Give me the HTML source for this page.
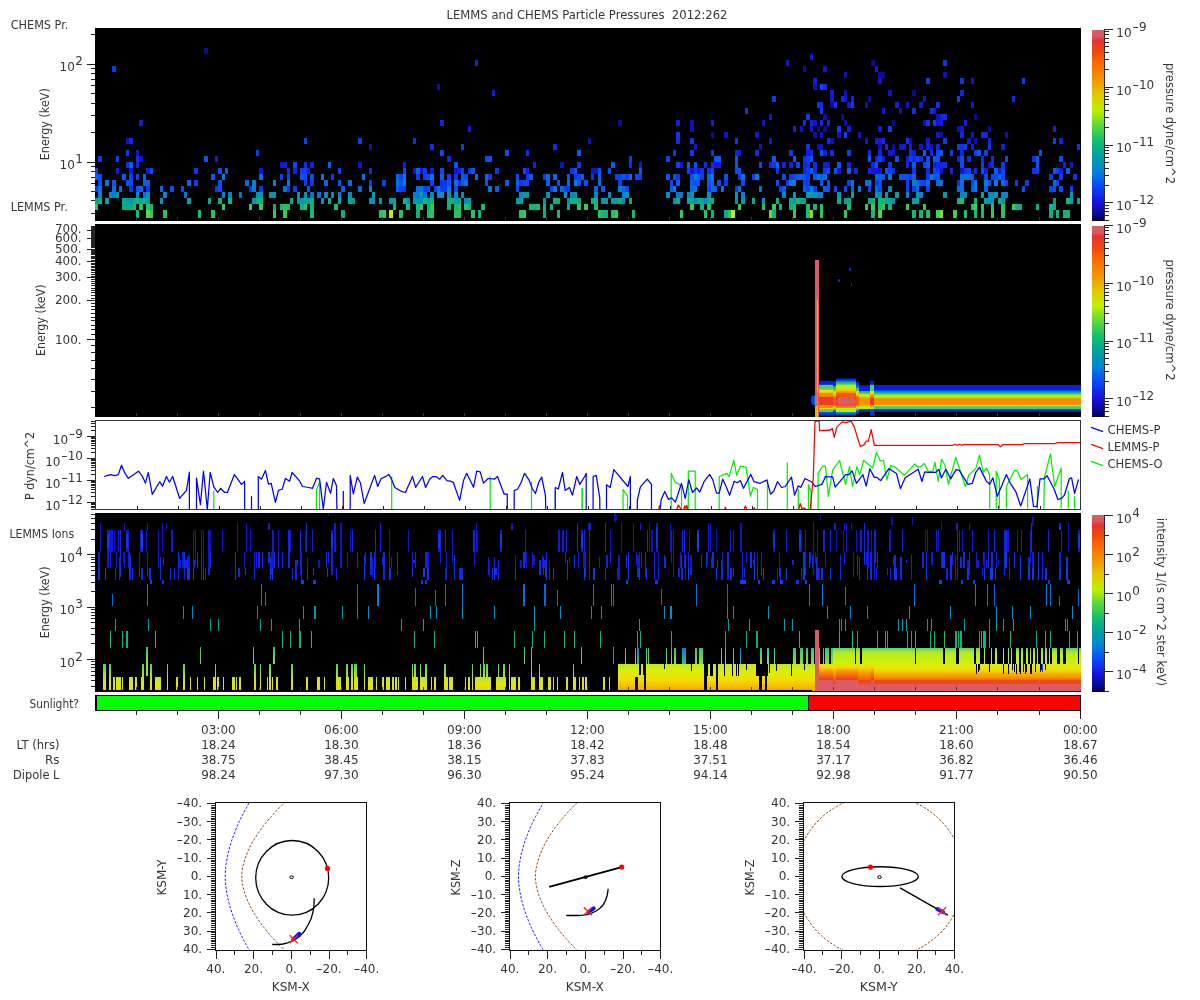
<!DOCTYPE html>
<html><head><meta charset="utf-8"><title>LEMMS and CHEMS Particle Pressures 2012:262</title>
<style>html,body{margin:0;padding:0;background:#fff}svg{display:block}</style></head>
<body>
<svg width="1200" height="1000" viewBox="0 0 1200 1000" font-family="'DejaVu Sans','Liberation Sans',sans-serif" font-size="12" fill="#363636" style="will-change:transform">
<defs>
<linearGradient id="cb" x1="0" y1="0" x2="0" y2="1"><stop offset="0.000" stop-color="#d86064"/><stop offset="0.035" stop-color="#dc555c"/><stop offset="0.055" stop-color="#e63237"/><stop offset="0.115" stop-color="#f04808"/><stop offset="0.180" stop-color="#fa6e00"/><stop offset="0.260" stop-color="#f29600"/><stop offset="0.340" stop-color="#e1c800"/><stop offset="0.420" stop-color="#bef000"/><stop offset="0.500" stop-color="#5ad73c"/><stop offset="0.580" stop-color="#14be6e"/><stop offset="0.660" stop-color="#00a0a0"/><stop offset="0.740" stop-color="#0082dc"/><stop offset="0.820" stop-color="#0a46fa"/><stop offset="0.900" stop-color="#1414dc"/><stop offset="0.960" stop-color="#0a0a96"/><stop offset="1.000" stop-color="#00005a"/></linearGradient>
</defs>
<rect x="0" y="0" width="1200" height="1000" fill="#fff"/>
<text x="446.5" y="19.2" textLength="281" lengthAdjust="spacingAndGlyphs" style="white-space:pre">LEMMS and CHEMS Particle Pressures  2012:262</text>
<text x="10.7" y="28.7" textLength="57.7" lengthAdjust="spacingAndGlyphs">CHEMS Pr.</text>
<text x="10.7" y="210.8" textLength="57" lengthAdjust="spacingAndGlyphs">LEMMS Pr.</text>
<text x="9.5" y="537.5" textLength="64.6" lengthAdjust="spacingAndGlyphs">LEMMS Ions</text>
<g shape-rendering="crispEdges">
<rect x="95" y="28" width="986" height="193" fill="#000"/>
<rect x="95" y="204" width="3" height="6" fill="#26c461"/>
<rect x="95" y="198" width="3" height="6" fill="#04a597"/>
<rect x="95" y="186" width="3" height="6" fill="#0d39f2"/>
<rect x="95" y="174" width="3" height="6" fill="#065def"/>
<rect x="95" y="168" width="3" height="6" fill="#0c3cf4"/>
<rect x="98" y="198" width="4" height="6" fill="#0db380"/>
<rect x="98" y="192" width="4" height="6" fill="#017ede"/>
<rect x="98" y="186" width="4" height="6" fill="#0370e5"/>
<rect x="98" y="180" width="4" height="6" fill="#0a48f9"/>
<rect x="98" y="174" width="4" height="6" fill="#094cf7"/>
<rect x="98" y="156" width="4" height="6" fill="#0d37f1"/>
<rect x="105" y="198" width="4" height="6" fill="#02a39a"/>
<rect x="105" y="180" width="4" height="6" fill="#0276e2"/>
<rect x="109" y="192" width="3" height="6" fill="#0089ce"/>
<rect x="112" y="192" width="4" height="6" fill="#017dde"/>
<rect x="112" y="186" width="4" height="6" fill="#0372e4"/>
<rect x="112" y="180" width="4" height="6" fill="#0758f1"/>
<rect x="112" y="66" width="4" height="6" fill="#0d38f2"/>
<rect x="116" y="192" width="3" height="6" fill="#009aac"/>
<rect x="116" y="168" width="3" height="6" fill="#131be0"/>
<rect x="116" y="156" width="3" height="6" fill="#0c3ef5"/>
<rect x="119" y="186" width="3" height="6" fill="#046de7"/>
<rect x="122" y="204" width="4" height="6" fill="#07ab8d"/>
<rect x="122" y="198" width="4" height="6" fill="#04a795"/>
<rect x="122" y="174" width="4" height="6" fill="#065bef"/>
<rect x="126" y="204" width="3" height="6" fill="#07ab8d"/>
<rect x="126" y="198" width="3" height="6" fill="#01a19e"/>
<rect x="126" y="180" width="3" height="6" fill="#0853f3"/>
<rect x="126" y="162" width="3" height="6" fill="#1028e8"/>
<rect x="126" y="150" width="3" height="6" fill="#0c3bf3"/>
<rect x="126" y="138" width="3" height="6" fill="#1111c8"/>
<rect x="129" y="204" width="4" height="6" fill="#07ab8d"/>
<rect x="129" y="198" width="4" height="6" fill="#0095b6"/>
<rect x="129" y="186" width="4" height="6" fill="#0e34ef"/>
<rect x="129" y="180" width="4" height="6" fill="#0a45f9"/>
<rect x="129" y="174" width="4" height="6" fill="#0b43f8"/>
<rect x="129" y="168" width="4" height="6" fill="#1318de"/>
<rect x="129" y="162" width="4" height="6" fill="#0563eb"/>
<rect x="129" y="138" width="4" height="6" fill="#1028e8"/>
<rect x="133" y="204" width="3" height="6" fill="#14be6e"/>
<rect x="133" y="198" width="3" height="6" fill="#0aaf87"/>
<rect x="136" y="210" width="3" height="8" fill="#14be6e"/>
<rect x="136" y="198" width="3" height="6" fill="#0eb57d"/>
<rect x="136" y="192" width="3" height="6" fill="#0084d8"/>
<rect x="136" y="186" width="3" height="6" fill="#094ff6"/>
<rect x="136" y="174" width="3" height="6" fill="#0b41f7"/>
<rect x="136" y="162" width="3" height="6" fill="#1123e5"/>
<rect x="136" y="156" width="3" height="6" fill="#0f2eec"/>
<rect x="136" y="150" width="3" height="6" fill="#1313d4"/>
<rect x="139" y="204" width="4" height="6" fill="#26c461"/>
<rect x="139" y="198" width="4" height="6" fill="#03a598"/>
<rect x="139" y="186" width="4" height="6" fill="#0468e9"/>
<rect x="139" y="156" width="4" height="6" fill="#1313d7"/>
<rect x="139" y="120" width="4" height="6" fill="#131adf"/>
<rect x="143" y="198" width="3" height="6" fill="#0db381"/>
<rect x="143" y="192" width="3" height="6" fill="#036fe5"/>
<rect x="143" y="180" width="3" height="6" fill="#0661ed"/>
<rect x="143" y="174" width="3" height="6" fill="#0565ea"/>
<rect x="146" y="210" width="4" height="8" fill="#5ad73c"/>
<rect x="146" y="204" width="4" height="6" fill="#26c461"/>
<rect x="146" y="198" width="4" height="6" fill="#009ca8"/>
<rect x="146" y="192" width="4" height="6" fill="#008ec3"/>
<rect x="146" y="186" width="4" height="6" fill="#0c3bf3"/>
<rect x="146" y="180" width="4" height="6" fill="#0759f1"/>
<rect x="146" y="168" width="4" height="6" fill="#131be0"/>
<rect x="150" y="210" width="3" height="8" fill="#37ca55"/>
<rect x="150" y="204" width="3" height="6" fill="#0fb67a"/>
<rect x="150" y="168" width="3" height="6" fill="#094df7"/>
<rect x="160" y="198" width="3" height="6" fill="#0092bb"/>
<rect x="160" y="186" width="3" height="6" fill="#046ae8"/>
<rect x="163" y="210" width="4" height="8" fill="#26c461"/>
<rect x="163" y="192" width="4" height="6" fill="#0083d9"/>
<rect x="170" y="186" width="4" height="6" fill="#0851f4"/>
<rect x="181" y="186" width="3" height="6" fill="#0a48f9"/>
<rect x="184" y="192" width="3" height="6" fill="#0273e3"/>
<rect x="187" y="198" width="4" height="6" fill="#03a499"/>
<rect x="187" y="180" width="4" height="6" fill="#0563ec"/>
<rect x="194" y="180" width="4" height="6" fill="#0c3cf4"/>
<rect x="194" y="168" width="4" height="6" fill="#0e32ee"/>
<rect x="198" y="210" width="3" height="8" fill="#14be6e"/>
<rect x="204" y="156" width="4" height="6" fill="#0851f5"/>
<rect x="204" y="48" width="4" height="6" fill="#0b0b9f"/>
<rect x="208" y="198" width="3" height="6" fill="#04a795"/>
<rect x="211" y="210" width="4" height="8" fill="#26c461"/>
<rect x="211" y="174" width="4" height="6" fill="#0759f0"/>
<rect x="215" y="186" width="3" height="6" fill="#0c3bf3"/>
<rect x="215" y="156" width="3" height="6" fill="#1319df"/>
<rect x="218" y="198" width="4" height="6" fill="#09ae89"/>
<rect x="218" y="186" width="4" height="6" fill="#094bf7"/>
<rect x="218" y="180" width="4" height="6" fill="#094cf7"/>
<rect x="218" y="168" width="4" height="6" fill="#094df7"/>
<rect x="222" y="204" width="3" height="6" fill="#37ca55"/>
<rect x="222" y="192" width="3" height="6" fill="#0089cd"/>
<rect x="222" y="174" width="3" height="6" fill="#017dde"/>
<rect x="225" y="168" width="3" height="6" fill="#0855f3"/>
<rect x="228" y="198" width="4" height="6" fill="#0eb57d"/>
<rect x="228" y="192" width="4" height="6" fill="#0085d6"/>
<rect x="239" y="192" width="3" height="6" fill="#0275e2"/>
<rect x="245" y="180" width="4" height="6" fill="#0469e9"/>
<rect x="249" y="204" width="3" height="6" fill="#37ca55"/>
<rect x="249" y="186" width="3" height="6" fill="#0d36f1"/>
<rect x="252" y="198" width="4" height="6" fill="#0095b6"/>
<rect x="252" y="186" width="4" height="6" fill="#0080dd"/>
<rect x="252" y="180" width="4" height="6" fill="#0082dc"/>
<rect x="256" y="198" width="3" height="6" fill="#0db47f"/>
<rect x="256" y="192" width="3" height="6" fill="#0097b1"/>
<rect x="256" y="150" width="3" height="6" fill="#0c3cf4"/>
<rect x="259" y="204" width="4" height="6" fill="#37ca55"/>
<rect x="259" y="198" width="4" height="6" fill="#0eb57d"/>
<rect x="259" y="192" width="4" height="6" fill="#0097b1"/>
<rect x="259" y="186" width="4" height="6" fill="#0e34ef"/>
<rect x="259" y="174" width="4" height="6" fill="#046ce7"/>
<rect x="259" y="168" width="4" height="6" fill="#1313d8"/>
<rect x="269" y="192" width="4" height="6" fill="#0095b7"/>
<rect x="273" y="210" width="3" height="8" fill="#37ca55"/>
<rect x="273" y="204" width="3" height="6" fill="#07ab8d"/>
<rect x="273" y="192" width="3" height="6" fill="#0098b0"/>
<rect x="273" y="180" width="3" height="6" fill="#0080dd"/>
<rect x="280" y="204" width="3" height="6" fill="#14be6e"/>
<rect x="280" y="174" width="3" height="6" fill="#0b41f7"/>
<rect x="280" y="162" width="3" height="6" fill="#1313d8"/>
<rect x="283" y="210" width="4" height="8" fill="#37ca55"/>
<rect x="283" y="204" width="4" height="6" fill="#26c461"/>
<rect x="283" y="186" width="4" height="6" fill="#0370e5"/>
<rect x="283" y="162" width="4" height="6" fill="#131adf"/>
<rect x="287" y="204" width="3" height="6" fill="#14be6e"/>
<rect x="287" y="186" width="3" height="6" fill="#0d35f0"/>
<rect x="287" y="180" width="3" height="6" fill="#0080dd"/>
<rect x="287" y="174" width="3" height="6" fill="#0b43f8"/>
<rect x="287" y="168" width="3" height="6" fill="#0f2bea"/>
<rect x="290" y="198" width="3" height="6" fill="#08ac8b"/>
<rect x="293" y="186" width="4" height="6" fill="#0c3df4"/>
<rect x="293" y="168" width="4" height="6" fill="#1027e7"/>
<rect x="293" y="162" width="4" height="6" fill="#0a46fa"/>
<rect x="297" y="198" width="3" height="6" fill="#009ca8"/>
<rect x="297" y="192" width="3" height="6" fill="#0096b4"/>
<rect x="300" y="204" width="4" height="6" fill="#0db381"/>
<rect x="300" y="198" width="4" height="6" fill="#0092bb"/>
<rect x="300" y="174" width="4" height="6" fill="#0851f5"/>
<rect x="300" y="168" width="4" height="6" fill="#0c3ef5"/>
<rect x="304" y="204" width="3" height="6" fill="#26c461"/>
<rect x="304" y="198" width="3" height="6" fill="#06a990"/>
<rect x="304" y="192" width="3" height="6" fill="#0097b1"/>
<rect x="304" y="180" width="3" height="6" fill="#0c3bf3"/>
<rect x="304" y="174" width="3" height="6" fill="#094af8"/>
<rect x="304" y="168" width="3" height="6" fill="#0a44f9"/>
<rect x="304" y="162" width="3" height="6" fill="#0e30ed"/>
<rect x="304" y="138" width="3" height="6" fill="#0c3ef5"/>
<rect x="307" y="198" width="3" height="6" fill="#04a697"/>
<rect x="307" y="186" width="3" height="6" fill="#075af0"/>
<rect x="307" y="168" width="3" height="6" fill="#1124e6"/>
<rect x="310" y="210" width="4" height="8" fill="#14be6e"/>
<rect x="310" y="204" width="4" height="6" fill="#0db381"/>
<rect x="310" y="198" width="4" height="6" fill="#09ad8a"/>
<rect x="310" y="192" width="4" height="6" fill="#0371e5"/>
<rect x="310" y="180" width="4" height="6" fill="#0d38f1"/>
<rect x="310" y="174" width="4" height="6" fill="#0854f3"/>
<rect x="310" y="162" width="4" height="6" fill="#1220e3"/>
<rect x="317" y="192" width="4" height="6" fill="#036fe5"/>
<rect x="321" y="198" width="3" height="6" fill="#009aab"/>
<rect x="321" y="174" width="3" height="6" fill="#0179e0"/>
<rect x="324" y="192" width="4" height="6" fill="#0089cd"/>
<rect x="324" y="180" width="4" height="6" fill="#0565eb"/>
<rect x="328" y="198" width="3" height="6" fill="#0cb282"/>
<rect x="328" y="162" width="3" height="6" fill="#065dee"/>
<rect x="331" y="192" width="3" height="6" fill="#008bca"/>
<rect x="331" y="174" width="3" height="6" fill="#0c3cf4"/>
<rect x="334" y="204" width="4" height="6" fill="#14be6e"/>
<rect x="338" y="198" width="3" height="6" fill="#07ab8e"/>
<rect x="338" y="192" width="3" height="6" fill="#0081dc"/>
<rect x="338" y="180" width="3" height="6" fill="#094df7"/>
<rect x="338" y="168" width="3" height="6" fill="#0b41f7"/>
<rect x="341" y="210" width="4" height="8" fill="#0aaf87"/>
<rect x="341" y="186" width="4" height="6" fill="#0759f1"/>
<rect x="348" y="198" width="4" height="6" fill="#07aa90"/>
<rect x="348" y="192" width="4" height="6" fill="#008fc2"/>
<rect x="348" y="180" width="4" height="6" fill="#046ae8"/>
<rect x="352" y="198" width="3" height="6" fill="#00a19f"/>
<rect x="358" y="186" width="4" height="6" fill="#0562ec"/>
<rect x="358" y="162" width="4" height="6" fill="#1414d9"/>
<rect x="358" y="138" width="4" height="6" fill="#0c3cf4"/>
<rect x="362" y="174" width="3" height="6" fill="#0277e2"/>
<rect x="369" y="198" width="3" height="6" fill="#0093ba"/>
<rect x="369" y="186" width="3" height="6" fill="#0081dc"/>
<rect x="369" y="180" width="3" height="6" fill="#0c3bf3"/>
<rect x="369" y="168" width="3" height="6" fill="#0f2cea"/>
<rect x="369" y="144" width="3" height="6" fill="#1010bd"/>
<rect x="372" y="198" width="3" height="6" fill="#0098b0"/>
<rect x="372" y="192" width="3" height="6" fill="#009aad"/>
<rect x="379" y="210" width="3" height="8" fill="#26c461"/>
<rect x="379" y="198" width="3" height="6" fill="#0099ae"/>
<rect x="382" y="210" width="4" height="8" fill="#37ca55"/>
<rect x="382" y="180" width="4" height="6" fill="#0b40f7"/>
<rect x="389" y="210" width="4" height="8" fill="#bef000"/>
<rect x="389" y="198" width="4" height="6" fill="#0095b6"/>
<rect x="393" y="204" width="3" height="6" fill="#0db381"/>
<rect x="393" y="198" width="3" height="6" fill="#02a39b"/>
<rect x="396" y="186" width="3" height="6" fill="#065cef"/>
<rect x="396" y="180" width="3" height="6" fill="#0370e5"/>
<rect x="396" y="174" width="3" height="6" fill="#0562ec"/>
<rect x="399" y="210" width="4" height="8" fill="#26c461"/>
<rect x="399" y="186" width="4" height="6" fill="#0a45f9"/>
<rect x="399" y="180" width="4" height="6" fill="#0853f3"/>
<rect x="399" y="174" width="4" height="6" fill="#0b41f7"/>
<rect x="403" y="198" width="3" height="6" fill="#0bb184"/>
<rect x="403" y="186" width="3" height="6" fill="#0d35f0"/>
<rect x="403" y="180" width="3" height="6" fill="#0080dd"/>
<rect x="403" y="174" width="3" height="6" fill="#017be0"/>
<rect x="403" y="168" width="3" height="6" fill="#094af8"/>
<rect x="403" y="162" width="3" height="6" fill="#131be0"/>
<rect x="406" y="204" width="4" height="6" fill="#14be6e"/>
<rect x="406" y="198" width="4" height="6" fill="#0096b3"/>
<rect x="413" y="198" width="3" height="6" fill="#009ba9"/>
<rect x="413" y="192" width="3" height="6" fill="#0085d6"/>
<rect x="413" y="168" width="3" height="6" fill="#1414da"/>
<rect x="413" y="138" width="3" height="6" fill="#0f2fec"/>
<rect x="416" y="210" width="4" height="8" fill="#0aaf87"/>
<rect x="416" y="204" width="4" height="6" fill="#14be6e"/>
<rect x="416" y="198" width="4" height="6" fill="#0094b9"/>
<rect x="416" y="192" width="4" height="6" fill="#0273e3"/>
<rect x="416" y="186" width="4" height="6" fill="#0372e4"/>
<rect x="416" y="174" width="4" height="6" fill="#0d39f2"/>
<rect x="416" y="168" width="4" height="6" fill="#0564eb"/>
<rect x="420" y="204" width="3" height="6" fill="#37ca55"/>
<rect x="420" y="198" width="3" height="6" fill="#0091be"/>
<rect x="420" y="192" width="3" height="6" fill="#009bab"/>
<rect x="420" y="186" width="3" height="6" fill="#0370e5"/>
<rect x="420" y="168" width="3" height="6" fill="#1313d7"/>
<rect x="423" y="198" width="4" height="6" fill="#0fb67b"/>
<rect x="423" y="192" width="4" height="6" fill="#0370e5"/>
<rect x="423" y="186" width="4" height="6" fill="#0c3df4"/>
<rect x="423" y="174" width="4" height="6" fill="#0b43f8"/>
<rect x="423" y="168" width="4" height="6" fill="#0c3af3"/>
<rect x="427" y="210" width="3" height="8" fill="#14be6e"/>
<rect x="427" y="204" width="3" height="6" fill="#07ab8d"/>
<rect x="427" y="198" width="3" height="6" fill="#02a39a"/>
<rect x="427" y="186" width="3" height="6" fill="#084ff5"/>
<rect x="427" y="174" width="3" height="6" fill="#0850f5"/>
<rect x="430" y="210" width="4" height="8" fill="#26c461"/>
<rect x="430" y="204" width="4" height="6" fill="#37ca55"/>
<rect x="430" y="198" width="4" height="6" fill="#0eb57c"/>
<rect x="430" y="192" width="4" height="6" fill="#0086d4"/>
<rect x="430" y="180" width="4" height="6" fill="#0b41f7"/>
<rect x="430" y="174" width="4" height="6" fill="#0276e2"/>
<rect x="430" y="168" width="4" height="6" fill="#1319df"/>
<rect x="430" y="144" width="4" height="6" fill="#1029e9"/>
<rect x="434" y="186" width="3" height="6" fill="#0c3ef5"/>
<rect x="437" y="192" width="3" height="6" fill="#0089ce"/>
<rect x="437" y="186" width="3" height="6" fill="#0370e5"/>
<rect x="437" y="84" width="3" height="6" fill="#0e0eb3"/>
<rect x="440" y="192" width="4" height="6" fill="#0093ba"/>
<rect x="440" y="186" width="4" height="6" fill="#0c3ef5"/>
<rect x="440" y="180" width="4" height="6" fill="#0d36f0"/>
<rect x="440" y="174" width="4" height="6" fill="#065fed"/>
<rect x="440" y="168" width="4" height="6" fill="#0a46fa"/>
<rect x="440" y="150" width="4" height="6" fill="#0949f8"/>
<rect x="440" y="120" width="4" height="6" fill="#1123e5"/>
<rect x="444" y="186" width="3" height="6" fill="#0c3af3"/>
<rect x="444" y="180" width="3" height="6" fill="#0d37f1"/>
<rect x="447" y="204" width="4" height="6" fill="#0fb67a"/>
<rect x="447" y="198" width="4" height="6" fill="#0aaf88"/>
<rect x="447" y="192" width="4" height="6" fill="#0099ad"/>
<rect x="447" y="186" width="4" height="6" fill="#017dde"/>
<rect x="447" y="180" width="4" height="6" fill="#0851f4"/>
<rect x="447" y="174" width="4" height="6" fill="#0a44f9"/>
<rect x="447" y="156" width="4" height="6" fill="#102ae9"/>
<rect x="451" y="198" width="3" height="6" fill="#0aaf86"/>
<rect x="454" y="210" width="4" height="8" fill="#26c461"/>
<rect x="454" y="204" width="4" height="6" fill="#0fb67a"/>
<rect x="454" y="198" width="4" height="6" fill="#009ea4"/>
<rect x="454" y="192" width="4" height="6" fill="#008fc2"/>
<rect x="454" y="186" width="4" height="6" fill="#094cf7"/>
<rect x="454" y="180" width="4" height="6" fill="#0274e3"/>
<rect x="454" y="174" width="4" height="6" fill="#0e34ef"/>
<rect x="454" y="168" width="4" height="6" fill="#1313d3"/>
<rect x="454" y="162" width="4" height="6" fill="#0852f4"/>
<rect x="458" y="210" width="3" height="8" fill="#26c461"/>
<rect x="458" y="204" width="3" height="6" fill="#26c461"/>
<rect x="458" y="198" width="3" height="6" fill="#04a696"/>
<rect x="458" y="180" width="3" height="6" fill="#0e34ef"/>
<rect x="458" y="168" width="3" height="6" fill="#1122e4"/>
<rect x="461" y="192" width="3" height="6" fill="#0098b1"/>
<rect x="461" y="180" width="3" height="6" fill="#094ff6"/>
<rect x="461" y="174" width="3" height="6" fill="#075af0"/>
<rect x="461" y="168" width="3" height="6" fill="#0b3ff6"/>
<rect x="461" y="144" width="3" height="6" fill="#0c3bf3"/>
<rect x="464" y="204" width="4" height="6" fill="#26c461"/>
<rect x="464" y="198" width="4" height="6" fill="#008fc2"/>
<rect x="464" y="180" width="4" height="6" fill="#0372e4"/>
<rect x="464" y="174" width="4" height="6" fill="#0a49f9"/>
<rect x="468" y="204" width="3" height="6" fill="#0fb67a"/>
<rect x="468" y="198" width="3" height="6" fill="#0099ae"/>
<rect x="468" y="168" width="3" height="6" fill="#0f2eeb"/>
<rect x="468" y="126" width="3" height="6" fill="#131adf"/>
<rect x="471" y="210" width="4" height="8" fill="#26c461"/>
<rect x="471" y="168" width="4" height="6" fill="#0757f1"/>
<rect x="475" y="174" width="3" height="6" fill="#046ae8"/>
<rect x="475" y="60" width="3" height="6" fill="#1122e4"/>
<rect x="478" y="210" width="3" height="8" fill="#0fb67a"/>
<rect x="481" y="204" width="4" height="6" fill="#14be6e"/>
<rect x="485" y="180" width="3" height="6" fill="#094df7"/>
<rect x="485" y="174" width="3" height="6" fill="#046ce7"/>
<rect x="485" y="156" width="3" height="6" fill="#0a48f9"/>
<rect x="488" y="186" width="4" height="6" fill="#0179e0"/>
<rect x="488" y="174" width="4" height="6" fill="#0c3bf3"/>
<rect x="488" y="156" width="4" height="6" fill="#0852f4"/>
<rect x="492" y="90" width="3" height="6" fill="#121ce1"/>
<rect x="495" y="186" width="4" height="6" fill="#065dee"/>
<rect x="495" y="168" width="4" height="6" fill="#0e34ef"/>
<rect x="505" y="180" width="4" height="6" fill="#065cef"/>
<rect x="505" y="150" width="4" height="6" fill="#094ef6"/>
<rect x="516" y="198" width="3" height="6" fill="#01a19e"/>
<rect x="516" y="186" width="3" height="6" fill="#0a45f9"/>
<rect x="516" y="180" width="3" height="6" fill="#0660ed"/>
<rect x="516" y="174" width="3" height="6" fill="#0a48f9"/>
<rect x="519" y="210" width="4" height="8" fill="#26c461"/>
<rect x="519" y="198" width="4" height="6" fill="#009fa1"/>
<rect x="519" y="192" width="4" height="6" fill="#0088d0"/>
<rect x="519" y="180" width="4" height="6" fill="#0c3bf4"/>
<rect x="523" y="210" width="3" height="8" fill="#37ca55"/>
<rect x="523" y="192" width="3" height="6" fill="#0095b6"/>
<rect x="523" y="180" width="3" height="6" fill="#0a47fa"/>
<rect x="523" y="168" width="3" height="6" fill="#0a47f9"/>
<rect x="526" y="192" width="3" height="6" fill="#009ba9"/>
<rect x="526" y="180" width="3" height="6" fill="#0949f8"/>
<rect x="526" y="174" width="3" height="6" fill="#0d38f1"/>
<rect x="526" y="168" width="3" height="6" fill="#131be0"/>
<rect x="526" y="150" width="3" height="6" fill="#0f2cea"/>
<rect x="529" y="204" width="4" height="6" fill="#0fb67a"/>
<rect x="529" y="174" width="4" height="6" fill="#065eee"/>
<rect x="533" y="204" width="3" height="6" fill="#0db381"/>
<rect x="533" y="162" width="3" height="6" fill="#1122e4"/>
<rect x="536" y="204" width="4" height="6" fill="#14be6e"/>
<rect x="543" y="210" width="3" height="8" fill="#0aaf87"/>
<rect x="543" y="204" width="3" height="6" fill="#0db381"/>
<rect x="543" y="198" width="3" height="6" fill="#0097b3"/>
<rect x="543" y="174" width="3" height="6" fill="#0c3bf3"/>
<rect x="546" y="192" width="4" height="6" fill="#0095b7"/>
<rect x="546" y="180" width="4" height="6" fill="#0660ed"/>
<rect x="546" y="174" width="4" height="6" fill="#046ae8"/>
<rect x="550" y="204" width="3" height="6" fill="#0fb67a"/>
<rect x="550" y="186" width="3" height="6" fill="#0d38f1"/>
<rect x="553" y="198" width="4" height="6" fill="#0aae88"/>
<rect x="553" y="186" width="4" height="6" fill="#0276e2"/>
<rect x="553" y="174" width="4" height="6" fill="#046ae8"/>
<rect x="553" y="144" width="4" height="6" fill="#0f2deb"/>
<rect x="557" y="210" width="3" height="8" fill="#14be6e"/>
<rect x="557" y="198" width="3" height="6" fill="#0aaf87"/>
<rect x="557" y="180" width="3" height="6" fill="#084ff5"/>
<rect x="560" y="186" width="4" height="6" fill="#046ce7"/>
<rect x="560" y="162" width="4" height="6" fill="#1212d0"/>
<rect x="564" y="192" width="3" height="6" fill="#0098b0"/>
<rect x="564" y="186" width="3" height="6" fill="#0c3ef5"/>
<rect x="567" y="204" width="3" height="6" fill="#07ab8d"/>
<rect x="567" y="198" width="3" height="6" fill="#008ec3"/>
<rect x="567" y="186" width="3" height="6" fill="#0d38f2"/>
<rect x="567" y="180" width="3" height="6" fill="#046de7"/>
<rect x="567" y="174" width="3" height="6" fill="#0756f2"/>
<rect x="570" y="198" width="4" height="6" fill="#0db380"/>
<rect x="570" y="192" width="4" height="6" fill="#008dc6"/>
<rect x="570" y="168" width="4" height="6" fill="#0d38f2"/>
<rect x="574" y="198" width="3" height="6" fill="#0db381"/>
<rect x="574" y="192" width="3" height="6" fill="#0093ba"/>
<rect x="574" y="180" width="3" height="6" fill="#017cdf"/>
<rect x="574" y="174" width="3" height="6" fill="#0d35f0"/>
<rect x="574" y="168" width="3" height="6" fill="#075af0"/>
<rect x="577" y="204" width="4" height="6" fill="#26c461"/>
<rect x="577" y="198" width="4" height="6" fill="#0bb183"/>
<rect x="577" y="180" width="4" height="6" fill="#0756f2"/>
<rect x="577" y="174" width="4" height="6" fill="#0b42f8"/>
<rect x="577" y="162" width="4" height="6" fill="#0d37f1"/>
<rect x="577" y="150" width="4" height="6" fill="#0757f1"/>
<rect x="581" y="174" width="3" height="6" fill="#075af0"/>
<rect x="584" y="204" width="4" height="6" fill="#37ca55"/>
<rect x="584" y="180" width="4" height="6" fill="#094ef6"/>
<rect x="588" y="138" width="3" height="6" fill="#0e0eb3"/>
<rect x="591" y="198" width="3" height="6" fill="#0cb183"/>
<rect x="591" y="174" width="3" height="6" fill="#0d37f1"/>
<rect x="591" y="168" width="3" height="6" fill="#1313d4"/>
<rect x="594" y="204" width="4" height="6" fill="#14be6e"/>
<rect x="594" y="198" width="4" height="6" fill="#0cb282"/>
<rect x="594" y="192" width="4" height="6" fill="#0087d2"/>
<rect x="594" y="186" width="4" height="6" fill="#0564eb"/>
<rect x="594" y="168" width="4" height="6" fill="#1313d8"/>
<rect x="598" y="210" width="3" height="8" fill="#26c461"/>
<rect x="598" y="180" width="3" height="6" fill="#036ee6"/>
<rect x="598" y="174" width="3" height="6" fill="#0562ec"/>
<rect x="598" y="168" width="3" height="6" fill="#0756f2"/>
<rect x="601" y="210" width="4" height="8" fill="#0fb67a"/>
<rect x="601" y="198" width="4" height="6" fill="#0098b0"/>
<rect x="601" y="186" width="4" height="6" fill="#0759f0"/>
<rect x="605" y="210" width="3" height="8" fill="#0fb67a"/>
<rect x="605" y="198" width="3" height="6" fill="#00a09f"/>
<rect x="608" y="192" width="3" height="6" fill="#0088d0"/>
<rect x="608" y="168" width="3" height="6" fill="#0a45fa"/>
<rect x="611" y="210" width="4" height="8" fill="#26c461"/>
<rect x="611" y="198" width="4" height="6" fill="#009ca7"/>
<rect x="611" y="162" width="4" height="6" fill="#0660ed"/>
<rect x="615" y="210" width="3" height="8" fill="#37ca55"/>
<rect x="615" y="198" width="3" height="6" fill="#009ea3"/>
<rect x="615" y="174" width="3" height="6" fill="#0b41f7"/>
<rect x="618" y="198" width="4" height="6" fill="#07ab8d"/>
<rect x="618" y="186" width="4" height="6" fill="#017ae0"/>
<rect x="618" y="180" width="4" height="6" fill="#0c3df5"/>
<rect x="618" y="174" width="4" height="6" fill="#0c3ef5"/>
<rect x="618" y="120" width="4" height="6" fill="#0b0b9f"/>
<rect x="622" y="198" width="3" height="6" fill="#0090c0"/>
<rect x="622" y="192" width="3" height="6" fill="#0083da"/>
<rect x="622" y="186" width="3" height="6" fill="#0565ea"/>
<rect x="622" y="174" width="3" height="6" fill="#075af0"/>
<rect x="625" y="192" width="4" height="6" fill="#0099af"/>
<rect x="625" y="186" width="4" height="6" fill="#0b43f8"/>
<rect x="625" y="174" width="4" height="6" fill="#0d39f2"/>
<rect x="629" y="198" width="3" height="6" fill="#06aa90"/>
<rect x="629" y="174" width="3" height="6" fill="#046be8"/>
<rect x="629" y="162" width="3" height="6" fill="#1028e8"/>
<rect x="629" y="156" width="3" height="6" fill="#0c3df5"/>
<rect x="632" y="210" width="3" height="8" fill="#14be6e"/>
<rect x="635" y="174" width="4" height="6" fill="#0a45f9"/>
<rect x="639" y="174" width="3" height="6" fill="#0c3af3"/>
<rect x="639" y="168" width="3" height="6" fill="#075af0"/>
<rect x="639" y="162" width="3" height="6" fill="#1318df"/>
<rect x="666" y="192" width="4" height="6" fill="#008fc3"/>
<rect x="666" y="174" width="4" height="6" fill="#0756f2"/>
<rect x="666" y="156" width="4" height="6" fill="#0a44f9"/>
<rect x="670" y="186" width="3" height="6" fill="#065bef"/>
<rect x="670" y="180" width="3" height="6" fill="#0a47f9"/>
<rect x="673" y="198" width="3" height="6" fill="#0094b7"/>
<rect x="673" y="186" width="3" height="6" fill="#017bdf"/>
<rect x="673" y="174" width="3" height="6" fill="#094ff6"/>
<rect x="673" y="150" width="3" height="6" fill="#0c3af3"/>
<rect x="676" y="198" width="4" height="6" fill="#08ac8c"/>
<rect x="676" y="192" width="4" height="6" fill="#0275e3"/>
<rect x="676" y="180" width="4" height="6" fill="#065def"/>
<rect x="676" y="174" width="4" height="6" fill="#0d37f1"/>
<rect x="676" y="162" width="4" height="6" fill="#0b41f7"/>
<rect x="676" y="138" width="4" height="6" fill="#0e30ed"/>
<rect x="676" y="132" width="4" height="6" fill="#0d38f2"/>
<rect x="676" y="120" width="4" height="6" fill="#1121e4"/>
<rect x="680" y="210" width="3" height="8" fill="#37ca55"/>
<rect x="680" y="192" width="3" height="6" fill="#017be0"/>
<rect x="680" y="162" width="3" height="6" fill="#1414d9"/>
<rect x="687" y="198" width="3" height="6" fill="#09ae89"/>
<rect x="687" y="192" width="3" height="6" fill="#008bc9"/>
<rect x="687" y="168" width="3" height="6" fill="#0a44f9"/>
<rect x="687" y="162" width="3" height="6" fill="#0561ec"/>
<rect x="690" y="204" width="4" height="6" fill="#37ca55"/>
<rect x="690" y="198" width="4" height="6" fill="#02a39a"/>
<rect x="690" y="192" width="4" height="6" fill="#0094b8"/>
<rect x="690" y="186" width="4" height="6" fill="#046be7"/>
<rect x="690" y="180" width="4" height="6" fill="#065fee"/>
<rect x="690" y="174" width="4" height="6" fill="#094ef6"/>
<rect x="690" y="168" width="4" height="6" fill="#1414da"/>
<rect x="690" y="150" width="4" height="6" fill="#0c3af3"/>
<rect x="690" y="138" width="4" height="6" fill="#0e33ee"/>
<rect x="690" y="126" width="4" height="6" fill="#0f0fbc"/>
<rect x="690" y="120" width="4" height="6" fill="#0f0fbc"/>
<rect x="694" y="198" width="3" height="6" fill="#008fc2"/>
<rect x="694" y="186" width="3" height="6" fill="#017cdf"/>
<rect x="694" y="180" width="3" height="6" fill="#0949f8"/>
<rect x="694" y="174" width="3" height="6" fill="#017ede"/>
<rect x="694" y="168" width="3" height="6" fill="#0e32ee"/>
<rect x="694" y="162" width="3" height="6" fill="#094df6"/>
<rect x="694" y="144" width="3" height="6" fill="#1313d4"/>
<rect x="697" y="198" width="3" height="6" fill="#05a893"/>
<rect x="697" y="180" width="3" height="6" fill="#0854f3"/>
<rect x="697" y="174" width="3" height="6" fill="#0661ed"/>
<rect x="697" y="168" width="3" height="6" fill="#1318de"/>
<rect x="700" y="204" width="4" height="6" fill="#0db381"/>
<rect x="700" y="198" width="4" height="6" fill="#05a893"/>
<rect x="700" y="174" width="4" height="6" fill="#0c3bf3"/>
<rect x="700" y="168" width="4" height="6" fill="#0e32ee"/>
<rect x="704" y="210" width="3" height="8" fill="#26c461"/>
<rect x="704" y="198" width="3" height="6" fill="#008ec3"/>
<rect x="704" y="162" width="3" height="6" fill="#1125e6"/>
<rect x="707" y="204" width="4" height="6" fill="#26c461"/>
<rect x="707" y="198" width="4" height="6" fill="#05a893"/>
<rect x="707" y="192" width="4" height="6" fill="#0095b6"/>
<rect x="707" y="186" width="4" height="6" fill="#0b43f8"/>
<rect x="707" y="180" width="4" height="6" fill="#0759f0"/>
<rect x="707" y="174" width="4" height="6" fill="#046be8"/>
<rect x="707" y="168" width="4" height="6" fill="#0f2fec"/>
<rect x="711" y="210" width="3" height="8" fill="#0fb67a"/>
<rect x="711" y="198" width="3" height="6" fill="#0cb282"/>
<rect x="711" y="186" width="3" height="6" fill="#0468e9"/>
<rect x="711" y="180" width="3" height="6" fill="#0566ea"/>
<rect x="711" y="174" width="3" height="6" fill="#0080dd"/>
<rect x="711" y="168" width="3" height="6" fill="#0b43f8"/>
<rect x="711" y="162" width="3" height="6" fill="#0f2eec"/>
<rect x="711" y="150" width="3" height="6" fill="#0d37f1"/>
<rect x="711" y="132" width="3" height="6" fill="#0c0ca2"/>
<rect x="711" y="120" width="3" height="6" fill="#121ce1"/>
<rect x="714" y="186" width="3" height="6" fill="#065def"/>
<rect x="714" y="162" width="3" height="6" fill="#1414dc"/>
<rect x="714" y="156" width="3" height="6" fill="#065cef"/>
<rect x="717" y="180" width="4" height="6" fill="#0850f5"/>
<rect x="717" y="162" width="4" height="6" fill="#131be0"/>
<rect x="717" y="156" width="4" height="6" fill="#0562ec"/>
<rect x="721" y="186" width="3" height="6" fill="#046de7"/>
<rect x="724" y="210" width="4" height="8" fill="#0aaf87"/>
<rect x="724" y="180" width="4" height="6" fill="#0c3af3"/>
<rect x="724" y="174" width="4" height="6" fill="#0852f4"/>
<rect x="724" y="132" width="4" height="6" fill="#1212d0"/>
<rect x="728" y="210" width="3" height="8" fill="#26c461"/>
<rect x="731" y="210" width="4" height="8" fill="#bef000"/>
<rect x="735" y="198" width="3" height="6" fill="#0090c0"/>
<rect x="735" y="192" width="3" height="6" fill="#009aad"/>
<rect x="735" y="186" width="3" height="6" fill="#0d36f0"/>
<rect x="735" y="168" width="3" height="6" fill="#094cf7"/>
<rect x="735" y="162" width="3" height="6" fill="#0854f3"/>
<rect x="735" y="156" width="3" height="6" fill="#0759f0"/>
<rect x="735" y="150" width="3" height="6" fill="#1027e7"/>
<rect x="735" y="138" width="3" height="6" fill="#0d39f2"/>
<rect x="738" y="204" width="3" height="6" fill="#37ca55"/>
<rect x="738" y="186" width="3" height="6" fill="#0370e5"/>
<rect x="738" y="174" width="3" height="6" fill="#0c3af3"/>
<rect x="738" y="168" width="3" height="6" fill="#094ef6"/>
<rect x="738" y="150" width="3" height="6" fill="#1416dd"/>
<rect x="741" y="198" width="4" height="6" fill="#009da6"/>
<rect x="741" y="192" width="4" height="6" fill="#0081dd"/>
<rect x="741" y="180" width="4" height="6" fill="#094af8"/>
<rect x="741" y="174" width="4" height="6" fill="#0277e2"/>
<rect x="745" y="108" width="3" height="6" fill="#0e33ef"/>
<rect x="752" y="198" width="3" height="6" fill="#09ad8a"/>
<rect x="752" y="174" width="3" height="6" fill="#0d38f1"/>
<rect x="755" y="174" width="4" height="6" fill="#0080dd"/>
<rect x="755" y="150" width="4" height="6" fill="#1029e9"/>
<rect x="755" y="132" width="4" height="6" fill="#1414d9"/>
<rect x="759" y="186" width="3" height="6" fill="#0370e5"/>
<rect x="759" y="162" width="3" height="6" fill="#094ef6"/>
<rect x="759" y="144" width="3" height="6" fill="#1010bd"/>
<rect x="762" y="204" width="3" height="6" fill="#26c461"/>
<rect x="762" y="198" width="3" height="6" fill="#0091be"/>
<rect x="762" y="120" width="3" height="6" fill="#1111c8"/>
<rect x="769" y="210" width="3" height="8" fill="#73dd2d"/>
<rect x="769" y="162" width="3" height="6" fill="#0f2ceb"/>
<rect x="769" y="138" width="3" height="6" fill="#1415dd"/>
<rect x="769" y="114" width="3" height="6" fill="#1416dd"/>
<rect x="772" y="210" width="4" height="8" fill="#0fb67a"/>
<rect x="772" y="204" width="4" height="6" fill="#37ca55"/>
<rect x="772" y="162" width="4" height="6" fill="#0d36f0"/>
<rect x="772" y="156" width="4" height="6" fill="#0756f2"/>
<rect x="772" y="96" width="4" height="6" fill="#0c3af3"/>
<rect x="776" y="198" width="3" height="6" fill="#0cb282"/>
<rect x="776" y="180" width="3" height="6" fill="#0852f4"/>
<rect x="776" y="168" width="3" height="6" fill="#0e30ed"/>
<rect x="776" y="162" width="3" height="6" fill="#0564eb"/>
<rect x="779" y="204" width="3" height="6" fill="#0fb67a"/>
<rect x="779" y="186" width="3" height="6" fill="#0b40f6"/>
<rect x="782" y="192" width="4" height="6" fill="#0080dd"/>
<rect x="782" y="186" width="4" height="6" fill="#065fed"/>
<rect x="782" y="174" width="4" height="6" fill="#094bf8"/>
<rect x="782" y="162" width="4" height="6" fill="#1121e4"/>
<rect x="786" y="180" width="3" height="6" fill="#0b40f6"/>
<rect x="786" y="60" width="3" height="6" fill="#1313d4"/>
<rect x="789" y="204" width="4" height="6" fill="#0fb67a"/>
<rect x="789" y="198" width="4" height="6" fill="#04a695"/>
<rect x="789" y="180" width="4" height="6" fill="#007fdd"/>
<rect x="789" y="174" width="4" height="6" fill="#0d38f1"/>
<rect x="789" y="162" width="4" height="6" fill="#1122e4"/>
<rect x="789" y="150" width="4" height="6" fill="#0d36f1"/>
<rect x="793" y="210" width="3" height="8" fill="#37ca55"/>
<rect x="793" y="204" width="3" height="6" fill="#14be6e"/>
<rect x="793" y="198" width="3" height="6" fill="#009ca7"/>
<rect x="793" y="192" width="3" height="6" fill="#0096b5"/>
<rect x="793" y="180" width="3" height="6" fill="#017bdf"/>
<rect x="793" y="174" width="3" height="6" fill="#0b41f7"/>
<rect x="793" y="156" width="3" height="6" fill="#065cef"/>
<rect x="793" y="126" width="3" height="6" fill="#1123e5"/>
<rect x="796" y="198" width="4" height="6" fill="#0fb779"/>
<rect x="796" y="174" width="4" height="6" fill="#065eee"/>
<rect x="796" y="162" width="4" height="6" fill="#0b41f7"/>
<rect x="800" y="198" width="3" height="6" fill="#06a892"/>
<rect x="800" y="174" width="3" height="6" fill="#0563eb"/>
<rect x="800" y="126" width="3" height="6" fill="#1212ce"/>
<rect x="803" y="198" width="3" height="6" fill="#009fa2"/>
<rect x="803" y="186" width="3" height="6" fill="#065cef"/>
<rect x="803" y="180" width="3" height="6" fill="#0b3ff6"/>
<rect x="803" y="174" width="3" height="6" fill="#0854f3"/>
<rect x="803" y="168" width="3" height="6" fill="#1026e7"/>
<rect x="803" y="162" width="3" height="6" fill="#1028e8"/>
<rect x="803" y="156" width="3" height="6" fill="#0f2cea"/>
<rect x="803" y="120" width="3" height="6" fill="#0f2cea"/>
<rect x="803" y="66" width="3" height="6" fill="#0c0ca5"/>
<rect x="806" y="210" width="4" height="8" fill="#1dc168"/>
<rect x="806" y="204" width="4" height="6" fill="#14be6e"/>
<rect x="806" y="192" width="4" height="6" fill="#009aab"/>
<rect x="806" y="186" width="4" height="6" fill="#0a49f9"/>
<rect x="806" y="180" width="4" height="6" fill="#0c3af3"/>
<rect x="806" y="174" width="4" height="6" fill="#0d37f1"/>
<rect x="806" y="168" width="4" height="6" fill="#0d39f2"/>
<rect x="806" y="162" width="4" height="6" fill="#0f2bea"/>
<rect x="806" y="156" width="4" height="6" fill="#0c3ef5"/>
<rect x="806" y="150" width="4" height="6" fill="#1319df"/>
<rect x="806" y="144" width="4" height="6" fill="#0d35f0"/>
<rect x="806" y="114" width="4" height="6" fill="#0c3af3"/>
<rect x="810" y="210" width="3" height="8" fill="#80e025"/>
<rect x="810" y="192" width="3" height="6" fill="#02a39b"/>
<rect x="810" y="186" width="3" height="6" fill="#0276e2"/>
<rect x="810" y="168" width="3" height="6" fill="#0661ed"/>
<rect x="810" y="156" width="3" height="6" fill="#0854f3"/>
<rect x="810" y="150" width="3" height="6" fill="#1027e8"/>
<rect x="810" y="126" width="3" height="6" fill="#1313d8"/>
<rect x="810" y="120" width="3" height="6" fill="#1121e4"/>
<rect x="810" y="54" width="3" height="6" fill="#1415dd"/>
<rect x="813" y="204" width="4" height="6" fill="#0fb67a"/>
<rect x="813" y="192" width="4" height="6" fill="#008cc8"/>
<rect x="813" y="186" width="4" height="6" fill="#0d39f2"/>
<rect x="813" y="174" width="4" height="6" fill="#065eee"/>
<rect x="813" y="168" width="4" height="6" fill="#1027e7"/>
<rect x="813" y="162" width="4" height="6" fill="#102ae9"/>
<rect x="813" y="132" width="4" height="6" fill="#0d0da9"/>
<rect x="813" y="120" width="4" height="6" fill="#1313d6"/>
<rect x="813" y="84" width="4" height="6" fill="#1010c0"/>
<rect x="813" y="78" width="4" height="6" fill="#1319df"/>
<rect x="817" y="192" width="3" height="6" fill="#0084d9"/>
<rect x="817" y="174" width="3" height="6" fill="#0276e2"/>
<rect x="817" y="144" width="3" height="6" fill="#1010bf"/>
<rect x="817" y="126" width="3" height="6" fill="#0a0a97"/>
<rect x="817" y="102" width="3" height="6" fill="#0e33ef"/>
<rect x="820" y="210" width="3" height="8" fill="#2ec75b"/>
<rect x="820" y="204" width="3" height="6" fill="#1dc168"/>
<rect x="820" y="192" width="3" height="6" fill="#0083da"/>
<rect x="820" y="180" width="3" height="6" fill="#065eee"/>
<rect x="820" y="174" width="3" height="6" fill="#065fed"/>
<rect x="820" y="150" width="3" height="6" fill="#0853f4"/>
<rect x="820" y="144" width="3" height="6" fill="#1313d5"/>
<rect x="820" y="132" width="3" height="6" fill="#1212ce"/>
<rect x="820" y="120" width="3" height="6" fill="#1028e8"/>
<rect x="820" y="108" width="3" height="6" fill="#0d39f2"/>
<rect x="820" y="102" width="3" height="6" fill="#1027e7"/>
<rect x="820" y="84" width="3" height="6" fill="#0b40f6"/>
<rect x="823" y="186" width="4" height="6" fill="#065eee"/>
<rect x="823" y="174" width="4" height="6" fill="#0276e2"/>
<rect x="823" y="168" width="4" height="6" fill="#0d39f2"/>
<rect x="823" y="162" width="4" height="6" fill="#131adf"/>
<rect x="823" y="150" width="4" height="6" fill="#121de1"/>
<rect x="823" y="126" width="4" height="6" fill="#0c0ca4"/>
<rect x="823" y="114" width="4" height="6" fill="#1010bd"/>
<rect x="823" y="84" width="4" height="6" fill="#0f2cea"/>
<rect x="823" y="66" width="4" height="6" fill="#1313d7"/>
<rect x="827" y="186" width="3" height="6" fill="#0757f2"/>
<rect x="827" y="180" width="3" height="6" fill="#0851f5"/>
<rect x="827" y="168" width="3" height="6" fill="#0850f5"/>
<rect x="827" y="162" width="3" height="6" fill="#1416dd"/>
<rect x="827" y="138" width="3" height="6" fill="#0f2bea"/>
<rect x="827" y="120" width="3" height="6" fill="#1220e3"/>
<rect x="830" y="150" width="4" height="6" fill="#102ae9"/>
<rect x="830" y="138" width="4" height="6" fill="#1111c4"/>
<rect x="830" y="102" width="4" height="6" fill="#0c0ca1"/>
<rect x="830" y="96" width="4" height="6" fill="#1313d7"/>
<rect x="830" y="90" width="4" height="6" fill="#1319df"/>
<rect x="834" y="186" width="3" height="6" fill="#0a48f9"/>
<rect x="834" y="168" width="3" height="6" fill="#094ef6"/>
<rect x="834" y="102" width="3" height="6" fill="#0e32ee"/>
<rect x="837" y="198" width="4" height="6" fill="#06aa90"/>
<rect x="837" y="192" width="4" height="6" fill="#009da6"/>
<rect x="837" y="168" width="4" height="6" fill="#1313d2"/>
<rect x="837" y="162" width="4" height="6" fill="#0855f3"/>
<rect x="837" y="132" width="4" height="6" fill="#1111c7"/>
<rect x="837" y="126" width="4" height="6" fill="#0c3ef5"/>
<rect x="841" y="114" width="3" height="6" fill="#0c0ca5"/>
<rect x="841" y="96" width="3" height="6" fill="#1029e8"/>
<rect x="844" y="210" width="3" height="8" fill="#2ec75b"/>
<rect x="844" y="198" width="3" height="6" fill="#02a39a"/>
<rect x="844" y="186" width="3" height="6" fill="#0a48f9"/>
<rect x="844" y="132" width="3" height="6" fill="#0c3ef5"/>
<rect x="844" y="120" width="3" height="6" fill="#0c0ca7"/>
<rect x="844" y="96" width="3" height="6" fill="#1317de"/>
<rect x="844" y="90" width="3" height="6" fill="#1010bd"/>
<rect x="844" y="72" width="3" height="6" fill="#1010bd"/>
<rect x="847" y="204" width="4" height="6" fill="#14be6e"/>
<rect x="847" y="198" width="4" height="6" fill="#08ac8c"/>
<rect x="847" y="180" width="4" height="6" fill="#0c3df4"/>
<rect x="847" y="168" width="4" height="6" fill="#0563ec"/>
<rect x="847" y="162" width="4" height="6" fill="#121de1"/>
<rect x="847" y="150" width="4" height="6" fill="#0b3ff6"/>
<rect x="847" y="126" width="4" height="6" fill="#121de1"/>
<rect x="847" y="102" width="4" height="6" fill="#1414d9"/>
<rect x="851" y="192" width="3" height="6" fill="#02a29c"/>
<rect x="851" y="186" width="3" height="6" fill="#0566ea"/>
<rect x="851" y="180" width="3" height="6" fill="#0370e5"/>
<rect x="851" y="102" width="3" height="6" fill="#0c3af3"/>
<rect x="851" y="96" width="3" height="6" fill="#1125e6"/>
<rect x="854" y="168" width="4" height="6" fill="#1026e7"/>
<rect x="858" y="186" width="3" height="6" fill="#0278e1"/>
<rect x="858" y="132" width="3" height="6" fill="#1212ce"/>
<rect x="865" y="204" width="3" height="6" fill="#2ec75b"/>
<rect x="865" y="180" width="3" height="6" fill="#0274e3"/>
<rect x="865" y="138" width="3" height="6" fill="#1313d2"/>
<rect x="865" y="102" width="3" height="6" fill="#1010c2"/>
<rect x="868" y="198" width="3" height="6" fill="#04a697"/>
<rect x="868" y="186" width="3" height="6" fill="#0a45f9"/>
<rect x="868" y="180" width="3" height="6" fill="#0370e5"/>
<rect x="868" y="168" width="3" height="6" fill="#1122e4"/>
<rect x="868" y="156" width="3" height="6" fill="#0757f1"/>
<rect x="868" y="150" width="3" height="6" fill="#1027e8"/>
<rect x="868" y="96" width="3" height="6" fill="#0c0ca3"/>
<rect x="871" y="210" width="4" height="8" fill="#12ba74"/>
<rect x="871" y="204" width="4" height="6" fill="#40ce4f"/>
<rect x="871" y="198" width="4" height="6" fill="#0bb085"/>
<rect x="871" y="168" width="4" height="6" fill="#1416dd"/>
<rect x="871" y="162" width="4" height="6" fill="#1123e5"/>
<rect x="871" y="60" width="4" height="6" fill="#0a0a97"/>
<rect x="875" y="192" width="3" height="6" fill="#0099af"/>
<rect x="875" y="186" width="3" height="6" fill="#036fe5"/>
<rect x="875" y="180" width="3" height="6" fill="#0c3bf3"/>
<rect x="875" y="174" width="3" height="6" fill="#0565ea"/>
<rect x="875" y="168" width="3" height="6" fill="#1416dd"/>
<rect x="875" y="162" width="3" height="6" fill="#0850f5"/>
<rect x="875" y="156" width="3" height="6" fill="#0f2bea"/>
<rect x="875" y="138" width="3" height="6" fill="#121ce1"/>
<rect x="875" y="66" width="3" height="6" fill="#1318de"/>
<rect x="878" y="210" width="4" height="8" fill="#51d442"/>
<rect x="878" y="204" width="4" height="6" fill="#14be6e"/>
<rect x="878" y="198" width="4" height="6" fill="#11ba75"/>
<rect x="878" y="192" width="4" height="6" fill="#008ec3"/>
<rect x="878" y="186" width="4" height="6" fill="#0a48f9"/>
<rect x="878" y="180" width="4" height="6" fill="#094ef6"/>
<rect x="878" y="174" width="4" height="6" fill="#0660ed"/>
<rect x="878" y="168" width="4" height="6" fill="#1313d4"/>
<rect x="878" y="156" width="4" height="6" fill="#0b40f6"/>
<rect x="878" y="150" width="4" height="6" fill="#1026e7"/>
<rect x="878" y="144" width="4" height="6" fill="#0f0fb9"/>
<rect x="878" y="138" width="4" height="6" fill="#1414dc"/>
<rect x="878" y="126" width="4" height="6" fill="#1318df"/>
<rect x="878" y="78" width="4" height="6" fill="#1212cb"/>
<rect x="878" y="72" width="4" height="6" fill="#0b0b9e"/>
<rect x="882" y="204" width="3" height="6" fill="#2ec75b"/>
<rect x="882" y="198" width="3" height="6" fill="#0eb57c"/>
<rect x="882" y="174" width="3" height="6" fill="#0855f3"/>
<rect x="882" y="156" width="3" height="6" fill="#1318de"/>
<rect x="882" y="138" width="3" height="6" fill="#1028e8"/>
<rect x="882" y="108" width="3" height="6" fill="#1414dc"/>
<rect x="882" y="72" width="3" height="6" fill="#0b0ba0"/>
<rect x="885" y="198" width="3" height="6" fill="#08ac8d"/>
<rect x="885" y="192" width="3" height="6" fill="#009bab"/>
<rect x="885" y="168" width="3" height="6" fill="#0757f1"/>
<rect x="885" y="144" width="3" height="6" fill="#1028e8"/>
<rect x="888" y="204" width="4" height="6" fill="#0fb67a"/>
<rect x="888" y="198" width="4" height="6" fill="#009fa3"/>
<rect x="888" y="186" width="4" height="6" fill="#0082dc"/>
<rect x="888" y="174" width="4" height="6" fill="#0372e4"/>
<rect x="888" y="168" width="4" height="6" fill="#0c3df5"/>
<rect x="888" y="162" width="4" height="6" fill="#0e34ef"/>
<rect x="888" y="150" width="4" height="6" fill="#1317de"/>
<rect x="888" y="126" width="4" height="6" fill="#0c3cf4"/>
<rect x="888" y="90" width="4" height="6" fill="#1212ce"/>
<rect x="892" y="198" width="3" height="6" fill="#0099ae"/>
<rect x="892" y="168" width="3" height="6" fill="#0e31ed"/>
<rect x="892" y="150" width="3" height="6" fill="#1414db"/>
<rect x="892" y="144" width="3" height="6" fill="#0b0b9f"/>
<rect x="892" y="120" width="3" height="6" fill="#0a0a99"/>
<rect x="895" y="192" width="4" height="6" fill="#05a794"/>
<rect x="895" y="156" width="4" height="6" fill="#084ff5"/>
<rect x="895" y="102" width="4" height="6" fill="#121de2"/>
<rect x="899" y="174" width="3" height="6" fill="#0757f1"/>
<rect x="899" y="144" width="3" height="6" fill="#1414dc"/>
<rect x="899" y="108" width="3" height="6" fill="#0f0fb6"/>
<rect x="902" y="174" width="4" height="6" fill="#0756f2"/>
<rect x="902" y="144" width="4" height="6" fill="#1318df"/>
<rect x="906" y="204" width="3" height="6" fill="#40ce4f"/>
<rect x="906" y="192" width="3" height="6" fill="#0085d6"/>
<rect x="906" y="186" width="3" height="6" fill="#0c3df5"/>
<rect x="906" y="180" width="3" height="6" fill="#0b40f6"/>
<rect x="906" y="174" width="3" height="6" fill="#094cf7"/>
<rect x="906" y="162" width="3" height="6" fill="#1122e4"/>
<rect x="906" y="156" width="3" height="6" fill="#1319df"/>
<rect x="906" y="138" width="3" height="6" fill="#0e30ed"/>
<rect x="906" y="102" width="3" height="6" fill="#1212cd"/>
<rect x="909" y="174" width="3" height="6" fill="#0c3cf4"/>
<rect x="909" y="156" width="3" height="6" fill="#0b40f6"/>
<rect x="909" y="150" width="3" height="6" fill="#0e30ed"/>
<rect x="909" y="144" width="3" height="6" fill="#131be0"/>
<rect x="909" y="138" width="3" height="6" fill="#0d0da8"/>
<rect x="912" y="210" width="4" height="8" fill="#12ba74"/>
<rect x="912" y="198" width="4" height="6" fill="#009ca8"/>
<rect x="912" y="186" width="4" height="6" fill="#0c3bf3"/>
<rect x="912" y="180" width="4" height="6" fill="#017dde"/>
<rect x="912" y="174" width="4" height="6" fill="#065dee"/>
<rect x="912" y="168" width="4" height="6" fill="#0d37f1"/>
<rect x="912" y="162" width="4" height="6" fill="#0759f1"/>
<rect x="912" y="156" width="4" height="6" fill="#102ae9"/>
<rect x="912" y="150" width="4" height="6" fill="#121de1"/>
<rect x="912" y="108" width="4" height="6" fill="#102ae9"/>
<rect x="912" y="90" width="4" height="6" fill="#0a0a99"/>
<rect x="916" y="198" width="3" height="6" fill="#06a991"/>
<rect x="916" y="192" width="3" height="6" fill="#0098b0"/>
<rect x="916" y="186" width="3" height="6" fill="#0469e8"/>
<rect x="916" y="180" width="3" height="6" fill="#0468e9"/>
<rect x="916" y="156" width="3" height="6" fill="#0a45fa"/>
<rect x="919" y="210" width="4" height="8" fill="#12ba74"/>
<rect x="919" y="192" width="4" height="6" fill="#0083d9"/>
<rect x="919" y="180" width="4" height="6" fill="#094ef6"/>
<rect x="919" y="156" width="4" height="6" fill="#0f2bea"/>
<rect x="919" y="144" width="4" height="6" fill="#1313d5"/>
<rect x="919" y="102" width="4" height="6" fill="#1416dd"/>
<rect x="923" y="204" width="3" height="6" fill="#2ec75b"/>
<rect x="923" y="180" width="3" height="6" fill="#0b43f8"/>
<rect x="923" y="162" width="3" height="6" fill="#0a44f9"/>
<rect x="923" y="150" width="3" height="6" fill="#0660ed"/>
<rect x="923" y="120" width="3" height="6" fill="#0e0eb5"/>
<rect x="923" y="96" width="3" height="6" fill="#1010bf"/>
<rect x="926" y="210" width="4" height="8" fill="#1dc168"/>
<rect x="926" y="186" width="4" height="6" fill="#0b40f6"/>
<rect x="926" y="180" width="4" height="6" fill="#046ae8"/>
<rect x="926" y="174" width="4" height="6" fill="#0d38f1"/>
<rect x="926" y="168" width="4" height="6" fill="#1125e6"/>
<rect x="926" y="162" width="4" height="6" fill="#0758f1"/>
<rect x="926" y="156" width="4" height="6" fill="#094bf7"/>
<rect x="926" y="144" width="4" height="6" fill="#1121e4"/>
<rect x="926" y="138" width="4" height="6" fill="#1415dd"/>
<rect x="926" y="120" width="4" height="6" fill="#0e33ee"/>
<rect x="926" y="78" width="4" height="6" fill="#0c3cf4"/>
<rect x="930" y="174" width="3" height="6" fill="#017bdf"/>
<rect x="930" y="150" width="3" height="6" fill="#1028e8"/>
<rect x="930" y="144" width="3" height="6" fill="#0e0eb4"/>
<rect x="930" y="108" width="3" height="6" fill="#0e33ef"/>
<rect x="933" y="174" width="3" height="6" fill="#075af0"/>
<rect x="933" y="168" width="3" height="6" fill="#0c3ef5"/>
<rect x="933" y="162" width="3" height="6" fill="#121fe2"/>
<rect x="933" y="156" width="3" height="6" fill="#075af0"/>
<rect x="933" y="120" width="3" height="6" fill="#0c3af3"/>
<rect x="933" y="108" width="3" height="6" fill="#1319df"/>
<rect x="936" y="210" width="4" height="8" fill="#40ce4f"/>
<rect x="936" y="180" width="4" height="6" fill="#046ce7"/>
<rect x="936" y="174" width="4" height="6" fill="#0851f5"/>
<rect x="936" y="168" width="4" height="6" fill="#0d37f1"/>
<rect x="936" y="162" width="4" height="6" fill="#1123e5"/>
<rect x="936" y="156" width="4" height="6" fill="#0855f3"/>
<rect x="936" y="150" width="4" height="6" fill="#0a46fa"/>
<rect x="936" y="144" width="4" height="6" fill="#121de1"/>
<rect x="936" y="132" width="4" height="6" fill="#1414d9"/>
<rect x="936" y="120" width="4" height="6" fill="#1414dc"/>
<rect x="936" y="114" width="4" height="6" fill="#1010bd"/>
<rect x="936" y="102" width="4" height="6" fill="#0f2fec"/>
<rect x="940" y="210" width="3" height="8" fill="#80e025"/>
<rect x="940" y="180" width="3" height="6" fill="#0274e3"/>
<rect x="940" y="168" width="3" height="6" fill="#1313d7"/>
<rect x="940" y="162" width="3" height="6" fill="#1122e4"/>
<rect x="940" y="150" width="3" height="6" fill="#0757f2"/>
<rect x="940" y="132" width="3" height="6" fill="#0c0ca4"/>
<rect x="940" y="120" width="3" height="6" fill="#121ce1"/>
<rect x="940" y="114" width="3" height="6" fill="#1125e6"/>
<rect x="943" y="192" width="4" height="6" fill="#009ca8"/>
<rect x="943" y="162" width="4" height="6" fill="#0f2cea"/>
<rect x="943" y="138" width="4" height="6" fill="#0d36f0"/>
<rect x="943" y="114" width="4" height="6" fill="#0e30ed"/>
<rect x="943" y="72" width="4" height="6" fill="#0f0fbb"/>
<rect x="943" y="60" width="4" height="6" fill="#0e34ef"/>
<rect x="950" y="168" width="3" height="6" fill="#1029e9"/>
<rect x="950" y="150" width="3" height="6" fill="#0c3ef5"/>
<rect x="953" y="210" width="4" height="8" fill="#40ce4f"/>
<rect x="957" y="198" width="3" height="6" fill="#0db380"/>
<rect x="957" y="186" width="3" height="6" fill="#0468e9"/>
<rect x="957" y="180" width="3" height="6" fill="#0d35f0"/>
<rect x="957" y="156" width="3" height="6" fill="#1123e5"/>
<rect x="957" y="144" width="3" height="6" fill="#0c3df5"/>
<rect x="957" y="126" width="3" height="6" fill="#1010c1"/>
<rect x="957" y="96" width="3" height="6" fill="#0c3df5"/>
<rect x="960" y="198" width="4" height="6" fill="#1ac06a"/>
<rect x="960" y="192" width="4" height="6" fill="#0087d1"/>
<rect x="960" y="186" width="4" height="6" fill="#0372e4"/>
<rect x="960" y="180" width="4" height="6" fill="#0371e5"/>
<rect x="960" y="174" width="4" height="6" fill="#0371e4"/>
<rect x="960" y="168" width="4" height="6" fill="#1313d7"/>
<rect x="960" y="162" width="4" height="6" fill="#0949f8"/>
<rect x="960" y="156" width="4" height="6" fill="#094df7"/>
<rect x="960" y="150" width="4" height="6" fill="#1124e6"/>
<rect x="960" y="144" width="4" height="6" fill="#0e34ef"/>
<rect x="960" y="132" width="4" height="6" fill="#1029e9"/>
<rect x="960" y="126" width="4" height="6" fill="#1414dc"/>
<rect x="960" y="90" width="4" height="6" fill="#1123e5"/>
<rect x="960" y="78" width="4" height="6" fill="#0e33ee"/>
<rect x="964" y="210" width="3" height="8" fill="#1dc168"/>
<rect x="964" y="192" width="3" height="6" fill="#008ec5"/>
<rect x="964" y="174" width="3" height="6" fill="#0275e2"/>
<rect x="964" y="168" width="3" height="6" fill="#0d38f1"/>
<rect x="964" y="144" width="3" height="6" fill="#0c3df4"/>
<rect x="964" y="120" width="3" height="6" fill="#121de1"/>
<rect x="967" y="174" width="4" height="6" fill="#036fe5"/>
<rect x="967" y="168" width="4" height="6" fill="#0b41f7"/>
<rect x="967" y="156" width="4" height="6" fill="#0e30ed"/>
<rect x="967" y="138" width="4" height="6" fill="#1318de"/>
<rect x="971" y="204" width="3" height="6" fill="#1dc168"/>
<rect x="971" y="186" width="3" height="6" fill="#075af0"/>
<rect x="971" y="180" width="3" height="6" fill="#0b41f7"/>
<rect x="971" y="174" width="3" height="6" fill="#065fed"/>
<rect x="971" y="144" width="3" height="6" fill="#121ee2"/>
<rect x="971" y="132" width="3" height="6" fill="#1313d2"/>
<rect x="971" y="102" width="3" height="6" fill="#1415dc"/>
<rect x="971" y="78" width="3" height="6" fill="#1313d2"/>
<rect x="974" y="210" width="3" height="8" fill="#12ba74"/>
<rect x="974" y="204" width="3" height="6" fill="#40ce4f"/>
<rect x="974" y="198" width="3" height="6" fill="#0bb086"/>
<rect x="974" y="186" width="3" height="6" fill="#017cdf"/>
<rect x="974" y="180" width="3" height="6" fill="#0278e1"/>
<rect x="974" y="168" width="3" height="6" fill="#102ae9"/>
<rect x="974" y="150" width="3" height="6" fill="#0b3ff6"/>
<rect x="974" y="138" width="3" height="6" fill="#0e0eb3"/>
<rect x="974" y="114" width="3" height="6" fill="#0a0a98"/>
<rect x="977" y="150" width="4" height="6" fill="#075af0"/>
<rect x="981" y="210" width="3" height="8" fill="#12ba74"/>
<rect x="981" y="204" width="3" height="6" fill="#2ec75b"/>
<rect x="981" y="192" width="3" height="6" fill="#03a598"/>
<rect x="981" y="168" width="3" height="6" fill="#0852f4"/>
<rect x="981" y="162" width="3" height="6" fill="#0c3ef5"/>
<rect x="981" y="156" width="3" height="6" fill="#1028e8"/>
<rect x="981" y="132" width="3" height="6" fill="#0f2cea"/>
<rect x="984" y="198" width="4" height="6" fill="#009ba9"/>
<rect x="984" y="186" width="4" height="6" fill="#0562ec"/>
<rect x="984" y="180" width="4" height="6" fill="#017ddf"/>
<rect x="984" y="174" width="4" height="6" fill="#0a46fa"/>
<rect x="984" y="168" width="4" height="6" fill="#121ce1"/>
<rect x="984" y="150" width="4" height="6" fill="#0c3ef5"/>
<rect x="984" y="132" width="4" height="6" fill="#1026e7"/>
<rect x="988" y="198" width="3" height="6" fill="#0094b9"/>
<rect x="988" y="192" width="3" height="6" fill="#0091be"/>
<rect x="988" y="180" width="3" height="6" fill="#0756f2"/>
<rect x="988" y="162" width="3" height="6" fill="#1313d8"/>
<rect x="988" y="144" width="3" height="6" fill="#0d36f1"/>
<rect x="988" y="138" width="3" height="6" fill="#1121e4"/>
<rect x="988" y="126" width="3" height="6" fill="#0b0b9f"/>
<rect x="991" y="210" width="3" height="8" fill="#37ca55"/>
<rect x="991" y="204" width="3" height="6" fill="#26c461"/>
<rect x="991" y="198" width="3" height="6" fill="#00a0a0"/>
<rect x="991" y="192" width="3" height="6" fill="#0084d8"/>
<rect x="991" y="174" width="3" height="6" fill="#0a45f9"/>
<rect x="991" y="162" width="3" height="6" fill="#1029e9"/>
<rect x="991" y="156" width="3" height="6" fill="#0f2deb"/>
<rect x="994" y="192" width="4" height="6" fill="#0098b0"/>
<rect x="994" y="180" width="4" height="6" fill="#017dde"/>
<rect x="994" y="174" width="4" height="6" fill="#0a46fa"/>
<rect x="994" y="168" width="4" height="6" fill="#0661ed"/>
<rect x="998" y="198" width="3" height="6" fill="#0bb184"/>
<rect x="998" y="174" width="3" height="6" fill="#0468e9"/>
<rect x="998" y="168" width="3" height="6" fill="#131be0"/>
<rect x="1001" y="210" width="4" height="8" fill="#26c461"/>
<rect x="1001" y="204" width="4" height="6" fill="#26c461"/>
<rect x="1001" y="198" width="4" height="6" fill="#009aab"/>
<rect x="1001" y="192" width="4" height="6" fill="#0080dd"/>
<rect x="1001" y="180" width="4" height="6" fill="#046ae8"/>
<rect x="1001" y="174" width="4" height="6" fill="#0949f8"/>
<rect x="1001" y="168" width="4" height="6" fill="#0b42f8"/>
<rect x="1001" y="162" width="4" height="6" fill="#0d36f0"/>
<rect x="1001" y="144" width="4" height="6" fill="#121ee2"/>
<rect x="1005" y="192" width="3" height="6" fill="#0087d2"/>
<rect x="1005" y="180" width="3" height="6" fill="#0b43f8"/>
<rect x="1005" y="156" width="3" height="6" fill="#0a47fa"/>
<rect x="1005" y="132" width="3" height="6" fill="#1010c1"/>
<rect x="1012" y="204" width="3" height="6" fill="#37ca55"/>
<rect x="1012" y="96" width="3" height="6" fill="#1027e7"/>
<rect x="1015" y="204" width="3" height="6" fill="#0fb67a"/>
<rect x="1015" y="180" width="3" height="6" fill="#0c3bf4"/>
<rect x="1018" y="204" width="4" height="6" fill="#07ab8d"/>
<rect x="1022" y="186" width="3" height="6" fill="#094df7"/>
<rect x="1022" y="78" width="3" height="6" fill="#0c3df5"/>
<rect x="1025" y="180" width="4" height="6" fill="#0c3bf3"/>
<rect x="1032" y="168" width="4" height="6" fill="#0e33ef"/>
<rect x="1032" y="156" width="4" height="6" fill="#0f2eeb"/>
<rect x="1036" y="204" width="3" height="6" fill="#07ab8d"/>
<rect x="1036" y="168" width="3" height="6" fill="#0b3ff6"/>
<rect x="1036" y="162" width="3" height="6" fill="#0756f2"/>
<rect x="1036" y="156" width="3" height="6" fill="#0758f1"/>
<rect x="1039" y="150" width="3" height="6" fill="#0755f2"/>
<rect x="1049" y="210" width="4" height="8" fill="#0aaf87"/>
<rect x="1049" y="204" width="4" height="6" fill="#0db381"/>
<rect x="1049" y="186" width="4" height="6" fill="#0b42f7"/>
<rect x="1049" y="174" width="4" height="6" fill="#0d39f2"/>
<rect x="1053" y="204" width="3" height="6" fill="#07ab8d"/>
<rect x="1053" y="198" width="3" height="6" fill="#009aac"/>
<rect x="1053" y="186" width="3" height="6" fill="#094ff6"/>
<rect x="1053" y="180" width="3" height="6" fill="#036fe5"/>
<rect x="1053" y="168" width="3" height="6" fill="#065cef"/>
<rect x="1053" y="138" width="3" height="6" fill="#0c3df5"/>
<rect x="1053" y="126" width="3" height="6" fill="#1123e5"/>
<rect x="1056" y="210" width="3" height="8" fill="#0fb67a"/>
<rect x="1056" y="180" width="3" height="6" fill="#0b42f8"/>
<rect x="1056" y="168" width="3" height="6" fill="#0b42f8"/>
<rect x="1059" y="186" width="4" height="6" fill="#094ef6"/>
<rect x="1059" y="174" width="4" height="6" fill="#0b3ff6"/>
<rect x="1059" y="168" width="4" height="6" fill="#1319df"/>
<rect x="1059" y="156" width="4" height="6" fill="#0949f8"/>
<rect x="1059" y="138" width="4" height="6" fill="#1122e4"/>
<rect x="1063" y="210" width="3" height="8" fill="#0fb67a"/>
<rect x="1063" y="162" width="3" height="6" fill="#1123e5"/>
<rect x="1066" y="210" width="4" height="8" fill="#0fb67a"/>
<rect x="1066" y="198" width="4" height="6" fill="#0eb57d"/>
<rect x="1066" y="168" width="4" height="6" fill="#065cef"/>
<rect x="1070" y="198" width="3" height="6" fill="#009baa"/>
<rect x="1070" y="192" width="3" height="6" fill="#0099ae"/>
<rect x="1070" y="186" width="3" height="6" fill="#0b40f6"/>
<rect x="1070" y="162" width="3" height="6" fill="#1313d2"/>
<rect x="1073" y="174" width="4" height="6" fill="#0e34ef"/>
<rect x="1077" y="198" width="3" height="6" fill="#05a893"/>
<rect x="1077" y="144" width="3" height="6" fill="#0e33ef"/>
</g>
<g shape-rendering="crispEdges">
<rect x="95" y="224" width="986" height="193" fill="#000"/>
</g>
<linearGradient id="b1" x1="0" y1="385" x2="0" y2="411.7" gradientUnits="userSpaceOnUse"><stop offset="0.000" stop-color="#0a1ee6"/><stop offset="0.169" stop-color="#0a1ee6"/><stop offset="0.206" stop-color="#0a50f0"/><stop offset="0.281" stop-color="#00b48c"/><stop offset="0.337" stop-color="#50d25a"/><stop offset="0.393" stop-color="#b4f00a"/><stop offset="0.461" stop-color="#b4f00a"/><stop offset="0.517" stop-color="#f88c00"/><stop offset="0.742" stop-color="#f88c00"/><stop offset="0.768" stop-color="#f0dc00"/><stop offset="0.805" stop-color="#50d25a"/><stop offset="0.880" stop-color="#50d25a"/><stop offset="0.899" stop-color="#0a50f0"/><stop offset="1.000" stop-color="#0a1ee6"/></linearGradient>
<rect x="874" y="385" width="207" height="26.7" fill="url(#b1)"/>
<linearGradient id="b2" x1="0" y1="380.8" x2="0" y2="415.8" gradientUnits="userSpaceOnUse"><stop offset="0.000" stop-color="#0a1ee6"/><stop offset="0.103" stop-color="#0a1ee6"/><stop offset="0.120" stop-color="#50d25a"/><stop offset="0.243" stop-color="#50d25a"/><stop offset="0.263" stop-color="#f0dc00"/><stop offset="0.329" stop-color="#f0dc00"/><stop offset="0.349" stop-color="#f88c00"/><stop offset="0.443" stop-color="#f88c00"/><stop offset="0.469" stop-color="#eb3c28"/><stop offset="0.686" stop-color="#eb3c28"/><stop offset="0.703" stop-color="#f88c00"/><stop offset="0.771" stop-color="#f88c00"/><stop offset="0.786" stop-color="#f0dc00"/><stop offset="0.811" stop-color="#f0dc00"/><stop offset="0.823" stop-color="#50d25a"/><stop offset="0.877" stop-color="#50d25a"/><stop offset="0.891" stop-color="#0a50f0"/><stop offset="1.000" stop-color="#0a1ee6"/></linearGradient>
<rect x="819" y="380.8" width="14" height="35" fill="url(#b2)"/>
<linearGradient id="b3" x1="0" y1="381" x2="0" y2="415.5" gradientUnits="userSpaceOnUse"><stop offset="0.000" stop-color="#0a1ee6"/><stop offset="0.130" stop-color="#0a1ee6"/><stop offset="0.159" stop-color="#00b48c"/><stop offset="0.261" stop-color="#50d25a"/><stop offset="0.319" stop-color="#b4f00a"/><stop offset="0.377" stop-color="#f0dc00"/><stop offset="0.449" stop-color="#f88c00"/><stop offset="0.493" stop-color="#f45a0a"/><stop offset="0.681" stop-color="#f45a0a"/><stop offset="0.725" stop-color="#f88c00"/><stop offset="0.768" stop-color="#b4f00a"/><stop offset="0.826" stop-color="#50d25a"/><stop offset="0.870" stop-color="#0a50f0"/><stop offset="1.000" stop-color="#0a1ee6"/></linearGradient>
<rect x="833" y="381" width="3" height="34.5" fill="url(#b3)"/>
<linearGradient id="b4" x1="0" y1="378" x2="0" y2="415.8" gradientUnits="userSpaceOnUse"><stop offset="0.000" stop-color="#000"/><stop offset="0.026" stop-color="#0a1ee6"/><stop offset="0.074" stop-color="#0a50f0"/><stop offset="0.106" stop-color="#00b48c"/><stop offset="0.169" stop-color="#50d25a"/><stop offset="0.185" stop-color="#b4f00a"/><stop offset="0.265" stop-color="#b4f00a"/><stop offset="0.286" stop-color="#f0dc00"/><stop offset="0.331" stop-color="#f5be00"/><stop offset="0.384" stop-color="#f88c00"/><stop offset="0.402" stop-color="#f45a0a"/><stop offset="0.484" stop-color="#f45a0a"/><stop offset="0.508" stop-color="#eb3c28"/><stop offset="0.709" stop-color="#eb3c28"/><stop offset="0.722" stop-color="#f45a0a"/><stop offset="0.783" stop-color="#f88c00"/><stop offset="0.799" stop-color="#b4f00a"/><stop offset="0.886" stop-color="#b4f00a"/><stop offset="0.899" stop-color="#00b48c"/><stop offset="0.952" stop-color="#0a50f0"/><stop offset="1.000" stop-color="#0a1ee6"/></linearGradient>
<rect x="836" y="378" width="20" height="37.8" fill="url(#b4)"/>
<rect x="837.3" y="397" width="18.4" height="7.8" rx="3.2" fill="#dc5c64"/>
<linearGradient id="b5" x1="0" y1="382" x2="0" y2="414" gradientUnits="userSpaceOnUse"><stop offset="0.000" stop-color="#0a1ee6"/><stop offset="0.125" stop-color="#0a50f0"/><stop offset="0.188" stop-color="#00b48c"/><stop offset="0.250" stop-color="#50d25a"/><stop offset="0.312" stop-color="#b4f00a"/><stop offset="0.375" stop-color="#f0dc00"/><stop offset="0.453" stop-color="#f88c00"/><stop offset="0.500" stop-color="#f45a0a"/><stop offset="0.703" stop-color="#f45a0a"/><stop offset="0.750" stop-color="#f88c00"/><stop offset="0.797" stop-color="#b4f00a"/><stop offset="0.859" stop-color="#50d25a"/><stop offset="0.906" stop-color="#0a50f0"/><stop offset="1.000" stop-color="#0a1ee6"/></linearGradient>
<rect x="856" y="382" width="3" height="32" fill="url(#b5)"/>
<linearGradient id="b6" x1="0" y1="385.4" x2="0" y2="411.7" gradientUnits="userSpaceOnUse"><stop offset="0.000" stop-color="#0a1ee6"/><stop offset="0.194" stop-color="#0a1ee6"/><stop offset="0.221" stop-color="#00b48c"/><stop offset="0.308" stop-color="#50d25a"/><stop offset="0.335" stop-color="#b4f00a"/><stop offset="0.422" stop-color="#b4f00a"/><stop offset="0.452" stop-color="#f5aa00"/><stop offset="0.555" stop-color="#f88c00"/><stop offset="0.669" stop-color="#f88c00"/><stop offset="0.764" stop-color="#f5aa00"/><stop offset="0.783" stop-color="#b4f00a"/><stop offset="0.878" stop-color="#b4f00a"/><stop offset="0.897" stop-color="#0a50f0"/><stop offset="1.000" stop-color="#0a1ee6"/></linearGradient>
<rect x="859" y="385.4" width="11" height="26.3" fill="url(#b6)"/>
<linearGradient id="b7" x1="0" y1="380.8" x2="0" y2="415.8" gradientUnits="userSpaceOnUse"><stop offset="0.000" stop-color="#0a1ee6"/><stop offset="0.103" stop-color="#0a1ee6"/><stop offset="0.120" stop-color="#50d25a"/><stop offset="0.277" stop-color="#50d25a"/><stop offset="0.291" stop-color="#f0dc00"/><stop offset="0.377" stop-color="#f0dc00"/><stop offset="0.394" stop-color="#f88c00"/><stop offset="0.469" stop-color="#f88c00"/><stop offset="0.486" stop-color="#eb3c28"/><stop offset="0.686" stop-color="#eb3c28"/><stop offset="0.697" stop-color="#f88c00"/><stop offset="0.734" stop-color="#f88c00"/><stop offset="0.749" stop-color="#b4f00a"/><stop offset="0.806" stop-color="#b4f00a"/><stop offset="0.820" stop-color="#0a50f0"/><stop offset="1.000" stop-color="#0a1ee6"/></linearGradient>
<rect x="870" y="380.8" width="4" height="35" fill="url(#b7)"/>
<ellipse cx="813.5" cy="400.3" rx="2.6" ry="5" fill="#0a32f0"/>
<rect x="814" y="396" width="1" height="9" fill="#0a78f0"/>
<g shape-rendering="crispEdges">
<rect x="815" y="259.8" width="4" height="157.2" fill="#dc5c64"/>
<rect x="817" y="300" width="2" height="110" fill="#ee5a28"/>
<rect x="817" y="300" width="1" height="117" fill="#f0c814"/>
<rect x="817" y="392" width="1" height="14" fill="#50c85a"/>
<rect x="815" y="406" width="2" height="11" fill="#f0aa14"/>
<rect x="838" y="279" width="2" height="3" fill="#1220e4"/>
<rect x="849" y="268" width="2" height="3" fill="#1220e4"/>
<rect x="851" y="283" width="1" height="3" fill="#1414dc"/>
</g>
<rect x="95.5" y="420.5" width="985" height="89" fill="#fff" stroke="#333" stroke-width="1" shape-rendering="crispEdges"/>
<clipPath id="c3"><rect x="96" y="421" width="984.5" height="88"/></clipPath>
<g clip-path="url(#c3)">
<polyline points="213.8,509.2 213.8,491.0" fill="none" stroke="#00f000" stroke-width="1.25" stroke-linejoin="round"/>
<polyline points="316.5,509.2 316.5,490.0 319.6,482.1 319.6,509.2" fill="none" stroke="#00f000" stroke-width="1.25" stroke-linejoin="round"/>
<polyline points="391.7,509.2 391.7,476.5" fill="none" stroke="#00f000" stroke-width="1.25" stroke-linejoin="round"/>
<polyline points="490.2,509.2 490.2,476.5" fill="none" stroke="#00f000" stroke-width="1.25" stroke-linejoin="round"/>
<polyline points="531.5,509.2 531.5,481.7" fill="none" stroke="#00f000" stroke-width="1.25" stroke-linejoin="round"/>
<polyline points="555.4,509.2 555.4,491.0" fill="none" stroke="#00f000" stroke-width="1.25" stroke-linejoin="round"/>
<polyline points="582.3,509.2 582.3,487.9" fill="none" stroke="#00f000" stroke-width="1.25" stroke-linejoin="round"/>
<polyline points="582.1,509.2 582.1,488.3" fill="none" stroke="#00f000" stroke-width="1.25" stroke-linejoin="round"/>
<polyline points="623.1,509.2 623.1,489.4 627.5,496.2 627.5,509.2" fill="none" stroke="#00f000" stroke-width="1.25" stroke-linejoin="round"/>
<polyline points="671.2,509.2 671.2,473.3 675.4,482.7 679.0,483.8 681.5,487.9 681.5,509.2" fill="none" stroke="#00f000" stroke-width="1.25" stroke-linejoin="round"/>
<polyline points="688.3,509.2 688.3,471.2 695.2,471.2 695.2,509.2" fill="none" stroke="#00f000" stroke-width="1.25" stroke-linejoin="round"/>
<polyline points="719.2,509.2 719.2,476.5 726.9,473.3 729.0,476.5 733.8,460.4 736.7,475.4 740.4,466.0 746.0,467.1 750.4,496.2 753.3,487.5 757.5,489.4 757.5,509.2" fill="none" stroke="#00f000" stroke-width="1.25" stroke-linejoin="round"/>
<polyline points="767.5,509.2 767.5,479.2" fill="none" stroke="#00f000" stroke-width="1.25" stroke-linejoin="round"/>
<polyline points="787.3,509.2 787.3,462.5" fill="none" stroke="#00f000" stroke-width="1.25" stroke-linejoin="round"/>
<polyline points="798.3,509.2 798.3,489.0" fill="none" stroke="#00f000" stroke-width="1.25" stroke-linejoin="round"/>
<polyline points="808.5,509.2 808.5,484.8 811.2,492.1 811.2,509.2" fill="none" stroke="#00f000" stroke-width="1.25" stroke-linejoin="round"/>
<polyline points="818.1,509.2 818.1,473.3 822.7,466.0 825.4,466.0 828.3,495.2 828.3,496.3 832.6,470.3 839.5,460.5 845.6,484.3 849.5,466.6 852.5,486.5 856.9,466.6 859.7,474.6 863.6,460.5 872.7,468.1 876.4,452.5 880.3,460.9 883.5,460.5 886.8,480.0 890.7,465.5 894.3,466.6 904.5,475.2 914.9,463.8 917.5,467.4 921.4,466.4 924.2,463.3 927.9,470.9 932.7,471.8 934.9,462.2 938.3,481.5 941.6,459.4 944.8,464.8 948.5,484.3 955.7,457.3 965.4,486.5 968.7,475.2 976.0,468.1 979.5,455.1 983.2,472.4 986.4,468.1 989.7,474.6 989.7,508.6" fill="none" stroke="#00f000" stroke-width="1.25" stroke-linejoin="round"/>
<polyline points="996.2,508.6 996.2,471.3 999.4,480.0 999.4,508.6" fill="none" stroke="#00f000" stroke-width="1.25" stroke-linejoin="round"/>
<polyline points="1006.4,508.6 1006.4,486.5 1014.6,470.3 1017.4,470.9 1021.1,479.6 1027.6,474.6 1027.6,508.6" fill="none" stroke="#00f000" stroke-width="1.25" stroke-linejoin="round"/>
<polyline points="1037.4,508.6 1037.4,486.1" fill="none" stroke="#00f000" stroke-width="1.25" stroke-linejoin="round"/>
<polyline points="1043.9,508.6 1044.3,477.8 1050.4,454.0 1054.7,486.5 1061.2,468.1 1061.2,508.6" fill="none" stroke="#00f000" stroke-width="1.25" stroke-linejoin="round"/>
<polyline points="1068.3,508.6 1068.3,490.8" fill="none" stroke="#00f000" stroke-width="1.25" stroke-linejoin="round"/>
<polyline points="1074.6,508.6 1074.6,496.3" fill="none" stroke="#00f000" stroke-width="1.25" stroke-linejoin="round"/>
<polyline points="104.2,476.5 107.7,475.4 110.8,474.6 114.6,475.6 118.3,474.6 121.5,465.2 124.8,472.9 128.3,478.3 138.5,471.2 142.1,475.8 145.4,483.1 148.3,472.5 152.3,494.4 159.6,481.7 162.5,486.2 166.5,476.5 169.4,482.3 172.7,476.5 179.6,498.3 186.5,490.4 189.4,472.1 189.4,509.2" fill="none" stroke="#0000ff" stroke-width="1.25" stroke-linejoin="round"/>
<polyline points="196.5,509.2 196.5,478.1 200.4,504.6 203.5,471.2 207.3,509.2 210.2,472.3 213.8,486.9 217.7,492.5 220.6,488.3 224.4,492.3 227.5,492.3 234.4,474.6 241.5,484.4 244.6,481.5 244.6,509.2" fill="none" stroke="#0000ff" stroke-width="1.25" stroke-linejoin="round"/>
<polyline points="251.5,509.2 251.5,496.2" fill="none" stroke="#0000ff" stroke-width="1.25" stroke-linejoin="round"/>
<polyline points="258.3,509.2 258.3,476.5 261.5,479.2 265.4,470.4 268.5,484.2 271.2,483.3 275.4,502.3 278.5,490.4 282.3,489.0 285.4,478.5 289.6,481.2 292.1,472.5 299.4,480.6 302.5,486.5 308.8,487.5 312.5,488.3 316.7,478.1 319.6,479.2 323.3,509.2 326.5,482.3 330.6,493.3 333.3,478.5 336.5,485.8 336.9,509.2" fill="none" stroke="#0000ff" stroke-width="1.25" stroke-linejoin="round"/>
<polyline points="350.2,509.2 350.2,475.4 353.3,493.8 357.3,477.1 360.4,482.7 364.2,503.5 374.6,475.4 377.7,486.5 381.2,478.5 385.0,476.9 388.8,474.4 391.7,479.6 394.8,487.5 402.1,491.7 405.4,492.5 412.5,476.5 415.6,487.3 422.5,476.5 425.6,487.5 429.8,479.0 432.9,476.5 436.0,476.5 439.8,479.2 442.7,475.4 446.9,480.6 450.2,481.2 453.3,482.3 459.6,500.4 463.5,480.6 466.7,473.3 473.5,487.3 476.7,471.2 480.2,471.9 483.5,483.1 488.1,478.5 494.4,479.2 497.5,476.5 504.2,494.2 507.3,494.2 507.3,509.2" fill="none" stroke="#0000ff" stroke-width="1.25" stroke-linejoin="round"/>
<polyline points="343.3,509.2 343.3,491.0" fill="none" stroke="#0000ff" stroke-width="1.25" stroke-linejoin="round"/>
<polyline points="514.2,509.2 514.2,490.6 517.7,489.0 521.0,482.7 524.6,473.3 528.8,479.6 532.5,489.0 535.4,493.5 538.8,482.1 541.7,477.1 545.4,495.2 545.8,509.2" fill="none" stroke="#0000ff" stroke-width="1.25" stroke-linejoin="round"/>
<polyline points="555.2,509.2 555.2,487.5 558.3,489.0 562.5,472.3 565.2,490.4 569.4,487.5 572.5,495.2 576.7,476.5 579.8,484.4 585.0,476.0 586.2,473.3 586.2,509.2" fill="none" stroke="#0000ff" stroke-width="1.25" stroke-linejoin="round"/>
<polyline points="593.1,509.2 593.1,476.5 596.2,475.4 599.8,498.3 599.8,509.2" fill="none" stroke="#0000ff" stroke-width="1.25" stroke-linejoin="round"/>
<polyline points="606.5,509.2 606.5,484.8 610.2,487.5 613.8,469.6 627.9,486.5 630.4,476.5 630.4,509.2" fill="none" stroke="#0000ff" stroke-width="1.25" stroke-linejoin="round"/>
<polyline points="637.3,509.2 637.3,500.4 640.4,486.9 647.3,479.2 651.5,484.4 651.5,509.2" fill="none" stroke="#0000ff" stroke-width="1.25" stroke-linejoin="round"/>
<polyline points="660.2,509.2 661.2,499.4 664.8,491.5 668.5,499.4 671.7,497.9 675.4,502.1 681.5,483.3 685.2,498.3 688.8,479.6 692.5,492.5 696.7,487.9 699.8,492.1 704.0,481.7 709.6,474.4 712.7,479.6 716.5,493.1 719.2,493.1 722.7,479.2 725.8,485.8 729.6,495.2 734.2,481.2 737.3,482.7 740.4,480.6 743.5,488.3 750.8,474.4 754.0,481.7 760.2,483.3 763.3,481.7 766.9,480.2 770.6,494.2 773.8,491.0 777.5,481.7 781.7,487.5 785.2,486.5 791.5,477.1 794.6,495.2 798.3,485.8 800.8,487.5 805.0,478.5 811.2,481.7 815.4,486.5 821.7,484.4 825.8,476.5 825.0,476.8 832.6,476.8 835.2,487.2 845.6,474.6 848.8,474.6 852.1,470.9 856.4,483.3 862.9,474.6 866.2,486.1 869.9,468.7 874.2,477.4 877.0,477.4 880.7,480.7 888.9,468.7 896.5,473.5 900.4,488.7 905.2,477.8 918.2,469.2 921.9,481.5 924.7,471.8 927.9,472.4 935.5,472.4 938.8,469.6 941.4,477.8 945.9,469.2 950.7,478.9 956.1,469.6 959.3,470.3 968.0,484.3 972.3,483.3 976.0,471.8 979.5,467.4 986.4,481.1 989.7,484.3 992.9,477.8 997.3,496.3 1006.4,474.6 1010.3,483.3 1015.7,491.3 1020.7,506.0 1029.8,478.9 1033.5,506.4 1036.9,506.7 1040.0,478.9 1043.9,478.9 1047.1,475.7 1054.0,488.7 1057.9,499.5 1061.6,498.4 1064.4,495.2 1069.4,478.5 1071.6,477.8 1074.6,493.4 1078.5,479.4" fill="none" stroke="#0000ff" stroke-width="1.25" stroke-linejoin="round"/>
<polyline points="810.2,509.2 813.3,477.5 815.0,421.2 819.2,421.2 819.6,430.6 830.0,430.2 825.0,430.6 830.4,430.2 832.2,428.4 834.3,437.3 836.9,426.9 842.3,421.9 845.6,422.6 851.0,421.1 854.3,426.9 857.5,437.8 860.3,446.4 864.0,444.9 866.2,441.0 868.3,441.4 871.2,429.7 874.4,445.3 952.8,445.3 955.0,444.3 957.2,445.3 959.3,444.3 961.5,445.3 963.7,444.7 998.3,444.7 1000.5,446.9 1002.7,444.7 1022.2,444.7 1024.3,443.6 1054.7,443.6 1057.9,442.5 1080.3,442.5" fill="none" stroke="#ff0000" stroke-width="1.25" stroke-linejoin="round"/>
<polyline points="658.8,509.2 659.4,505.6 660.0,509.2" fill="none" stroke="#ff0000" stroke-width="1.25" stroke-linejoin="round"/>
<polyline points="676.9,509.2 678.3,505.0 680.0,507.7 681.0,509.2" fill="none" stroke="#ff0000" stroke-width="1.25" stroke-linejoin="round"/>
<polyline points="683.8,509.2 684.8,505.8 685.8,508.3 686.9,505.4 687.5,509.2" fill="none" stroke="#ff0000" stroke-width="1.25" stroke-linejoin="round"/>
<polyline points="724.8,509.2 725.4,507.1 726.0,509.2" fill="none" stroke="#ff0000" stroke-width="1.25" stroke-linejoin="round"/>
<polyline points="744.2,509.2 745.4,506.0 746.7,509.2" fill="none" stroke="#ff0000" stroke-width="1.25" stroke-linejoin="round"/>
<polyline points="753.5,509.2 754.4,507.7 755.0,509.2" fill="none" stroke="#ff0000" stroke-width="1.25" stroke-linejoin="round"/>
<polyline points="798.8,509.2 800.2,503.5 801.9,508.8 804.0,507.9 806.0,509.2" fill="none" stroke="#ff0000" stroke-width="1.25" stroke-linejoin="round"/>
</g>
<g shape-rendering="crispEdges">
<rect x="95" y="513" width="986" height="178.6" fill="#000"/>
<rect x="98" y="551.7" width="2" height="16.6" fill="#1121e4"/>
<rect x="98" y="568.3" width="2" height="12" fill="#0f2ceb"/>
<rect x="100" y="523" width="1" height="28.7" fill="#1313d7"/>
<rect x="105" y="568.3" width="1" height="12" fill="#0c3df5"/>
<rect x="107" y="530" width="2" height="21.7" fill="#1319df"/>
<rect x="107" y="534" width="2" height="13.7" fill="#0d38f2"/>
<rect x="107" y="551.7" width="2" height="16.6" fill="#1416dd"/>
<rect x="109" y="530" width="1" height="21.7" fill="#1220e3"/>
<rect x="110" y="530" width="1" height="21.7" fill="#1313d6"/>
<rect x="110" y="551.7" width="1" height="16.6" fill="#1317de"/>
<rect x="111" y="530" width="2" height="21.7" fill="#1415dd"/>
<rect x="114" y="530" width="1" height="21.7" fill="#1212cd"/>
<rect x="115" y="568.3" width="1" height="12" fill="#1123e5"/>
<rect x="116" y="551.7" width="1" height="16.6" fill="#131ae0"/>
<rect x="118" y="530" width="1" height="21.7" fill="#1414dc"/>
<rect x="119" y="556.7" width="1" height="11.6" fill="#1220e3"/>
<rect x="119" y="568.3" width="1" height="12" fill="#131be0"/>
<rect x="120" y="530" width="1" height="21.7" fill="#1026e7"/>
<rect x="120" y="551.7" width="1" height="16.6" fill="#1026e7"/>
<rect x="120" y="568.3" width="1" height="9" fill="#0e32ee"/>
<rect x="123" y="551.7" width="1" height="11.6" fill="#1313d4"/>
<rect x="124" y="523" width="1" height="7" fill="#1111c5"/>
<rect x="124" y="551.7" width="1" height="16.6" fill="#1313d6"/>
<rect x="126" y="530" width="2" height="21.7" fill="#1414dc"/>
<rect x="126" y="534" width="2" height="13.7" fill="#0e34ef"/>
<rect x="128" y="530" width="1" height="21.7" fill="#1317de"/>
<rect x="128" y="551.7" width="1" height="16.6" fill="#1414dc"/>
<rect x="129" y="551.7" width="1" height="16.6" fill="#1029e9"/>
<rect x="129" y="568.3" width="1" height="12" fill="#0d35f0"/>
<rect x="130" y="554.7" width="1" height="13.6" fill="#1028e8"/>
<rect x="130" y="568.3" width="1" height="12" fill="#121fe3"/>
<rect x="132" y="568.3" width="1" height="12" fill="#0e33ef"/>
<rect x="139" y="551.7" width="1" height="16.6" fill="#131adf"/>
<rect x="139" y="568.3" width="1" height="9" fill="#0f2eec"/>
<rect x="140" y="530" width="1" height="21.7" fill="#1212d1"/>
<rect x="141" y="530" width="2" height="21.7" fill="#1029e9"/>
<rect x="141" y="534" width="2" height="13.7" fill="#0a49f9"/>
<rect x="141" y="568.3" width="2" height="12" fill="#1027e7"/>
<rect x="146" y="530" width="1" height="21.7" fill="#1313d5"/>
<rect x="147" y="523" width="1" height="7" fill="#1318de"/>
<rect x="147" y="551.7" width="1" height="16.6" fill="#1416dd"/>
<rect x="147" y="568.3" width="1" height="9" fill="#0f2bea"/>
<rect x="149" y="568.3" width="2" height="12" fill="#0e31ed"/>
<rect x="158" y="530" width="1" height="21.7" fill="#1313d5"/>
<rect x="158" y="551.7" width="1" height="16.6" fill="#1415dc"/>
<rect x="160" y="556.7" width="1" height="11.6" fill="#102ae9"/>
<rect x="160" y="568.3" width="1" height="12" fill="#1028e8"/>
<rect x="162" y="523" width="1" height="28.7" fill="#1010c3"/>
<rect x="163" y="556.7" width="1" height="8.6" fill="#0f2cea"/>
<rect x="166" y="523" width="1" height="7" fill="#1212cf"/>
<rect x="170" y="568.3" width="1" height="12" fill="#0f2fec"/>
<rect x="171" y="530" width="1" height="21.7" fill="#121ce1"/>
<rect x="172" y="530" width="1" height="21.7" fill="#1313d4"/>
<rect x="174" y="568.3" width="1" height="12" fill="#102ae9"/>
<rect x="178" y="551.7" width="1" height="16.6" fill="#0f2bea"/>
<rect x="178" y="568.3" width="1" height="12" fill="#131be0"/>
<rect x="179" y="554.7" width="1" height="13.6" fill="#1416dd"/>
<rect x="180" y="559.7" width="1" height="8.6" fill="#131be0"/>
<rect x="182" y="551.7" width="2" height="16.6" fill="#131be0"/>
<rect x="184" y="551.7" width="1" height="16.6" fill="#0f2eec"/>
<rect x="184" y="568.3" width="1" height="12" fill="#1123e5"/>
<rect x="185" y="559.7" width="2" height="8.6" fill="#1124e6"/>
<rect x="187" y="556.7" width="1" height="11.6" fill="#0e31ee"/>
<rect x="187" y="568.3" width="1" height="12" fill="#0d37f1"/>
<rect x="188" y="554.7" width="2" height="13.6" fill="#1318de"/>
<rect x="188" y="568.3" width="2" height="12" fill="#0e30ed"/>
<rect x="193" y="530" width="1" height="21.7" fill="#1111c6"/>
<rect x="193" y="551.7" width="1" height="16.6" fill="#1416dd"/>
<rect x="193" y="568.3" width="1" height="12" fill="#0c3bf3"/>
<rect x="194" y="559.7" width="1" height="8.6" fill="#121fe3"/>
<rect x="195" y="530" width="1" height="21.7" fill="#1416dd"/>
<rect x="195" y="551.7" width="1" height="13.6" fill="#1416dd"/>
<rect x="197" y="551.7" width="1" height="16.6" fill="#0f2deb"/>
<rect x="201" y="530" width="1" height="21.7" fill="#1319df"/>
<rect x="201" y="551.7" width="1" height="16.6" fill="#0e32ee"/>
<rect x="201" y="568.3" width="1" height="12" fill="#0f2eec"/>
<rect x="203" y="530" width="1" height="21.7" fill="#1212ce"/>
<rect x="203" y="551.7" width="1" height="16.6" fill="#1313d8"/>
<rect x="203" y="568.3" width="1" height="12" fill="#0d37f1"/>
<rect x="205" y="568.3" width="1" height="12" fill="#121fe2"/>
<rect x="208" y="530" width="2" height="21.7" fill="#1313d5"/>
<rect x="208" y="551.7" width="2" height="16.6" fill="#1313d7"/>
<rect x="208" y="568.3" width="2" height="7" fill="#1124e6"/>
<rect x="210" y="530" width="1" height="21.7" fill="#1111c4"/>
<rect x="210" y="551.7" width="1" height="16.6" fill="#0f2ceb"/>
<rect x="222" y="530" width="1" height="21.7" fill="#1416dd"/>
<rect x="235" y="551.7" width="1" height="16.6" fill="#0f2cea"/>
<rect x="235" y="568.3" width="1" height="12" fill="#0f2ceb"/>
<rect x="237" y="523" width="1" height="28.7" fill="#1313d7"/>
<rect x="238" y="568.3" width="2" height="9" fill="#0f2bea"/>
<rect x="244" y="551.7" width="1" height="16.6" fill="#1313d6"/>
<rect x="245" y="568.3" width="1" height="7" fill="#0e32ee"/>
<rect x="246" y="523" width="1" height="28.7" fill="#1414da"/>
<rect x="250" y="530" width="1" height="21.7" fill="#1111ca"/>
<rect x="254" y="551.7" width="1" height="16.6" fill="#1313d8"/>
<rect x="254" y="568.3" width="1" height="12" fill="#1121e4"/>
<rect x="256" y="551.7" width="1" height="16.6" fill="#131be0"/>
<rect x="258" y="551.7" width="1" height="16.6" fill="#1121e4"/>
<rect x="259" y="551.7" width="1" height="16.6" fill="#121ce1"/>
<rect x="262" y="551.7" width="1" height="16.6" fill="#1028e8"/>
<rect x="268" y="523" width="2" height="7" fill="#121ce1"/>
<rect x="268" y="551.7" width="2" height="11.6" fill="#0f2deb"/>
<rect x="270" y="556.7" width="1" height="11.6" fill="#1027e7"/>
<rect x="270" y="568.3" width="1" height="12" fill="#0d38f1"/>
<rect x="271" y="551.7" width="1" height="16.6" fill="#1318de"/>
<rect x="271" y="568.3" width="1" height="7" fill="#0f2bea"/>
<rect x="272" y="530" width="1" height="21.7" fill="#121de2"/>
<rect x="272" y="551.7" width="1" height="16.6" fill="#1313d3"/>
<rect x="272" y="568.3" width="1" height="12" fill="#0c3af3"/>
<rect x="273" y="530" width="1" height="21.7" fill="#1111c5"/>
<rect x="273" y="551.7" width="1" height="16.6" fill="#1121e4"/>
<rect x="274" y="551.7" width="1" height="16.6" fill="#1123e5"/>
<rect x="278" y="530" width="1" height="21.7" fill="#1415dd"/>
<rect x="278" y="551.7" width="1" height="16.6" fill="#1027e7"/>
<rect x="282" y="551.7" width="1" height="16.6" fill="#1123e5"/>
<rect x="288" y="530" width="2" height="21.7" fill="#1125e6"/>
<rect x="288" y="551.7" width="2" height="16.6" fill="#1123e5"/>
<rect x="290" y="530" width="1" height="21.7" fill="#1414dc"/>
<rect x="292" y="568.3" width="1" height="12" fill="#121fe3"/>
<rect x="295" y="559.7" width="2" height="8.6" fill="#1123e5"/>
<rect x="295" y="568.3" width="2" height="12" fill="#1026e7"/>
<rect x="297" y="559.7" width="1" height="5.6" fill="#1125e6"/>
<rect x="300" y="530" width="1" height="21.7" fill="#102ae9"/>
<rect x="300" y="551.7" width="1" height="16.6" fill="#1125e6"/>
<rect x="300" y="568.3" width="1" height="7" fill="#121de1"/>
<rect x="301" y="551.7" width="1" height="16.6" fill="#131ae0"/>
<rect x="301" y="568.3" width="1" height="12" fill="#1122e5"/>
<rect x="305" y="530" width="1" height="21.7" fill="#1212ce"/>
<rect x="306" y="523" width="1" height="28.7" fill="#1220e3"/>
<rect x="307" y="556.7" width="1" height="11.6" fill="#1318df"/>
<rect x="307" y="568.3" width="1" height="12" fill="#0d37f1"/>
<rect x="312" y="530" width="1" height="21.7" fill="#121ce1"/>
<rect x="313" y="568.3" width="1" height="7" fill="#0d35f0"/>
<rect x="318" y="559.7" width="2" height="8.6" fill="#1212d1"/>
<rect x="326" y="551.7" width="1" height="16.6" fill="#102ae9"/>
<rect x="327" y="568.3" width="1" height="9" fill="#0e32ee"/>
<rect x="328" y="513" width="1" height="3" fill="#0f0fb9"/>
<rect x="328" y="551.7" width="1" height="11.6" fill="#0f2fec"/>
<rect x="331" y="530" width="2" height="21.7" fill="#1318df"/>
<rect x="331" y="534" width="2" height="13.7" fill="#0d38f1"/>
<rect x="331" y="551.7" width="2" height="16.6" fill="#1121e4"/>
<rect x="331" y="568.3" width="2" height="7" fill="#121ce1"/>
<rect x="334" y="523" width="2" height="28.7" fill="#121ce1"/>
<rect x="336" y="568.3" width="1" height="12" fill="#121de1"/>
<rect x="340" y="523" width="2" height="28.7" fill="#1111c9"/>
<rect x="340" y="551.7" width="2" height="16.6" fill="#1317de"/>
<rect x="347" y="551.7" width="1" height="16.6" fill="#1313d5"/>
<rect x="350" y="530" width="1" height="21.7" fill="#1111c9"/>
<rect x="352" y="530" width="1" height="21.7" fill="#1123e5"/>
<rect x="357" y="551.7" width="1" height="16.6" fill="#0f2cea"/>
<rect x="364" y="554.7" width="1" height="13.6" fill="#1028e8"/>
<rect x="364" y="568.3" width="1" height="12" fill="#0c3df5"/>
<rect x="365" y="551.7" width="1" height="13.6" fill="#1220e3"/>
<rect x="370" y="551.7" width="2" height="16.6" fill="#0e30ed"/>
<rect x="370" y="568.3" width="2" height="7" fill="#1220e3"/>
<rect x="372" y="556.7" width="1" height="11.6" fill="#1313d3"/>
<rect x="372" y="568.3" width="1" height="9" fill="#102ae9"/>
<rect x="374" y="551.7" width="1" height="16.6" fill="#1027e7"/>
<rect x="374" y="568.3" width="1" height="12" fill="#0c3bf3"/>
<rect x="375" y="530" width="1" height="21.7" fill="#1029e9"/>
<rect x="375" y="551.7" width="1" height="16.6" fill="#1317de"/>
<rect x="380" y="523" width="1" height="28.7" fill="#121de1"/>
<rect x="382" y="556.7" width="1" height="8.6" fill="#0e30ed"/>
<rect x="383" y="551.7" width="2" height="16.6" fill="#1027e7"/>
<rect x="383" y="568.3" width="2" height="12" fill="#1220e3"/>
<rect x="389" y="530" width="1" height="21.7" fill="#1212cb"/>
<rect x="389" y="551.7" width="1" height="16.6" fill="#1220e3"/>
<rect x="389" y="568.3" width="1" height="12" fill="#0c3cf4"/>
<rect x="390" y="568.3" width="1" height="12" fill="#1220e3"/>
<rect x="391" y="556.7" width="1" height="11.6" fill="#1220e3"/>
<rect x="397" y="551.7" width="1" height="16.6" fill="#0e31ed"/>
<rect x="397" y="568.3" width="1" height="7" fill="#0f2ceb"/>
<rect x="408" y="530" width="1" height="21.7" fill="#1111c6"/>
<rect x="412" y="551.7" width="1" height="16.6" fill="#1415dd"/>
<rect x="412" y="568.3" width="1" height="9" fill="#0d35f0"/>
<rect x="413" y="559.7" width="2" height="3.6" fill="#1027e7"/>
<rect x="415" y="551.7" width="1" height="16.6" fill="#1026e7"/>
<rect x="423" y="568.3" width="2" height="9" fill="#0c3ef5"/>
<rect x="425" y="551.7" width="2" height="16.6" fill="#1123e5"/>
<rect x="427" y="551.7" width="2" height="16.6" fill="#1414db"/>
<rect x="427" y="568.3" width="2" height="12" fill="#0f2fec"/>
<rect x="438" y="530" width="2" height="21.7" fill="#1317de"/>
<rect x="438" y="534" width="2" height="13.7" fill="#0d37f1"/>
<rect x="440" y="530" width="1" height="21.7" fill="#1123e5"/>
<rect x="440" y="551.7" width="1" height="11.6" fill="#121ce1"/>
<rect x="445" y="530" width="1" height="21.7" fill="#1028e8"/>
<rect x="445" y="568.3" width="1" height="12" fill="#131be0"/>
<rect x="446" y="551.7" width="1" height="16.6" fill="#1313d8"/>
<rect x="446" y="568.3" width="1" height="12" fill="#1122e5"/>
<rect x="452" y="530" width="1" height="21.7" fill="#1317de"/>
<rect x="452" y="551.7" width="1" height="11.6" fill="#1414d9"/>
<rect x="454" y="554.7" width="1" height="13.6" fill="#0e32ee"/>
<rect x="454" y="568.3" width="1" height="12" fill="#1026e7"/>
<rect x="459" y="568.3" width="2" height="12" fill="#102ae9"/>
<rect x="461" y="568.3" width="2" height="12" fill="#1029e9"/>
<rect x="473" y="530" width="1" height="21.7" fill="#1028e8"/>
<rect x="474" y="530" width="1" height="21.7" fill="#1121e4"/>
<rect x="474" y="551.7" width="1" height="13.6" fill="#1313d8"/>
<rect x="476" y="523" width="1" height="28.7" fill="#1313d7"/>
<rect x="477" y="530" width="1" height="21.7" fill="#1010c3"/>
<rect x="488" y="556.7" width="1" height="11.6" fill="#131adf"/>
<rect x="488" y="568.3" width="1" height="7" fill="#121de1"/>
<rect x="489" y="559.7" width="1" height="8.6" fill="#1317de"/>
<rect x="489" y="568.3" width="1" height="9" fill="#121ee2"/>
<rect x="492" y="568.3" width="1" height="12" fill="#0f2deb"/>
<rect x="494" y="556.7" width="1" height="11.6" fill="#1125e6"/>
<rect x="494" y="568.3" width="1" height="12" fill="#0d38f2"/>
<rect x="495" y="568.3" width="2" height="7" fill="#0e33ef"/>
<rect x="498" y="559.7" width="1" height="8.6" fill="#102ae9"/>
<rect x="498" y="568.3" width="1" height="12" fill="#121ee2"/>
<rect x="500" y="530" width="2" height="21.7" fill="#1318de"/>
<rect x="500" y="534" width="2" height="13.7" fill="#0d37f1"/>
<rect x="511" y="523" width="2" height="7" fill="#1111c8"/>
<rect x="511" y="527" width="2" height="2" fill="#1029e8"/>
<rect x="515" y="554.7" width="1" height="13.6" fill="#1416dd"/>
<rect x="515" y="568.3" width="1" height="12" fill="#0d38f2"/>
<rect x="520" y="559.7" width="2" height="8.6" fill="#1313d7"/>
<rect x="523" y="551.7" width="2" height="16.6" fill="#1028e8"/>
<rect x="525" y="530" width="1" height="21.7" fill="#121ee2"/>
<rect x="525" y="551.7" width="1" height="11.6" fill="#0f2bea"/>
<rect x="526" y="551.7" width="1" height="16.6" fill="#1313d7"/>
<rect x="532" y="551.7" width="1" height="16.6" fill="#1313d6"/>
<rect x="533" y="554.7" width="2" height="10.6" fill="#1313d3"/>
<rect x="539" y="559.7" width="2" height="8.6" fill="#0f2eec"/>
<rect x="539" y="568.3" width="2" height="7" fill="#0f2fec"/>
<rect x="542" y="554.7" width="1" height="13.6" fill="#1414dc"/>
<rect x="543" y="556.7" width="1" height="11.6" fill="#0f2deb"/>
<rect x="543" y="568.3" width="1" height="7" fill="#0d35f0"/>
<rect x="544" y="559.7" width="1" height="8.6" fill="#1121e4"/>
<rect x="545" y="559.7" width="1" height="8.6" fill="#1028e8"/>
<rect x="545" y="568.3" width="1" height="9" fill="#0c3af3"/>
<rect x="546" y="551.7" width="1" height="16.6" fill="#1028e8"/>
<rect x="546" y="568.3" width="1" height="12" fill="#0c3bf3"/>
<rect x="549" y="559.7" width="1" height="8.6" fill="#1313d2"/>
<rect x="549" y="568.3" width="1" height="12" fill="#121de2"/>
<rect x="553" y="568.3" width="1" height="12" fill="#0d36f0"/>
<rect x="558" y="530" width="2" height="21.7" fill="#1317de"/>
<rect x="562" y="530" width="2" height="21.7" fill="#1318de"/>
<rect x="565" y="551.7" width="1" height="11.6" fill="#1122e5"/>
<rect x="566" y="530" width="1" height="21.7" fill="#121de1"/>
<rect x="567" y="559.7" width="1" height="8.6" fill="#0e31ed"/>
<rect x="567" y="568.3" width="1" height="12" fill="#0d35f0"/>
<rect x="569" y="556.7" width="1" height="6.6" fill="#1319df"/>
<rect x="574" y="554.7" width="1" height="13.6" fill="#0e31ee"/>
<rect x="577" y="523" width="1" height="28.7" fill="#1029e9"/>
<rect x="578" y="551.7" width="1" height="16.6" fill="#121fe3"/>
<rect x="581" y="530" width="2" height="21.7" fill="#121ce1"/>
<rect x="581" y="534" width="2" height="13.7" fill="#0c3bf4"/>
<rect x="583" y="551.7" width="1" height="16.6" fill="#1313d4"/>
<rect x="584" y="530" width="1" height="21.7" fill="#1026e7"/>
<rect x="584" y="551.7" width="1" height="16.6" fill="#1415dd"/>
<rect x="584" y="568.3" width="1" height="12" fill="#0d39f2"/>
<rect x="585" y="551.7" width="1" height="16.6" fill="#1318de"/>
<rect x="585" y="568.3" width="1" height="9" fill="#0e33ef"/>
<rect x="588" y="523" width="1" height="7" fill="#1317de"/>
<rect x="589" y="523" width="1" height="28.7" fill="#121ee2"/>
<rect x="589" y="551.7" width="1" height="16.6" fill="#1029e9"/>
<rect x="589" y="568.3" width="1" height="12" fill="#121ee2"/>
<rect x="590" y="523" width="1" height="7" fill="#1318de"/>
<rect x="593" y="568.3" width="2" height="12" fill="#0c3bf3"/>
<rect x="599" y="556.7" width="1" height="11.6" fill="#121de2"/>
<rect x="605" y="523" width="1" height="28.7" fill="#1125e6"/>
<rect x="605" y="568.3" width="1" height="12" fill="#0f2ceb"/>
<rect x="606" y="554.7" width="2" height="13.6" fill="#1122e4"/>
<rect x="610" y="530" width="1" height="21.7" fill="#1010c1"/>
<rect x="610" y="551.7" width="1" height="11.6" fill="#1125e6"/>
<rect x="614" y="513" width="2" height="9" fill="#0f0fb9"/>
<rect x="616" y="515" width="1" height="5" fill="#0f0fb9"/>
<rect x="617" y="568.3" width="1" height="12" fill="#121ce1"/>
<rect x="618" y="554.7" width="2" height="13.6" fill="#1414da"/>
<rect x="618" y="568.3" width="2" height="12" fill="#121ce1"/>
<rect x="621" y="523" width="1" height="28.7" fill="#1313d5"/>
<rect x="626" y="554.7" width="1" height="13.6" fill="#0e32ee"/>
<rect x="628" y="551.7" width="1" height="16.6" fill="#102ae9"/>
<rect x="628" y="568.3" width="1" height="12" fill="#0e34ef"/>
<rect x="633" y="523" width="1" height="28.7" fill="#1415dc"/>
<rect x="636" y="551.7" width="1" height="13.6" fill="#1318de"/>
<rect x="637" y="554.7" width="2" height="13.6" fill="#1313d6"/>
<rect x="637" y="568.3" width="2" height="9" fill="#1029e9"/>
<rect x="639" y="551.7" width="1" height="16.6" fill="#1317de"/>
<rect x="639" y="568.3" width="1" height="12" fill="#0c3af3"/>
<rect x="640" y="523" width="1" height="7" fill="#1319df"/>
<rect x="641" y="551.7" width="1" height="16.6" fill="#1415dc"/>
<rect x="645" y="551.7" width="1" height="16.6" fill="#1029e9"/>
<rect x="645" y="568.3" width="1" height="9" fill="#1121e4"/>
<rect x="646" y="568.3" width="1" height="12" fill="#0d38f2"/>
<rect x="647" y="530" width="1" height="21.7" fill="#1123e5"/>
<rect x="649" y="523" width="1" height="28.7" fill="#1212cc"/>
<rect x="651" y="530" width="2" height="21.7" fill="#1010c2"/>
<rect x="654" y="551.7" width="1" height="16.6" fill="#121fe3"/>
<rect x="654" y="568.3" width="1" height="12" fill="#1124e6"/>
<rect x="656" y="523" width="2" height="28.7" fill="#1313d5"/>
<rect x="656" y="527" width="2" height="20.7" fill="#0e30ed"/>
<rect x="658" y="551.7" width="1" height="16.6" fill="#1313d5"/>
<rect x="658" y="568.3" width="1" height="12" fill="#1026e7"/>
<rect x="664" y="554.7" width="1" height="13.6" fill="#1027e7"/>
<rect x="665" y="556.7" width="1" height="11.6" fill="#102ae9"/>
<rect x="670" y="523" width="1" height="28.7" fill="#1313d8"/>
<rect x="671" y="530" width="1" height="21.7" fill="#1414db"/>
<rect x="671" y="551.7" width="1" height="11.6" fill="#131be0"/>
<rect x="673" y="530" width="1" height="21.7" fill="#1414d9"/>
<rect x="673" y="551.7" width="1" height="16.6" fill="#1313d3"/>
<rect x="673" y="568.3" width="1" height="9" fill="#1026e7"/>
<rect x="678" y="568.3" width="2" height="9" fill="#1122e5"/>
<rect x="680" y="551.7" width="1" height="16.6" fill="#1414da"/>
<rect x="681" y="554.7" width="1" height="13.6" fill="#0e31ed"/>
<rect x="681" y="568.3" width="1" height="12" fill="#121de1"/>
<rect x="682" y="530" width="1" height="21.7" fill="#1027e7"/>
<rect x="682" y="568.3" width="1" height="12" fill="#0e33ef"/>
<rect x="684" y="530" width="1" height="21.7" fill="#1027e8"/>
<rect x="684" y="551.7" width="1" height="16.6" fill="#1313d4"/>
<rect x="685" y="554.7" width="1" height="13.6" fill="#0e32ee"/>
<rect x="685" y="568.3" width="1" height="12" fill="#1121e4"/>
<rect x="688" y="551.7" width="1" height="16.6" fill="#121ee2"/>
<rect x="688" y="568.3" width="1" height="12" fill="#0c3ef5"/>
<rect x="689" y="530" width="1" height="21.7" fill="#1317de"/>
<rect x="690" y="554.7" width="2" height="13.6" fill="#1313d7"/>
<rect x="690" y="568.3" width="2" height="7" fill="#1124e5"/>
<rect x="697" y="530" width="2" height="21.7" fill="#1029e9"/>
<rect x="697" y="534" width="2" height="13.7" fill="#0a49f9"/>
<rect x="701" y="554.7" width="1" height="13.6" fill="#102ae9"/>
<rect x="706" y="551.7" width="1" height="16.6" fill="#0f2fec"/>
<rect x="707" y="551.7" width="1" height="13.6" fill="#1313d4"/>
<rect x="708" y="523" width="1" height="28.7" fill="#1313d8"/>
<rect x="710" y="523" width="1" height="28.7" fill="#1317de"/>
<rect x="711" y="556.7" width="1" height="11.6" fill="#1415dd"/>
<rect x="712" y="551.7" width="2" height="16.6" fill="#102ae9"/>
<rect x="716" y="530" width="1" height="21.7" fill="#1010c0"/>
<rect x="716" y="568.3" width="1" height="12" fill="#0c3df4"/>
<rect x="717" y="559.7" width="1" height="8.6" fill="#0e31ed"/>
<rect x="721" y="559.7" width="1" height="8.6" fill="#0e31ed"/>
<rect x="721" y="568.3" width="1" height="12" fill="#1123e5"/>
<rect x="722" y="551.7" width="1" height="16.6" fill="#1414db"/>
<rect x="722" y="568.3" width="1" height="12" fill="#0e30ed"/>
<rect x="727" y="551.7" width="2" height="16.6" fill="#1125e6"/>
<rect x="727" y="568.3" width="2" height="12" fill="#121ee2"/>
<rect x="730" y="530" width="1" height="21.7" fill="#1414dc"/>
<rect x="730" y="568.3" width="1" height="12" fill="#0e31ed"/>
<rect x="731" y="568.3" width="1" height="12" fill="#1124e6"/>
<rect x="733" y="530" width="1" height="21.7" fill="#1111c4"/>
<rect x="733" y="568.3" width="1" height="9" fill="#0d37f1"/>
<rect x="740" y="523" width="2" height="28.7" fill="#1111c4"/>
<rect x="742" y="551.7" width="1" height="16.6" fill="#131be0"/>
<rect x="742" y="568.3" width="1" height="12" fill="#121fe2"/>
<rect x="744" y="568.3" width="1" height="9" fill="#0e30ed"/>
<rect x="746" y="551.7" width="1" height="11.6" fill="#131be0"/>
<rect x="750" y="551.7" width="2" height="16.6" fill="#0f2deb"/>
<rect x="753" y="559.7" width="1" height="5.6" fill="#121fe3"/>
<rect x="754" y="551.7" width="1" height="16.6" fill="#0f2eec"/>
<rect x="754" y="568.3" width="1" height="12" fill="#0c3cf4"/>
<rect x="757" y="551.7" width="1" height="16.6" fill="#1313d7"/>
<rect x="757" y="568.3" width="1" height="12" fill="#1027e8"/>
<rect x="761" y="551.7" width="1" height="16.6" fill="#1416dd"/>
<rect x="761" y="568.3" width="1" height="7" fill="#0e33ee"/>
<rect x="763" y="568.3" width="1" height="12" fill="#0c3ef5"/>
<rect x="773" y="530" width="2" height="21.7" fill="#1313d7"/>
<rect x="773" y="534" width="2" height="13.7" fill="#0e31ed"/>
<rect x="777" y="568.3" width="1" height="12" fill="#1121e4"/>
<rect x="779" y="551.7" width="1" height="16.6" fill="#1415dd"/>
<rect x="779" y="568.3" width="1" height="9" fill="#0c3af3"/>
<rect x="780" y="568.3" width="1" height="12" fill="#1125e6"/>
<rect x="786" y="530" width="1" height="21.7" fill="#121ce1"/>
<rect x="786" y="568.3" width="1" height="12" fill="#0d39f2"/>
<rect x="792" y="559.7" width="2" height="5.6" fill="#121de1"/>
<rect x="799" y="530" width="2" height="21.7" fill="#1220e3"/>
<rect x="799" y="534" width="2" height="13.7" fill="#0b3ff6"/>
<rect x="801" y="530" width="1" height="21.7" fill="#1111c6"/>
<rect x="801" y="568.3" width="1" height="12" fill="#1125e6"/>
<rect x="803" y="551.7" width="2" height="16.6" fill="#0f2deb"/>
<rect x="803" y="568.3" width="2" height="12" fill="#0c3df5"/>
<rect x="805" y="530" width="1" height="21.7" fill="#121fe2"/>
<rect x="805" y="551.7" width="1" height="16.6" fill="#1027e7"/>
<rect x="805" y="568.3" width="1" height="7" fill="#0d38f2"/>
<rect x="809" y="551.7" width="1" height="16.6" fill="#0e32ee"/>
<rect x="810" y="551.7" width="1" height="11.6" fill="#1123e5"/>
<rect x="812" y="554.7" width="1" height="13.6" fill="#1026e7"/>
<rect x="813" y="523" width="1" height="28.7" fill="#1414dc"/>
<rect x="813" y="551.7" width="1" height="16.6" fill="#1313d2"/>
<rect x="813" y="568.3" width="1" height="7" fill="#1122e4"/>
<rect x="815" y="551.7" width="1" height="11.6" fill="#1313d4"/>
<rect x="816" y="556.7" width="1" height="11.6" fill="#0f2eec"/>
<rect x="816" y="568.3" width="1" height="12" fill="#102ae9"/>
<rect x="817" y="530" width="1" height="21.7" fill="#1313d2"/>
<rect x="817" y="551.7" width="1" height="16.6" fill="#1317de"/>
<rect x="817" y="568.3" width="1" height="12" fill="#0d37f1"/>
<rect x="818" y="568.3" width="2" height="12" fill="#121de2"/>
<rect x="820" y="515" width="1" height="5" fill="#0f0fb9"/>
<rect x="821" y="568.3" width="2" height="12" fill="#0f2fec"/>
<rect x="823" y="530" width="1" height="21.7" fill="#1124e5"/>
<rect x="824" y="530" width="1" height="21.7" fill="#1416dd"/>
<rect x="825" y="551.7" width="1" height="16.6" fill="#1313d6"/>
<rect x="830" y="530" width="1" height="21.7" fill="#1125e6"/>
<rect x="830" y="568.3" width="1" height="12" fill="#0d37f1"/>
<rect x="834" y="523" width="2" height="7" fill="#121ce1"/>
<rect x="836" y="530" width="1" height="21.7" fill="#1010c0"/>
<rect x="840" y="554.7" width="1" height="13.6" fill="#1124e6"/>
<rect x="840" y="568.3" width="1" height="12" fill="#0f2eeb"/>
<rect x="843" y="530" width="1" height="21.7" fill="#1010bf"/>
<rect x="844" y="523" width="1" height="7" fill="#131be0"/>
<rect x="844" y="551.7" width="1" height="13.6" fill="#131be0"/>
<rect x="846" y="523" width="1" height="28.7" fill="#1415dd"/>
<rect x="851" y="523" width="1" height="7" fill="#1212ce"/>
<rect x="853" y="551.7" width="1" height="16.6" fill="#131adf"/>
<rect x="853" y="568.3" width="1" height="9" fill="#1026e7"/>
<rect x="856" y="530" width="1" height="21.7" fill="#1313d2"/>
<rect x="857" y="554.7" width="1" height="13.6" fill="#0e33ee"/>
<rect x="857" y="568.3" width="1" height="7" fill="#1029e9"/>
<rect x="859" y="556.7" width="1" height="11.6" fill="#121fe3"/>
<rect x="859" y="568.3" width="1" height="12" fill="#0e31ed"/>
<rect x="860" y="530" width="2" height="21.7" fill="#1122e4"/>
<rect x="864" y="523" width="1" height="28.7" fill="#1027e8"/>
<rect x="864" y="551.7" width="1" height="13.6" fill="#0e31ed"/>
<rect x="866" y="551.7" width="1" height="13.6" fill="#1415dc"/>
<rect x="867" y="530" width="1" height="21.7" fill="#1212cb"/>
<rect x="867" y="551.7" width="1" height="16.6" fill="#1220e3"/>
<rect x="867" y="568.3" width="1" height="12" fill="#0e32ee"/>
<rect x="868" y="530" width="1" height="21.7" fill="#1415dd"/>
<rect x="868" y="551.7" width="1" height="16.6" fill="#1313d5"/>
<rect x="870" y="551.7" width="1" height="16.6" fill="#121ee2"/>
<rect x="870" y="568.3" width="1" height="12" fill="#1121e4"/>
<rect x="871" y="530" width="1" height="21.7" fill="#1414db"/>
<rect x="871" y="551.7" width="1" height="16.6" fill="#1121e4"/>
<rect x="871" y="568.3" width="1" height="12" fill="#0e30ed"/>
<rect x="874" y="530" width="1" height="21.7" fill="#1415dc"/>
<rect x="874" y="551.7" width="1" height="16.6" fill="#1319df"/>
<rect x="874" y="568.3" width="1" height="12" fill="#1220e3"/>
<rect x="875" y="530" width="1" height="21.7" fill="#1123e5"/>
<rect x="875" y="551.7" width="1" height="11.6" fill="#0e31ed"/>
<rect x="876" y="568.3" width="1" height="12" fill="#121ce1"/>
<rect x="877" y="551.7" width="1" height="16.6" fill="#1026e7"/>
<rect x="887" y="568.3" width="1" height="7" fill="#1124e6"/>
<rect x="889" y="530" width="1" height="21.7" fill="#121ee2"/>
<rect x="890" y="530" width="1" height="21.7" fill="#1212cb"/>
<rect x="890" y="568.3" width="1" height="12" fill="#1122e4"/>
<rect x="891" y="517" width="2" height="8" fill="#0f0fb9"/>
<rect x="893" y="556.7" width="1" height="8.6" fill="#121ee2"/>
<rect x="894" y="554.7" width="2" height="13.6" fill="#0f2bea"/>
<rect x="894" y="568.3" width="2" height="12" fill="#0d35f0"/>
<rect x="896" y="568.3" width="1" height="12" fill="#0d35f0"/>
<rect x="900" y="556.7" width="2" height="11.6" fill="#0f2eec"/>
<rect x="900" y="568.3" width="2" height="12" fill="#1029e9"/>
<rect x="902" y="530" width="1" height="21.7" fill="#121fe2"/>
<rect x="906" y="559.7" width="1" height="3.6" fill="#0f2deb"/>
<rect x="911" y="554.7" width="1" height="13.6" fill="#1220e3"/>
<rect x="911" y="568.3" width="1" height="12" fill="#1220e3"/>
<rect x="912" y="517" width="1" height="8" fill="#0f0fb9"/>
<rect x="922" y="551.7" width="2" height="16.6" fill="#1121e4"/>
<rect x="925" y="530" width="1" height="21.7" fill="#1212cc"/>
<rect x="926" y="551.7" width="1" height="16.6" fill="#1125e6"/>
<rect x="926" y="568.3" width="1" height="12" fill="#0c3bf4"/>
<rect x="927" y="530" width="1" height="21.7" fill="#1414dc"/>
<rect x="931" y="551.7" width="2" height="13.6" fill="#1414db"/>
<rect x="936" y="530" width="1" height="21.7" fill="#131ae0"/>
<rect x="938" y="530" width="1" height="21.7" fill="#1313d4"/>
<rect x="941" y="523" width="1" height="7" fill="#1111c5"/>
<rect x="941" y="551.7" width="1" height="16.6" fill="#121ce1"/>
<rect x="942" y="551.7" width="2" height="16.6" fill="#0f2cea"/>
<rect x="944" y="551.7" width="1" height="16.6" fill="#0f2ceb"/>
<rect x="946" y="568.3" width="2" height="12" fill="#1220e3"/>
<rect x="950" y="554.7" width="2" height="13.6" fill="#0f2fec"/>
<rect x="950" y="568.3" width="2" height="12" fill="#0f2deb"/>
<rect x="952" y="551.7" width="1" height="13.6" fill="#1124e5"/>
<rect x="955" y="554.7" width="1" height="13.6" fill="#1415dc"/>
<rect x="955" y="568.3" width="1" height="12" fill="#1123e5"/>
<rect x="956" y="523" width="1" height="7" fill="#1414dc"/>
<rect x="957" y="523" width="1" height="28.7" fill="#1028e8"/>
<rect x="957" y="551.7" width="1" height="16.6" fill="#1318de"/>
<rect x="957" y="568.3" width="1" height="12" fill="#1027e8"/>
<rect x="959" y="530" width="1" height="21.7" fill="#121de1"/>
<rect x="960" y="556.7" width="2" height="11.6" fill="#0f2fec"/>
<rect x="962" y="530" width="1" height="21.7" fill="#1111c8"/>
<rect x="963" y="551.7" width="2" height="16.6" fill="#102ae9"/>
<rect x="967" y="559.7" width="2" height="8.6" fill="#1313d6"/>
<rect x="967" y="568.3" width="2" height="12" fill="#0e34ef"/>
<rect x="969" y="523" width="1" height="7" fill="#1313d8"/>
<rect x="969" y="551.7" width="1" height="16.6" fill="#0f2cea"/>
<rect x="969" y="568.3" width="1" height="7" fill="#1220e3"/>
<rect x="972" y="530" width="1" height="21.7" fill="#1414dc"/>
<rect x="976" y="551.7" width="1" height="16.6" fill="#1414db"/>
<rect x="977" y="559.7" width="2" height="8.6" fill="#1319df"/>
<rect x="982" y="568.3" width="1" height="7" fill="#1123e5"/>
<rect x="983" y="551.7" width="1" height="13.6" fill="#1124e6"/>
<rect x="984" y="551.7" width="1" height="16.6" fill="#1313d4"/>
<rect x="984" y="568.3" width="1" height="12" fill="#0d39f2"/>
<rect x="986" y="559.7" width="1" height="8.6" fill="#102ae9"/>
<rect x="988" y="530" width="1" height="21.7" fill="#1313d4"/>
<rect x="988" y="551.7" width="1" height="16.6" fill="#102ae9"/>
<rect x="990" y="568.3" width="1" height="12" fill="#0c3cf4"/>
<rect x="991" y="551.7" width="2" height="16.6" fill="#1125e6"/>
<rect x="991" y="568.3" width="2" height="12" fill="#0c3af3"/>
<rect x="994" y="530" width="1" height="21.7" fill="#1027e7"/>
<rect x="995" y="568.3" width="1" height="12" fill="#0e32ee"/>
<rect x="996" y="551.7" width="1" height="16.6" fill="#1121e4"/>
<rect x="998" y="559.7" width="1" height="5.6" fill="#1212d1"/>
<rect x="1004" y="530" width="1" height="21.7" fill="#121ee2"/>
<rect x="1004" y="551.7" width="1" height="16.6" fill="#1026e7"/>
<rect x="1004" y="568.3" width="1" height="7" fill="#102ae9"/>
<rect x="1005" y="530" width="2" height="21.7" fill="#1027e7"/>
<rect x="1005" y="551.7" width="2" height="16.6" fill="#0e31ee"/>
<rect x="1007" y="530" width="2" height="21.7" fill="#131ae0"/>
<rect x="1009" y="556.7" width="1" height="11.6" fill="#121ce1"/>
<rect x="1009" y="568.3" width="1" height="12" fill="#121fe3"/>
<rect x="1014" y="551.7" width="1" height="16.6" fill="#0f2fec"/>
<rect x="1017" y="530" width="1" height="21.7" fill="#1313d5"/>
<rect x="1020" y="554.7" width="1" height="13.6" fill="#0e32ee"/>
<rect x="1020" y="568.3" width="1" height="12" fill="#0d36f0"/>
<rect x="1021" y="530" width="1" height="21.7" fill="#131be0"/>
<rect x="1028" y="556.7" width="2" height="11.6" fill="#1028e8"/>
<rect x="1028" y="568.3" width="2" height="12" fill="#0d37f1"/>
<rect x="1030" y="530" width="1" height="21.7" fill="#121ce1"/>
<rect x="1030" y="551.7" width="1" height="11.6" fill="#1313d7"/>
<rect x="1031" y="523" width="1" height="28.7" fill="#1028e8"/>
<rect x="1032" y="517" width="2" height="9" fill="#0f0fb9"/>
<rect x="1032" y="551.7" width="2" height="16.6" fill="#1415dd"/>
<rect x="1032" y="568.3" width="2" height="12" fill="#0e33ef"/>
<rect x="1038" y="551.7" width="1" height="16.6" fill="#0e30ed"/>
<rect x="1038" y="568.3" width="1" height="12" fill="#0c3df5"/>
<rect x="1042" y="551.7" width="1" height="16.6" fill="#1122e5"/>
<rect x="1042" y="568.3" width="1" height="12" fill="#0f2deb"/>
<rect x="1045" y="568.3" width="2" height="12" fill="#0f2fec"/>
<rect x="1048" y="530" width="1" height="21.7" fill="#1220e3"/>
<rect x="1059" y="523" width="2" height="7" fill="#1123e5"/>
<rect x="1059" y="527" width="2" height="2" fill="#0b42f8"/>
<rect x="1059" y="551.7" width="2" height="16.6" fill="#1123e5"/>
<rect x="1059" y="568.3" width="2" height="12" fill="#0f2bea"/>
<rect x="1061" y="530" width="1" height="21.7" fill="#1220e3"/>
<rect x="1066" y="556.7" width="2" height="11.6" fill="#0f2fec"/>
<rect x="1066" y="568.3" width="2" height="12" fill="#0c3df5"/>
<rect x="1068" y="523" width="1" height="28.7" fill="#1010c2"/>
<rect x="1078" y="530" width="2" height="21.7" fill="#1319df"/>
<rect x="1078" y="534" width="2" height="13.7" fill="#0d39f2"/>
<rect x="150" y="580.3" width="2" height="4" fill="#0b42f8"/>
<rect x="162" y="580.3" width="2" height="4" fill="#0f2deb"/>
<rect x="301" y="580.3" width="3" height="4" fill="#0b43f8"/>
<rect x="313" y="580.3" width="3" height="4" fill="#0c3ef5"/>
<rect x="421" y="580.3" width="2" height="4" fill="#0d38f2"/>
<rect x="425" y="580.3" width="2" height="4" fill="#0d36f0"/>
<rect x="626" y="580.3" width="2" height="4" fill="#0a44f9"/>
<rect x="655" y="580.3" width="3" height="4" fill="#0d37f1"/>
<rect x="740" y="580.3" width="6" height="4" fill="#0b3ff6"/>
<rect x="758" y="580.3" width="2" height="4" fill="#0b3ff6"/>
<rect x="772" y="580.3" width="3" height="4" fill="#0d37f1"/>
<rect x="780" y="580.3" width="3" height="4" fill="#0b40f6"/>
<rect x="796" y="580.3" width="3" height="4" fill="#0e30ed"/>
<rect x="805" y="580.3" width="2" height="4" fill="#0b42f7"/>
<rect x="939" y="580.3" width="3" height="4" fill="#0b43f8"/>
<rect x="961" y="580.3" width="2" height="4" fill="#0d37f1"/>
<rect x="973" y="580.3" width="2" height="4" fill="#0c3df5"/>
<rect x="1048" y="580.3" width="2" height="4" fill="#0e34ef"/>
<rect x="1067" y="580.3" width="3" height="4" fill="#0d38f1"/>
<rect x="112" y="593.729" width="1" height="11.7714" fill="#036de6"/>
<rect x="147" y="584.3" width="1" height="21.2" fill="#007fdd"/>
<rect x="261" y="584.3" width="1" height="21.2" fill="#017dde"/>
<rect x="265" y="591.945" width="1" height="13.5553" fill="#017ddf"/>
<rect x="357" y="584.3" width="1" height="21.2" fill="#0273e3"/>
<rect x="377" y="584.3" width="2" height="21.2" fill="#0080dd"/>
<rect x="415" y="588.168" width="1" height="17.3323" fill="#046ce7"/>
<rect x="435" y="590.159" width="1" height="15.3415" fill="#036fe5"/>
<rect x="445" y="584.3" width="1" height="21.2" fill="#0371e4"/>
<rect x="462" y="584.3" width="1" height="21.2" fill="#0081dd"/>
<rect x="523" y="584.3" width="2" height="21.2" fill="#036ee6"/>
<rect x="544" y="584.3" width="2" height="21.2" fill="#0566ea"/>
<rect x="557" y="589.899" width="1" height="15.601" fill="#0370e5"/>
<rect x="593" y="584.3" width="1" height="21.2" fill="#0080dd"/>
<rect x="611" y="584.3" width="1" height="21.2" fill="#017dde"/>
<rect x="613" y="584.3" width="1" height="21.2" fill="#046ce7"/>
<rect x="661" y="588.818" width="1" height="16.6818" fill="#0372e4"/>
<rect x="696" y="584.3" width="1" height="21.2" fill="#0370e5"/>
<rect x="727" y="584.3" width="1" height="21.2" fill="#0469e9"/>
<rect x="809" y="584.3" width="1" height="21.2" fill="#0082dc"/>
<rect x="822" y="584.3" width="1" height="21.2" fill="#0080dd"/>
<rect x="845" y="587.48" width="1" height="18.0196" fill="#0081dc"/>
<rect x="914" y="584.3" width="1" height="21.2" fill="#0372e4"/>
<rect x="975" y="584.3" width="1" height="21.2" fill="#0082dc"/>
<rect x="987" y="584.3" width="1" height="21.2" fill="#036fe5"/>
<rect x="994" y="584.3" width="1" height="21.2" fill="#0566ea"/>
<rect x="1046" y="584.3" width="1" height="21.2" fill="#017ede"/>
<rect x="1050" y="584.3" width="1" height="21.2" fill="#0279e1"/>
<rect x="1059" y="595.692" width="1" height="9.80834" fill="#036de6"/>
<rect x="1078" y="589.419" width="1" height="16.081" fill="#0567ea"/>
<rect x="183" y="605.5" width="1" height="13" fill="#008dc6"/>
<rect x="192" y="605.5" width="1" height="13" fill="#008acd"/>
<rect x="257" y="605.5" width="1" height="13" fill="#008acd"/>
<rect x="303" y="605.5" width="1" height="13" fill="#008cc9"/>
<rect x="314" y="605.5" width="2" height="13" fill="#0098b0"/>
<rect x="342" y="605.5" width="1" height="13" fill="#0098af"/>
<rect x="357" y="605.5" width="1" height="13" fill="#0090bf"/>
<rect x="368" y="605.5" width="1" height="13" fill="#008cc7"/>
<rect x="430" y="605.5" width="1" height="13" fill="#0098b0"/>
<rect x="436" y="605.5" width="1" height="13" fill="#008fc2"/>
<rect x="462" y="605.5" width="1" height="13" fill="#0096b5"/>
<rect x="494" y="605.5" width="1" height="13" fill="#0090c0"/>
<rect x="534" y="605.5" width="1" height="13" fill="#0094b8"/>
<rect x="560" y="605.5" width="1" height="13" fill="#008ec4"/>
<rect x="591" y="605.5" width="1" height="13" fill="#008ec4"/>
<rect x="601" y="605.5" width="1" height="13" fill="#0095b5"/>
<rect x="664" y="605.5" width="1" height="13" fill="#0092bd"/>
<rect x="670" y="605.5" width="2" height="13" fill="#0095b6"/>
<rect x="727" y="605.5" width="1" height="13" fill="#0090c0"/>
<rect x="733" y="605.5" width="1" height="13" fill="#0090c0"/>
<rect x="768" y="605.5" width="1" height="13" fill="#0092bb"/>
<rect x="827" y="605.5" width="1" height="13" fill="#0095b6"/>
<rect x="850" y="605.5" width="1" height="13" fill="#008acd"/>
<rect x="867" y="605.5" width="1" height="13" fill="#0092bb"/>
<rect x="909" y="605.5" width="1" height="13" fill="#0098af"/>
<rect x="950" y="605.5" width="1" height="13" fill="#0090c0"/>
<rect x="996" y="605.5" width="1" height="13" fill="#0090c0"/>
<rect x="1012" y="605.5" width="1" height="13" fill="#008cc9"/>
<rect x="1030" y="605.5" width="1" height="13" fill="#0091bf"/>
<rect x="1072" y="605.5" width="1" height="13" fill="#008cc7"/>
<rect x="115" y="618.5" width="1" height="12" fill="#009ca9"/>
<rect x="148" y="618.5" width="1" height="12" fill="#0099ae"/>
<rect x="210" y="618.5" width="1" height="12" fill="#04a696"/>
<rect x="218" y="618.5" width="1" height="12" fill="#03a598"/>
<rect x="260" y="618.5" width="1" height="12" fill="#01a19e"/>
<rect x="271" y="618.5" width="1" height="12" fill="#02a39c"/>
<rect x="299" y="618.5" width="1" height="12" fill="#02a39b"/>
<rect x="401" y="618.5" width="1" height="12" fill="#01a19e"/>
<rect x="423" y="618.5" width="1" height="12" fill="#04a696"/>
<rect x="534" y="618.5" width="1" height="12" fill="#03a598"/>
<rect x="639" y="618.5" width="1" height="12" fill="#009ca8"/>
<rect x="728" y="618.5" width="1" height="12" fill="#00a0a0"/>
<rect x="749" y="618.5" width="1" height="12" fill="#009fa2"/>
<rect x="784" y="618.5" width="1" height="12" fill="#009ea4"/>
<rect x="792" y="618.5" width="1" height="12" fill="#0099ad"/>
<rect x="839" y="618.5" width="1" height="12" fill="#009da6"/>
<rect x="841" y="618.5" width="1" height="12" fill="#009baa"/>
<rect x="845" y="618.5" width="1" height="12" fill="#01a19e"/>
<rect x="898" y="618.5" width="1" height="12" fill="#009da7"/>
<rect x="902" y="618.5" width="1" height="12" fill="#009ca9"/>
<rect x="906" y="618.5" width="1" height="12" fill="#00a0a0"/>
<rect x="927" y="618.5" width="1" height="12" fill="#009da6"/>
<rect x="931" y="618.5" width="1" height="12" fill="#009ca7"/>
<rect x="964" y="618.5" width="1" height="12" fill="#009baa"/>
<rect x="989" y="618.5" width="1" height="12" fill="#009ca8"/>
<rect x="996" y="618.5" width="1" height="12" fill="#02a49a"/>
<rect x="1003" y="618.5" width="1" height="12" fill="#009bab"/>
<rect x="1013" y="618.5" width="1" height="12" fill="#009da6"/>
<rect x="1065" y="618.5" width="1" height="12" fill="#03a598"/>
<rect x="1067" y="618.5" width="1" height="12" fill="#009baa"/>
<rect x="110" y="630.5" width="1" height="17" fill="#14be6f"/>
<rect x="282" y="630.5" width="1" height="17" fill="#0db47f"/>
<rect x="290" y="630.5" width="1" height="17" fill="#0fb77a"/>
<rect x="311" y="630.5" width="1" height="17" fill="#11ba75"/>
<rect x="414" y="630.5" width="1" height="17" fill="#0aaf87"/>
<rect x="477" y="630.5" width="1" height="17" fill="#11b976"/>
<rect x="532" y="630.5" width="1" height="17" fill="#0ab086"/>
<rect x="564" y="630.5" width="1" height="17" fill="#0eb57d"/>
<rect x="574" y="630.5" width="1" height="17" fill="#10b977"/>
<rect x="640" y="630.5" width="1" height="17" fill="#0cb282"/>
<rect x="746" y="630.5" width="1" height="17" fill="#0cb283"/>
<rect x="799" y="630.5" width="1" height="17" fill="#13bd70"/>
<rect x="839" y="630.5" width="1" height="17" fill="#11ba75"/>
<rect x="852" y="630.5" width="1" height="17" fill="#11b976"/>
<rect x="857" y="630.5" width="1" height="17" fill="#0bb085"/>
<rect x="877" y="630.5" width="1" height="17" fill="#10b878"/>
<rect x="885" y="630.5" width="1" height="17" fill="#0fb67b"/>
<rect x="887" y="630.5" width="1" height="17" fill="#0bb184"/>
<rect x="907" y="630.5" width="1" height="17" fill="#11ba74"/>
<rect x="911" y="630.5" width="1" height="17" fill="#0cb183"/>
<rect x="915" y="630.5" width="1" height="17" fill="#0fb67b"/>
<rect x="930" y="630.5" width="1" height="17" fill="#0bb085"/>
<rect x="934" y="630.5" width="1" height="17" fill="#0db47f"/>
<rect x="944" y="630.5" width="1" height="17" fill="#14be6f"/>
<rect x="955" y="630.5" width="2" height="17" fill="#0db380"/>
<rect x="958" y="630.5" width="1" height="17" fill="#10b878"/>
<rect x="960" y="630.5" width="2" height="17" fill="#0eb57d"/>
<rect x="979" y="630.5" width="1" height="17" fill="#0ab086"/>
<rect x="981" y="630.5" width="1" height="17" fill="#10b977"/>
<rect x="983" y="630.5" width="3" height="17" fill="#0fb77a"/>
<rect x="989" y="630.5" width="1" height="17" fill="#11ba75"/>
<rect x="1010" y="630.5" width="1" height="17" fill="#13bd6f"/>
<rect x="1036" y="630.5" width="1" height="17" fill="#0ab086"/>
<rect x="1045" y="630.5" width="1" height="17" fill="#10b977"/>
<rect x="1050" y="630.5" width="1" height="17" fill="#0bb085"/>
<rect x="1069" y="630.5" width="1" height="17" fill="#0eb47e"/>
<rect x="1077" y="630.5" width="1" height="17" fill="#0db381"/>
<linearGradient id="yi" x1="0" y1="647" x2="0" y2="664" gradientUnits="userSpaceOnUse"><stop offset="0" stop-color="#28c478"/><stop offset="1" stop-color="#8ee03c"/></linearGradient>
<linearGradient id="ykk" x1="0" y1="676" x2="0" y2="691" gradientUnits="userSpaceOnUse"><stop offset="0" stop-color="#b0e428"/><stop offset="0.5" stop-color="#dce810"/><stop offset="0.8" stop-color="#ecdc04"/><stop offset="1" stop-color="#f4c400"/></linearGradient>
<linearGradient id="yj" x1="0" y1="664" x2="0" y2="677" gradientUnits="userSpaceOnUse"><stop offset="0" stop-color="#50d060"/><stop offset="1" stop-color="#b8e620"/></linearGradient>
<rect x="103" y="676.5" width="3" height="13.5" fill="url(#ykk)"/>
<rect x="103" y="664" width="3" height="12.6" fill="url(#yj)"/>
<rect x="109" y="676.5" width="2" height="13.5" fill="url(#ykk)"/>
<rect x="109" y="664" width="2" height="12.6" fill="url(#yj)"/>
<rect x="113" y="676.5" width="2" height="13.5" fill="url(#ykk)"/>
<rect x="116" y="676.5" width="5" height="13.5" fill="url(#ykk)"/>
<rect x="122" y="676.5" width="1" height="13.5" fill="url(#ykk)"/>
<rect x="129" y="676.5" width="4" height="13.5" fill="url(#ykk)"/>
<rect x="135" y="676.5" width="2" height="13.5" fill="url(#ykk)"/>
<rect x="141" y="676.5" width="3" height="13.5" fill="url(#ykk)"/>
<rect x="142" y="664" width="2" height="12.6" fill="url(#yj)"/>
<rect x="150" y="676.5" width="2" height="13.5" fill="url(#ykk)"/>
<rect x="150" y="664" width="2" height="12.6" fill="url(#yj)"/>
<rect x="155" y="676.5" width="4" height="13.5" fill="url(#ykk)"/>
<rect x="159" y="676.5" width="2" height="13.5" fill="url(#ykk)"/>
<rect x="167" y="676.5" width="1" height="13.5" fill="url(#ykk)"/>
<rect x="167" y="664" width="1" height="12.6" fill="url(#yj)"/>
<rect x="176" y="676.5" width="2" height="13.5" fill="url(#ykk)"/>
<rect x="183" y="676.5" width="2" height="13.5" fill="url(#ykk)"/>
<rect x="183" y="664" width="2" height="12.6" fill="url(#yj)"/>
<rect x="190" y="676.5" width="1" height="13.5" fill="url(#ykk)"/>
<rect x="197" y="676.5" width="1" height="13.5" fill="url(#ykk)"/>
<rect x="204" y="676.5" width="1" height="13.5" fill="url(#ykk)"/>
<rect x="213" y="676.5" width="3" height="13.5" fill="url(#ykk)"/>
<rect x="215" y="664" width="1" height="12.6" fill="url(#yj)"/>
<rect x="217" y="676.5" width="2" height="13.5" fill="url(#ykk)"/>
<rect x="223" y="676.5" width="1" height="13.5" fill="url(#ykk)"/>
<rect x="232" y="676.5" width="3" height="13.5" fill="url(#ykk)"/>
<rect x="236" y="676.5" width="1" height="13.5" fill="url(#ykk)"/>
<rect x="239" y="676.5" width="2" height="13.5" fill="url(#ykk)"/>
<rect x="254" y="676.5" width="2" height="13.5" fill="url(#ykk)"/>
<rect x="254" y="664" width="2" height="12.6" fill="url(#yj)"/>
<rect x="260" y="676.5" width="1" height="13.5" fill="url(#ykk)"/>
<rect x="260" y="664" width="1" height="12.6" fill="url(#yj)"/>
<rect x="267" y="676.5" width="1" height="13.5" fill="url(#ykk)"/>
<rect x="269" y="676.5" width="2" height="13.5" fill="url(#ykk)"/>
<rect x="269" y="664" width="2" height="12.6" fill="url(#yj)"/>
<rect x="272" y="676.5" width="1" height="13.5" fill="url(#ykk)"/>
<rect x="276" y="676.5" width="2" height="13.5" fill="url(#ykk)"/>
<rect x="291" y="676.5" width="2" height="13.5" fill="url(#ykk)"/>
<rect x="291" y="664" width="2" height="12.6" fill="url(#yj)"/>
<rect x="306" y="676.5" width="2" height="13.5" fill="url(#ykk)"/>
<rect x="317" y="676.5" width="3" height="13.5" fill="url(#ykk)"/>
<rect x="324" y="676.5" width="1" height="13.5" fill="url(#ykk)"/>
<rect x="336" y="676.5" width="5" height="13.5" fill="url(#ykk)"/>
<rect x="336" y="664" width="2" height="12.6" fill="url(#yj)"/>
<rect x="346" y="676.5" width="3" height="13.5" fill="url(#ykk)"/>
<rect x="346" y="664" width="2" height="12.6" fill="url(#yj)"/>
<rect x="351" y="676.5" width="2" height="13.5" fill="url(#ykk)"/>
<rect x="351" y="664" width="2" height="12.6" fill="url(#yj)"/>
<rect x="354" y="676.5" width="4" height="13.5" fill="url(#ykk)"/>
<rect x="354" y="664" width="3" height="12.6" fill="url(#yj)"/>
<rect x="364" y="676.5" width="1" height="13.5" fill="url(#ykk)"/>
<rect x="364" y="664" width="1" height="12.6" fill="url(#yj)"/>
<rect x="368" y="676.5" width="4" height="13.5" fill="url(#ykk)"/>
<rect x="372" y="676.5" width="1" height="13.5" fill="url(#ykk)"/>
<rect x="376" y="676.5" width="1" height="13.5" fill="url(#ykk)"/>
<rect x="382" y="676.5" width="2" height="13.5" fill="url(#ykk)"/>
<rect x="386" y="676.5" width="4" height="13.5" fill="url(#ykk)"/>
<rect x="392" y="676.5" width="2" height="13.5" fill="url(#ykk)"/>
<rect x="395" y="676.5" width="2" height="13.5" fill="url(#ykk)"/>
<rect x="398" y="676.5" width="1" height="13.5" fill="url(#ykk)"/>
<rect x="405" y="676.5" width="1" height="13.5" fill="url(#ykk)"/>
<rect x="412" y="676.5" width="6" height="13.5" fill="url(#ykk)"/>
<rect x="412" y="664" width="1" height="12.6" fill="url(#yj)"/>
<rect x="412" y="676.5" width="1" height="13.5" fill="url(#ykk)"/>
<rect x="414" y="664" width="2" height="12.6" fill="url(#yj)"/>
<rect x="420" y="676.5" width="5" height="13.5" fill="url(#ykk)"/>
<rect x="420" y="664" width="1" height="12.6" fill="url(#yj)"/>
<rect x="425" y="676.5" width="2" height="13.5" fill="url(#ykk)"/>
<rect x="425" y="664" width="2" height="12.6" fill="url(#yj)"/>
<rect x="431" y="676.5" width="1" height="13.5" fill="url(#ykk)"/>
<rect x="434" y="676.5" width="2" height="13.5" fill="url(#ykk)"/>
<rect x="444" y="676.5" width="4" height="13.5" fill="url(#ykk)"/>
<rect x="444" y="664" width="2" height="12.6" fill="url(#yj)"/>
<rect x="449" y="676.5" width="4" height="13.5" fill="url(#ykk)"/>
<rect x="465" y="676.5" width="1" height="13.5" fill="url(#ykk)"/>
<rect x="468" y="676.5" width="2" height="13.5" fill="url(#ykk)"/>
<rect x="472" y="676.5" width="1" height="13.5" fill="url(#ykk)"/>
<rect x="472" y="664" width="1" height="12.6" fill="url(#yj)"/>
<rect x="475" y="676.5" width="6" height="13.5" fill="url(#ykk)"/>
<rect x="480" y="664" width="1" height="12.6" fill="url(#yj)"/>
<rect x="481" y="676.5" width="10" height="13.5" fill="url(#ykk)"/>
<rect x="483" y="664" width="2" height="12.6" fill="url(#yj)"/>
<rect x="481" y="676.5" width="1" height="13.5" fill="url(#ykk)"/>
<rect x="486" y="664" width="2" height="12.6" fill="url(#yj)"/>
<rect x="496" y="676.5" width="4" height="13.5" fill="url(#ykk)"/>
<rect x="498" y="664" width="1" height="12.6" fill="url(#yj)"/>
<rect x="500" y="676.5" width="6" height="13.5" fill="url(#ykk)"/>
<rect x="503" y="664" width="2" height="12.6" fill="url(#yj)"/>
<rect x="509" y="676.5" width="1" height="13.5" fill="url(#ykk)"/>
<rect x="509" y="664" width="1" height="12.6" fill="url(#yj)"/>
<rect x="511" y="676.5" width="3" height="13.5" fill="url(#ykk)"/>
<rect x="514" y="676.5" width="2" height="13.5" fill="url(#ykk)"/>
<rect x="518" y="676.5" width="2" height="13.5" fill="url(#ykk)"/>
<rect x="531" y="676.5" width="4" height="13.5" fill="url(#ykk)"/>
<rect x="531" y="664" width="1" height="12.6" fill="url(#yj)"/>
<rect x="539" y="676.5" width="4" height="13.5" fill="url(#ykk)"/>
<rect x="539" y="664" width="1" height="12.6" fill="url(#yj)"/>
<rect x="548" y="676.5" width="3" height="13.5" fill="url(#ykk)"/>
<rect x="553" y="676.5" width="1" height="13.5" fill="url(#ykk)"/>
<rect x="557" y="676.5" width="1" height="13.5" fill="url(#ykk)"/>
<rect x="566" y="676.5" width="2" height="13.5" fill="url(#ykk)"/>
<rect x="573" y="676.5" width="1" height="13.5" fill="url(#ykk)"/>
<rect x="573" y="664" width="1" height="12.6" fill="url(#yj)"/>
<rect x="574" y="676.5" width="2" height="13.5" fill="url(#ykk)"/>
<rect x="579" y="676.5" width="1" height="13.5" fill="url(#ykk)"/>
<rect x="582" y="676.5" width="2" height="13.5" fill="url(#ykk)"/>
<rect x="585" y="676.5" width="2" height="13.5" fill="url(#ykk)"/>
<rect x="603" y="676.5" width="2" height="13.5" fill="url(#ykk)"/>
<rect x="609" y="676.5" width="1" height="13.5" fill="url(#ykk)"/>
<rect x="146" y="647.208" width="2" height="28.7102" fill="url(#yi)"/>
<rect x="200" y="647.208" width="1" height="17.2261" fill="url(#yi)"/>
<rect x="253" y="647.208" width="1" height="17.2261" fill="url(#yi)"/>
<rect x="273" y="647.208" width="2" height="17.2261" fill="url(#yi)"/>
<rect x="483" y="647.208" width="1" height="17.2261" fill="url(#yi)"/>
<rect x="524" y="647.208" width="1" height="17.2261" fill="url(#yi)"/>
<rect x="531" y="647.208" width="1" height="17.2261" fill="url(#yi)"/>
<rect x="581" y="647.208" width="1" height="17.2261" fill="url(#yi)"/>
<rect x="613" y="647.208" width="1" height="17.2261" fill="url(#yi)"/>
<rect x="122" y="630.5" width="1" height="17" fill="#0fb67a"/>
<rect x="126" y="630.5" width="2" height="17" fill="#0fb67a"/>
<rect x="155" y="630.5" width="1" height="17" fill="#0fb67a"/>
<rect x="299" y="630.5" width="2" height="17" fill="#0fb67a"/>
<rect x="434" y="630.5" width="1" height="17" fill="#0fb67a"/>
<rect x="475" y="630.5" width="1" height="17" fill="#0fb67a"/>
<rect x="514" y="630.5" width="1" height="17" fill="#0fb67a"/>
<rect x="544" y="630.5" width="1" height="17" fill="#0fb67a"/>
<rect x="600" y="630.5" width="1" height="17" fill="#0fb67a"/>
<linearGradient id="ys" x1="0" y1="664" x2="0" y2="691" gradientUnits="userSpaceOnUse"><stop offset="0" stop-color="#bcea20"/><stop offset="0.3" stop-color="#e0ec0c"/><stop offset="0.6" stop-color="#f2dc00"/><stop offset="0.85" stop-color="#f8b800"/><stop offset="1" stop-color="#fa9c00"/></linearGradient>
<rect x="618" y="664" width="197" height="26" fill="url(#ys)"/>
<rect x="635" y="676.667" width="3" height="14.7001" fill="#000"/>
<rect x="639" y="663.834" width="2" height="11.0001" fill="#000"/>
<rect x="643" y="663.834" width="1" height="11.0001" fill="#000"/>
<rect x="644" y="663.834" width="2" height="27.5336" fill="#000"/>
<rect x="704" y="663.834" width="3" height="27.5336" fill="#000"/>
<rect x="707" y="663.834" width="1" height="11.9168" fill="#000"/>
<rect x="710" y="663.834" width="3" height="11.9168" fill="#000"/>
<rect x="716" y="663.834" width="2" height="27.5336" fill="#000"/>
<rect x="724" y="663.834" width="1" height="11.9168" fill="#000"/>
<rect x="732" y="663.834" width="1" height="11.9168" fill="#000"/>
<rect x="736" y="663.834" width="1" height="11.9168" fill="#000"/>
<rect x="738" y="663.834" width="1" height="11.9168" fill="#000"/>
<rect x="756" y="663.834" width="3" height="11.9168" fill="#000"/>
<rect x="759" y="663.834" width="3" height="27.5336" fill="#000"/>
<rect x="762" y="663.834" width="3" height="11.9168" fill="#000"/>
<rect x="765" y="663.834" width="2" height="27.5336" fill="#000"/>
<rect x="767" y="663.834" width="1" height="11.9168" fill="#000"/>
<rect x="769" y="663.834" width="1" height="9.16674" fill="#000"/>
<rect x="791" y="663.834" width="1" height="11.9168" fill="#000"/>
<rect x="664" y="663.834" width="1" height="5.50005" fill="#000"/>
<rect x="691" y="663.834" width="1" height="7.33339" fill="#000"/>
<rect x="746" y="663.834" width="1" height="6.41672" fill="#000"/>
<rect x="776" y="663.834" width="1" height="7.33339" fill="#000"/>
<rect x="804" y="663.834" width="1" height="6.41672" fill="#000"/>
<linearGradient id="yib" x1="0" y1="647" x2="0" y2="664" gradientUnits="userSpaceOnUse"><stop offset="0" stop-color="#0a78dc"/><stop offset="1" stop-color="#30c080"/></linearGradient>
<rect x="613" y="647.5" width="1" height="16.5" fill="url(#yib)"/>
<rect x="625" y="647.5" width="1" height="16.5" fill="url(#yi)"/>
<rect x="635" y="647.5" width="1" height="16.5" fill="url(#yi)"/>
<rect x="637" y="647.5" width="2" height="16.5" fill="url(#yib)"/>
<rect x="646" y="647.5" width="1" height="16.5" fill="url(#yi)"/>
<rect x="648" y="647.5" width="1" height="16.5" fill="url(#yi)"/>
<rect x="666" y="647.5" width="1" height="16.5" fill="url(#yi)"/>
<rect x="671" y="647.5" width="1" height="16.5" fill="url(#yi)"/>
<rect x="674" y="647.5" width="2" height="16.5" fill="url(#yi)"/>
<rect x="682" y="647.5" width="4" height="16.5" fill="url(#yib)"/>
<rect x="695" y="647.5" width="2" height="16.5" fill="url(#yi)"/>
<rect x="699" y="647.5" width="4" height="16.5" fill="url(#yi)"/>
<rect x="721" y="647.5" width="1" height="16.5" fill="url(#yi)"/>
<rect x="725" y="647.5" width="1" height="16.5" fill="url(#yi)"/>
<rect x="733" y="647.5" width="1" height="16.5" fill="url(#yi)"/>
<rect x="740" y="647.5" width="1" height="16.5" fill="url(#yib)"/>
<rect x="760" y="647.5" width="2" height="16.5" fill="url(#yi)"/>
<rect x="767" y="647.5" width="2" height="16.5" fill="url(#yi)"/>
<rect x="774" y="647.5" width="1" height="16.5" fill="url(#yi)"/>
<rect x="793" y="647.5" width="3" height="16.5" fill="url(#yi)"/>
<rect x="800" y="647.5" width="3" height="16.5" fill="url(#yi)"/>
<rect x="806" y="647.5" width="2" height="16.5" fill="url(#yi)"/>
<rect x="811" y="647.5" width="3" height="16.5" fill="url(#yi)"/>
<rect x="637" y="630.5" width="1" height="17" fill="#0aaf87"/>
<rect x="671" y="630.5" width="1" height="17" fill="#0aaf87"/>
<rect x="725" y="630.5" width="1" height="17" fill="#0aaf87"/>
<rect x="756" y="630.5" width="2" height="17" fill="#0aaf87"/>
<linearGradient id="ya" x1="0" y1="647.5" x2="0" y2="691" gradientUnits="userSpaceOnUse"><stop offset="0" stop-color="#38cc80"/><stop offset="0.05" stop-color="#7cdc50"/><stop offset="0.12" stop-color="#b4ea20"/><stop offset="0.29" stop-color="#c8ee10"/><stop offset="0.425" stop-color="#dcee08"/><stop offset="0.52" stop-color="#f0dc00"/><stop offset="0.61" stop-color="#f8b000"/><stop offset="0.70" stop-color="#fa8c00"/><stop offset="0.745" stop-color="#f66a0c"/><stop offset="0.755" stop-color="#f04a1c"/><stop offset="0.845" stop-color="#f04a1c"/><stop offset="0.85" stop-color="#dc5c64"/><stop offset="1" stop-color="#dc5c64"/></linearGradient>
<linearGradient id="yb" x1="0" y1="664" x2="0" y2="691" gradientUnits="userSpaceOnUse"><stop offset="0" stop-color="#d8ee08"/><stop offset="0.12" stop-color="#f4d800"/><stop offset="0.25" stop-color="#fa9c00"/><stop offset="0.42" stop-color="#f6680c"/><stop offset="0.58" stop-color="#ee3c2c"/><stop offset="0.6" stop-color="#dc5c64"/><stop offset="1" stop-color="#dc5c64"/></linearGradient>
<linearGradient id="yc" x1="0" y1="664" x2="0" y2="691" gradientUnits="userSpaceOnUse"><stop offset="0" stop-color="#d8ee08"/><stop offset="0.15" stop-color="#f4d800"/><stop offset="0.32" stop-color="#fa9c00"/><stop offset="0.55" stop-color="#f6680c"/><stop offset="0.6" stop-color="#f04a1c"/><stop offset="0.755" stop-color="#f04a1c"/><stop offset="0.76" stop-color="#dc5c64"/><stop offset="1" stop-color="#dc5c64"/></linearGradient>
<rect x="819" y="664" width="14" height="27" fill="url(#yb)"/>
<rect x="833" y="647.5" width="248" height="43.5" fill="url(#ya)"/>
<rect x="833" y="664" width="3" height="27" fill="url(#yc)"/>
<rect x="836" y="664" width="22" height="27" fill="url(#yb)"/>
<rect x="858" y="664" width="13" height="27" fill="url(#yc)"/>
<rect x="871" y="664" width="3" height="27" fill="url(#yb)"/>
<rect x="855" y="647.5" width="1" height="16.5" fill="#000"/>
<rect x="860" y="647.5" width="2" height="16.5" fill="#000"/>
<rect x="915" y="647.5" width="1" height="16.5" fill="#000"/>
<rect x="943" y="647.5" width="2" height="16.5" fill="#000"/>
<rect x="956" y="647.5" width="3" height="16.5" fill="#000"/>
<rect x="974" y="647.5" width="2" height="16.5" fill="#000"/>
<rect x="980" y="647.5" width="4" height="16.5" fill="#000"/>
<rect x="985" y="647.5" width="6" height="16.5" fill="#000"/>
<rect x="992" y="647.5" width="3" height="16.5" fill="#000"/>
<rect x="997" y="647.5" width="6" height="16.5" fill="#000"/>
<rect x="1004" y="647.5" width="4" height="16.5" fill="#000"/>
<rect x="1009" y="647.5" width="2" height="16.5" fill="#000"/>
<rect x="1012" y="647.5" width="4" height="16.5" fill="#000"/>
<rect x="1019" y="647.5" width="2" height="16.5" fill="#000"/>
<rect x="1023" y="647.5" width="3" height="16.5" fill="#000"/>
<rect x="1028" y="647.5" width="2" height="16.5" fill="#000"/>
<rect x="1031" y="647.5" width="2" height="16.5" fill="#000"/>
<rect x="1035" y="647.5" width="2" height="16.5" fill="#000"/>
<rect x="1038" y="647.5" width="3" height="16.5" fill="#000"/>
<rect x="1043" y="647.5" width="2" height="16.5" fill="#000"/>
<rect x="1047" y="647.5" width="2" height="16.5" fill="#000"/>
<rect x="1050" y="647.5" width="2" height="16.5" fill="#000"/>
<rect x="1057" y="647.5" width="3" height="16.5" fill="#000"/>
<rect x="1063" y="647.5" width="3" height="16.5" fill="#000"/>
<rect x="1078" y="647.5" width="1" height="16.5" fill="#000"/>
<rect x="976" y="664" width="1" height="10" fill="#000"/>
<rect x="978" y="664" width="1" height="8" fill="#000"/>
<rect x="979" y="664" width="1" height="6" fill="#000"/>
<rect x="989" y="664" width="1" height="8" fill="#000"/>
<rect x="1003" y="664" width="1" height="10" fill="#000"/>
<rect x="1008" y="664" width="1" height="10" fill="#000"/>
<rect x="1012" y="664" width="1" height="6" fill="#000"/>
<rect x="1014" y="664" width="1" height="8" fill="#000"/>
<rect x="1016" y="664" width="1" height="10" fill="#000"/>
<rect x="1019" y="664" width="1" height="8" fill="#000"/>
<rect x="1020" y="664" width="1" height="10" fill="#000"/>
<rect x="1023" y="664" width="1" height="8" fill="#000"/>
<rect x="1025" y="664" width="1" height="10" fill="#000"/>
<rect x="1026" y="664" width="1" height="8" fill="#000"/>
<rect x="1030" y="664" width="1" height="10" fill="#000"/>
<rect x="1031" y="664" width="1" height="10" fill="#000"/>
<rect x="1035" y="664" width="1" height="8" fill="#000"/>
<rect x="1040" y="664" width="1" height="8" fill="#000"/>
<rect x="1041" y="664" width="1" height="6" fill="#000"/>
<rect x="1042" y="664" width="1" height="8" fill="#0755f2"/>
<rect x="1045" y="664" width="1" height="6" fill="#000"/>
<rect x="819" y="647.5" width="1" height="16.5" fill="url(#yi)"/>
<rect x="823" y="647.5" width="1" height="16.5" fill="url(#yi)"/>
<rect x="825" y="647.5" width="1" height="16.5" fill="url(#yi)"/>
<rect x="826" y="647.5" width="1" height="16.5" fill="url(#yi)"/>
<rect x="827" y="647.5" width="1" height="16.5" fill="url(#yi)"/>
<rect x="828" y="647.5" width="1" height="16.5" fill="url(#yi)"/>
<rect x="831" y="647.5" width="1" height="16.5" fill="url(#yi)"/>
<rect x="832" y="647.5" width="1" height="16.5" fill="url(#yi)"/>
<rect x="815" y="630.2" width="4" height="61" fill="#dc5c64"/>
<rect x="95" y="690.6" width="986" height="1" fill="#0c0c0c"/>
<rect x="812" y="664" width="3" height="27" fill="url(#ys)"/>
</g>
<g shape-rendering="crispEdges">
<rect x="95" y="695" width="986" height="16" fill="#000"/>
<rect x="97" y="696" width="711" height="14" fill="#00ff00"/>
<rect x="809" y="696" width="271" height="14" fill="#ff0000"/>
<rect x="136" y="711" width="1" height="4" fill="#222"/>
<rect x="177" y="711" width="1" height="4" fill="#222"/>
<rect x="218" y="711" width="1" height="8" fill="#222"/>
<rect x="259" y="711" width="1" height="4" fill="#222"/>
<rect x="300" y="711" width="1" height="4" fill="#222"/>
<rect x="341" y="711" width="1" height="8" fill="#222"/>
<rect x="382" y="711" width="1" height="4" fill="#222"/>
<rect x="423" y="711" width="1" height="4" fill="#222"/>
<rect x="464" y="711" width="1" height="8" fill="#222"/>
<rect x="505" y="711" width="1" height="4" fill="#222"/>
<rect x="546" y="711" width="1" height="4" fill="#222"/>
<rect x="587" y="711" width="1" height="8" fill="#222"/>
<rect x="628" y="711" width="1" height="4" fill="#222"/>
<rect x="669" y="711" width="1" height="4" fill="#222"/>
<rect x="710" y="711" width="1" height="8" fill="#222"/>
<rect x="751" y="711" width="1" height="4" fill="#222"/>
<rect x="792" y="711" width="1" height="4" fill="#222"/>
<rect x="833" y="711" width="1" height="8" fill="#222"/>
<rect x="874" y="711" width="1" height="4" fill="#222"/>
<rect x="915" y="711" width="1" height="4" fill="#222"/>
<rect x="956" y="711" width="1" height="8" fill="#222"/>
<rect x="997" y="711" width="1" height="4" fill="#222"/>
<rect x="1039" y="711" width="1" height="4" fill="#222"/>
<rect x="1080" y="711" width="1" height="8" fill="#222"/>
</g>
<g shape-rendering="crispEdges" fill="#666">
<rect x="136" y="217" width="1" height="3" fill="#3a3a3a"/>
<rect x="136" y="413" width="1" height="3" fill="#3a3a3a"/>
<rect x="136" y="687" width="1" height="3" fill="#3a3a3a"/>
<rect x="137" y="506" width="1" height="3" fill="#222"/>
<rect x="177" y="217" width="1" height="3" fill="#3a3a3a"/>
<rect x="177" y="413" width="1" height="3" fill="#3a3a3a"/>
<rect x="177" y="687" width="1" height="3" fill="#3a3a3a"/>
<rect x="178" y="506" width="1" height="3" fill="#222"/>
<rect x="218" y="217" width="1" height="3" fill="#3a3a3a"/>
<rect x="218" y="413" width="1" height="3" fill="#3a3a3a"/>
<rect x="218" y="687" width="1" height="3" fill="#3a3a3a"/>
<rect x="219" y="506" width="1" height="3" fill="#222"/>
<rect x="259" y="217" width="1" height="3" fill="#3a3a3a"/>
<rect x="259" y="413" width="1" height="3" fill="#3a3a3a"/>
<rect x="259" y="687" width="1" height="3" fill="#3a3a3a"/>
<rect x="260" y="506" width="1" height="3" fill="#222"/>
<rect x="300" y="217" width="1" height="3" fill="#3a3a3a"/>
<rect x="300" y="413" width="1" height="3" fill="#3a3a3a"/>
<rect x="300" y="687" width="1" height="3" fill="#3a3a3a"/>
<rect x="301" y="506" width="1" height="3" fill="#222"/>
<rect x="341" y="217" width="1" height="3" fill="#3a3a3a"/>
<rect x="341" y="413" width="1" height="3" fill="#3a3a3a"/>
<rect x="341" y="687" width="1" height="3" fill="#3a3a3a"/>
<rect x="342" y="506" width="1" height="3" fill="#222"/>
<rect x="382" y="217" width="1" height="3" fill="#3a3a3a"/>
<rect x="382" y="413" width="1" height="3" fill="#3a3a3a"/>
<rect x="382" y="687" width="1" height="3" fill="#3a3a3a"/>
<rect x="383" y="506" width="1" height="3" fill="#222"/>
<rect x="423" y="217" width="1" height="3" fill="#3a3a3a"/>
<rect x="423" y="413" width="1" height="3" fill="#3a3a3a"/>
<rect x="423" y="687" width="1" height="3" fill="#3a3a3a"/>
<rect x="424" y="506" width="1" height="3" fill="#222"/>
<rect x="464" y="217" width="1" height="3" fill="#3a3a3a"/>
<rect x="464" y="413" width="1" height="3" fill="#3a3a3a"/>
<rect x="464" y="687" width="1" height="3" fill="#3a3a3a"/>
<rect x="465" y="506" width="1" height="3" fill="#222"/>
<rect x="505" y="217" width="1" height="3" fill="#3a3a3a"/>
<rect x="505" y="413" width="1" height="3" fill="#3a3a3a"/>
<rect x="505" y="687" width="1" height="3" fill="#3a3a3a"/>
<rect x="506" y="506" width="1" height="3" fill="#222"/>
<rect x="546" y="217" width="1" height="3" fill="#3a3a3a"/>
<rect x="546" y="413" width="1" height="3" fill="#3a3a3a"/>
<rect x="546" y="687" width="1" height="3" fill="#3a3a3a"/>
<rect x="547" y="506" width="1" height="3" fill="#222"/>
<rect x="587" y="217" width="1" height="3" fill="#3a3a3a"/>
<rect x="587" y="413" width="1" height="3" fill="#3a3a3a"/>
<rect x="587" y="687" width="1" height="3" fill="#3a3a3a"/>
<rect x="588" y="506" width="1" height="3" fill="#222"/>
<rect x="628" y="217" width="1" height="3" fill="#3a3a3a"/>
<rect x="628" y="413" width="1" height="3" fill="#3a3a3a"/>
<rect x="628" y="687" width="1" height="3" fill="#3a3a3a"/>
<rect x="629" y="506" width="1" height="3" fill="#222"/>
<rect x="669" y="217" width="1" height="3" fill="#3a3a3a"/>
<rect x="669" y="413" width="1" height="3" fill="#3a3a3a"/>
<rect x="669" y="687" width="1" height="3" fill="#3a3a3a"/>
<rect x="670" y="506" width="1" height="3" fill="#222"/>
<rect x="710" y="217" width="1" height="3" fill="#3a3a3a"/>
<rect x="710" y="413" width="1" height="3" fill="#3a3a3a"/>
<rect x="710" y="687" width="1" height="3" fill="#3a3a3a"/>
<rect x="711" y="506" width="1" height="3" fill="#222"/>
<rect x="751" y="217" width="1" height="3" fill="#3a3a3a"/>
<rect x="751" y="413" width="1" height="3" fill="#3a3a3a"/>
<rect x="751" y="687" width="1" height="3" fill="#3a3a3a"/>
<rect x="752" y="506" width="1" height="3" fill="#222"/>
<rect x="792" y="217" width="1" height="3" fill="#3a3a3a"/>
<rect x="792" y="413" width="1" height="3" fill="#3a3a3a"/>
<rect x="792" y="687" width="1" height="3" fill="#3a3a3a"/>
<rect x="793" y="506" width="1" height="3" fill="#222"/>
<rect x="833" y="217" width="1" height="3" fill="#3a3a3a"/>
<rect x="833" y="413" width="1" height="3" fill="#3a3a3a"/>
<rect x="833" y="687" width="1" height="3" fill="#3a3a3a"/>
<rect x="834" y="506" width="1" height="3" fill="#222"/>
<rect x="874" y="217" width="1" height="3" fill="#3a3a3a"/>
<rect x="874" y="413" width="1" height="3" fill="#3a3a3a"/>
<rect x="874" y="687" width="1" height="3" fill="#3a3a3a"/>
<rect x="875" y="506" width="1" height="3" fill="#222"/>
<rect x="915" y="217" width="1" height="3" fill="#3a3a3a"/>
<rect x="915" y="413" width="1" height="3" fill="#3a3a3a"/>
<rect x="915" y="687" width="1" height="3" fill="#3a3a3a"/>
<rect x="916" y="506" width="1" height="3" fill="#222"/>
<rect x="956" y="217" width="1" height="3" fill="#3a3a3a"/>
<rect x="956" y="413" width="1" height="3" fill="#3a3a3a"/>
<rect x="956" y="687" width="1" height="3" fill="#3a3a3a"/>
<rect x="957" y="506" width="1" height="3" fill="#222"/>
<rect x="997" y="217" width="1" height="3" fill="#3a3a3a"/>
<rect x="997" y="413" width="1" height="3" fill="#3a3a3a"/>
<rect x="997" y="687" width="1" height="3" fill="#3a3a3a"/>
<rect x="998" y="506" width="1" height="3" fill="#222"/>
<rect x="1039" y="217" width="1" height="3" fill="#3a3a3a"/>
<rect x="1039" y="413" width="1" height="3" fill="#3a3a3a"/>
<rect x="1039" y="687" width="1" height="3" fill="#3a3a3a"/>
<rect x="1040" y="506" width="1" height="3" fill="#222"/>
</g>
<text x="218.4" y="733.5" text-anchor="middle">03:00</text>
<text x="218.4" y="748.5" text-anchor="middle">18.24</text>
<text x="218.4" y="763.5" text-anchor="middle">38.75</text>
<text x="218.4" y="778.5" text-anchor="middle">98.24</text>
<text x="341.4" y="733.5" text-anchor="middle">06:00</text>
<text x="341.4" y="748.5" text-anchor="middle">18.30</text>
<text x="341.4" y="763.5" text-anchor="middle">38.45</text>
<text x="341.4" y="778.5" text-anchor="middle">97.30</text>
<text x="464.4" y="733.5" text-anchor="middle">09:00</text>
<text x="464.4" y="748.5" text-anchor="middle">18.36</text>
<text x="464.4" y="763.5" text-anchor="middle">38.15</text>
<text x="464.4" y="778.5" text-anchor="middle">96.30</text>
<text x="587.4" y="733.5" text-anchor="middle">12:00</text>
<text x="587.4" y="748.5" text-anchor="middle">18.42</text>
<text x="587.4" y="763.5" text-anchor="middle">37.83</text>
<text x="587.4" y="778.5" text-anchor="middle">95.24</text>
<text x="710.4" y="733.5" text-anchor="middle">15:00</text>
<text x="710.4" y="748.5" text-anchor="middle">18.48</text>
<text x="710.4" y="763.5" text-anchor="middle">37.51</text>
<text x="710.4" y="778.5" text-anchor="middle">94.14</text>
<text x="833.4" y="733.5" text-anchor="middle">18:00</text>
<text x="833.4" y="748.5" text-anchor="middle">18.54</text>
<text x="833.4" y="763.5" text-anchor="middle">37.17</text>
<text x="833.4" y="778.5" text-anchor="middle">92.98</text>
<text x="956.4" y="733.5" text-anchor="middle">21:00</text>
<text x="956.4" y="748.5" text-anchor="middle">18.60</text>
<text x="956.4" y="763.5" text-anchor="middle">36.82</text>
<text x="956.4" y="778.5" text-anchor="middle">91.77</text>
<text x="1080.4" y="733.5" text-anchor="middle">00:00</text>
<text x="1080.4" y="748.5" text-anchor="middle">18.67</text>
<text x="1080.4" y="763.5" text-anchor="middle">36.46</text>
<text x="1080.4" y="778.5" text-anchor="middle">90.50</text>
<text x="59.5" y="748.5" text-anchor="end" textLength="43" lengthAdjust="spacingAndGlyphs">LT (hrs)</text>
<text x="59.5" y="763.5" text-anchor="end">Rs</text>
<text x="59.5" y="778.5" text-anchor="end" textLength="46.5" lengthAdjust="spacingAndGlyphs">Dipole L</text>
<text x="29.4" y="707.7" textLength="49.6" lengthAdjust="spacingAndGlyphs">Sunlight?</text>
<g shape-rendering="crispEdges" fill="#222">
<rect x="91" y="213" width="4" height="1" fill="#222"/>
<rect x="91" y="200" width="4" height="1" fill="#222"/>
<rect x="91" y="191" width="4" height="1" fill="#222"/>
<rect x="91" y="183" width="4" height="1" fill="#222"/>
<rect x="91" y="177" width="4" height="1" fill="#222"/>
<rect x="91" y="171" width="4" height="1" fill="#222"/>
<rect x="91" y="166" width="4" height="1" fill="#222"/>
<rect x="87" y="162" width="8" height="1" fill="#222"/>
<rect x="91" y="132" width="4" height="1" fill="#222"/>
<rect x="91" y="115" width="4" height="1" fill="#222"/>
<rect x="91" y="103" width="4" height="1" fill="#222"/>
<rect x="91" y="93" width="4" height="1" fill="#222"/>
<rect x="91" y="85" width="4" height="1" fill="#222"/>
<rect x="91" y="79" width="4" height="1" fill="#222"/>
<rect x="91" y="73" width="4" height="1" fill="#222"/>
<rect x="91" y="68" width="4" height="1" fill="#222"/>
<rect x="87" y="64" width="8" height="1" fill="#222"/>
<rect x="91" y="34" width="4" height="1" fill="#222"/>
<rect x="91" y="407" width="4" height="1" fill="#222"/>
<rect x="91" y="391" width="4" height="1" fill="#222"/>
<rect x="91" y="379" width="4" height="1" fill="#222"/>
<rect x="91" y="368" width="4" height="1" fill="#222"/>
<rect x="91" y="360" width="4" height="1" fill="#222"/>
<rect x="91" y="352" width="4" height="1" fill="#222"/>
<rect x="91" y="345" width="4" height="1" fill="#222"/>
<rect x="87" y="339" width="8" height="1" fill="#222"/>
<rect x="91" y="334" width="4" height="1" fill="#222"/>
<rect x="91" y="329" width="4" height="1" fill="#222"/>
<rect x="91" y="325" width="4" height="1" fill="#222"/>
<rect x="91" y="320" width="4" height="1" fill="#222"/>
<rect x="91" y="317" width="4" height="1" fill="#222"/>
<rect x="91" y="313" width="4" height="1" fill="#222"/>
<rect x="91" y="309" width="4" height="1" fill="#222"/>
<rect x="91" y="306" width="4" height="1" fill="#222"/>
<rect x="91" y="303" width="4" height="1" fill="#222"/>
<rect x="87" y="300" width="8" height="1" fill="#222"/>
<rect x="91" y="298" width="4" height="1" fill="#222"/>
<rect x="91" y="295" width="4" height="1" fill="#222"/>
<rect x="91" y="292" width="4" height="1" fill="#222"/>
<rect x="91" y="290" width="4" height="1" fill="#222"/>
<rect x="91" y="288" width="4" height="1" fill="#222"/>
<rect x="91" y="285" width="4" height="1" fill="#222"/>
<rect x="91" y="283" width="4" height="1" fill="#222"/>
<rect x="91" y="281" width="4" height="1" fill="#222"/>
<rect x="91" y="279" width="4" height="1" fill="#222"/>
<rect x="87" y="277" width="8" height="1" fill="#222"/>
<rect x="91" y="276" width="4" height="1" fill="#222"/>
<rect x="91" y="274" width="4" height="1" fill="#222"/>
<rect x="91" y="272" width="4" height="1" fill="#222"/>
<rect x="91" y="270" width="4" height="1" fill="#222"/>
<rect x="91" y="269" width="4" height="1" fill="#222"/>
<rect x="91" y="267" width="4" height="1" fill="#222"/>
<rect x="91" y="266" width="4" height="1" fill="#222"/>
<rect x="91" y="264" width="4" height="1" fill="#222"/>
<rect x="91" y="263" width="4" height="1" fill="#222"/>
<rect x="87" y="261" width="8" height="1" fill="#222"/>
<rect x="91" y="260" width="4" height="1" fill="#222"/>
<rect x="91" y="258" width="4" height="1" fill="#222"/>
<rect x="91" y="257" width="4" height="1" fill="#222"/>
<rect x="91" y="256" width="4" height="1" fill="#222"/>
<rect x="91" y="254" width="4" height="1" fill="#222"/>
<rect x="91" y="253" width="4" height="1" fill="#222"/>
<rect x="91" y="252" width="4" height="1" fill="#222"/>
<rect x="91" y="251" width="4" height="1" fill="#222"/>
<rect x="91" y="250" width="4" height="1" fill="#222"/>
<rect x="87" y="249" width="8" height="1" fill="#222"/>
<rect x="91" y="247" width="4" height="1" fill="#222"/>
<rect x="91" y="246" width="4" height="1" fill="#222"/>
<rect x="91" y="245" width="4" height="1" fill="#222"/>
<rect x="91" y="244" width="4" height="1" fill="#222"/>
<rect x="91" y="243" width="4" height="1" fill="#222"/>
<rect x="91" y="242" width="4" height="1" fill="#222"/>
<rect x="91" y="241" width="4" height="1" fill="#222"/>
<rect x="91" y="240" width="4" height="1" fill="#222"/>
<rect x="91" y="239" width="4" height="1" fill="#222"/>
<rect x="87" y="238" width="8" height="1" fill="#222"/>
<rect x="91" y="237" width="4" height="1" fill="#222"/>
<rect x="91" y="236" width="4" height="1" fill="#222"/>
<rect x="91" y="235" width="4" height="1" fill="#222"/>
<rect x="91" y="235" width="4" height="1" fill="#222"/>
<rect x="91" y="234" width="4" height="1" fill="#222"/>
<rect x="91" y="233" width="4" height="1" fill="#222"/>
<rect x="91" y="232" width="4" height="1" fill="#222"/>
<rect x="91" y="231" width="4" height="1" fill="#222"/>
<rect x="91" y="230" width="4" height="1" fill="#222"/>
<rect x="87" y="230" width="8" height="1" fill="#222"/>
<rect x="91" y="229" width="4" height="1" fill="#222"/>
<rect x="91" y="228" width="4" height="1" fill="#222"/>
<rect x="91" y="227" width="4" height="1" fill="#222"/>
<rect x="91" y="226" width="4" height="1" fill="#222"/>
<rect x="91" y="226" width="4" height="1" fill="#222"/>
<rect x="91" y="509" width="4" height="1" fill="#222"/>
<rect x="91" y="507" width="4" height="1" fill="#222"/>
<rect x="91" y="506" width="4" height="1" fill="#222"/>
<rect x="91" y="504" width="4" height="1" fill="#222"/>
<rect x="91" y="503" width="4" height="1" fill="#222"/>
<rect x="87" y="502" width="8" height="1" fill="#222"/>
<rect x="91" y="496" width="4" height="1" fill="#222"/>
<rect x="91" y="492" width="4" height="1" fill="#222"/>
<rect x="91" y="489" width="4" height="1" fill="#222"/>
<rect x="91" y="487" width="4" height="1" fill="#222"/>
<rect x="91" y="485" width="4" height="1" fill="#222"/>
<rect x="91" y="484" width="4" height="1" fill="#222"/>
<rect x="91" y="482" width="4" height="1" fill="#222"/>
<rect x="91" y="481" width="4" height="1" fill="#222"/>
<rect x="87" y="480" width="8" height="1" fill="#222"/>
<rect x="91" y="474" width="4" height="1" fill="#222"/>
<rect x="91" y="470" width="4" height="1" fill="#222"/>
<rect x="91" y="467" width="4" height="1" fill="#222"/>
<rect x="91" y="465" width="4" height="1" fill="#222"/>
<rect x="91" y="463" width="4" height="1" fill="#222"/>
<rect x="91" y="462" width="4" height="1" fill="#222"/>
<rect x="91" y="460" width="4" height="1" fill="#222"/>
<rect x="91" y="459" width="4" height="1" fill="#222"/>
<rect x="87" y="458" width="8" height="1" fill="#222"/>
<rect x="91" y="452" width="4" height="1" fill="#222"/>
<rect x="91" y="448" width="4" height="1" fill="#222"/>
<rect x="91" y="445" width="4" height="1" fill="#222"/>
<rect x="91" y="443" width="4" height="1" fill="#222"/>
<rect x="91" y="441" width="4" height="1" fill="#222"/>
<rect x="91" y="440" width="4" height="1" fill="#222"/>
<rect x="91" y="438" width="4" height="1" fill="#222"/>
<rect x="91" y="437" width="4" height="1" fill="#222"/>
<rect x="87" y="436" width="8" height="1" fill="#222"/>
<rect x="91" y="430" width="4" height="1" fill="#222"/>
<rect x="91" y="426" width="4" height="1" fill="#222"/>
<rect x="91" y="423" width="4" height="1" fill="#222"/>
<rect x="91" y="421" width="4" height="1" fill="#222"/>
<rect x="91" y="686" width="4" height="1" fill="#222"/>
<rect x="91" y="680" width="4" height="1" fill="#222"/>
<rect x="91" y="675" width="4" height="1" fill="#222"/>
<rect x="91" y="671" width="4" height="1" fill="#222"/>
<rect x="91" y="667" width="4" height="1" fill="#222"/>
<rect x="91" y="664" width="4" height="1" fill="#222"/>
<rect x="91" y="661" width="4" height="1" fill="#222"/>
<rect x="87" y="659" width="8" height="1" fill="#222"/>
<rect x="91" y="643" width="4" height="1" fill="#222"/>
<rect x="91" y="634" width="4" height="1" fill="#222"/>
<rect x="91" y="628" width="4" height="1" fill="#222"/>
<rect x="91" y="622" width="4" height="1" fill="#222"/>
<rect x="91" y="618" width="4" height="1" fill="#222"/>
<rect x="91" y="615" width="4" height="1" fill="#222"/>
<rect x="91" y="612" width="4" height="1" fill="#222"/>
<rect x="91" y="609" width="4" height="1" fill="#222"/>
<rect x="87" y="607" width="8" height="1" fill="#222"/>
<rect x="91" y="591" width="4" height="1" fill="#222"/>
<rect x="91" y="582" width="4" height="1" fill="#222"/>
<rect x="91" y="575" width="4" height="1" fill="#222"/>
<rect x="91" y="570" width="4" height="1" fill="#222"/>
<rect x="91" y="566" width="4" height="1" fill="#222"/>
<rect x="91" y="562" width="4" height="1" fill="#222"/>
<rect x="91" y="559" width="4" height="1" fill="#222"/>
<rect x="91" y="557" width="4" height="1" fill="#222"/>
<rect x="87" y="554" width="8" height="1" fill="#222"/>
<rect x="91" y="539" width="4" height="1" fill="#222"/>
<rect x="91" y="529" width="4" height="1" fill="#222"/>
<rect x="91" y="523" width="4" height="1" fill="#222"/>
<rect x="91" y="518" width="4" height="1" fill="#222"/>
<rect x="91" y="514" width="4" height="1" fill="#222"/>
</g>
<text x="59.50" y="71.40">10</text>
<text x="75.37" y="65.40">2</text>
<text x="59.50" y="169.10">10</text>
<text x="75.37" y="163.10">1</text>
<text x="49" y="124.2" text-anchor="middle" textLength="72" lengthAdjust="spacingAndGlyphs" transform="rotate(-90 49 124.2)">Energy (keV)</text>
<text x="81.6" y="233.4" text-anchor="end">700.</text>
<text x="81.6" y="242.2" text-anchor="end">600.</text>
<text x="81.6" y="252.5" text-anchor="end">500.</text>
<text x="81.6" y="265" text-anchor="end">400.</text>
<text x="81.6" y="281.4" text-anchor="end">300.</text>
<text x="81.6" y="304.4" text-anchor="end">200.</text>
<text x="81.6" y="343.6" text-anchor="end">100.</text>
<text x="45.2" y="320.2" text-anchor="middle" textLength="71.6" lengthAdjust="spacingAndGlyphs" transform="rotate(-90 45.2 320.2)">Energy (keV)</text>
<text x="52.80" y="443.90">10</text>
<text x="68.87" y="437.90"><tspan textLength="6.5" lengthAdjust="spacingAndGlyphs">-</tspan>9</text>
<text x="45.17" y="465.90">10</text>
<text x="61.24" y="459.90"><tspan textLength="6.5" lengthAdjust="spacingAndGlyphs">-</tspan>10</text>
<text x="45.17" y="487.90">10</text>
<text x="61.24" y="481.90"><tspan textLength="6.5" lengthAdjust="spacingAndGlyphs">-</tspan>11</text>
<text x="45.17" y="509.90">10</text>
<text x="61.24" y="503.90"><tspan textLength="6.5" lengthAdjust="spacingAndGlyphs">-</tspan>12</text>
<text x="34" y="466" text-anchor="middle" textLength="68" lengthAdjust="spacingAndGlyphs" transform="rotate(-90 34 466)">P dyn/cm^2</text>
<text x="59.50" y="561.90">10</text>
<text x="75.37" y="555.90">4</text>
<text x="59.50" y="614.10">10</text>
<text x="75.37" y="608.10">3</text>
<text x="59.50" y="666.80">10</text>
<text x="75.37" y="660.80">2</text>
<text x="49.4" y="602.3" text-anchor="middle" textLength="72" lengthAdjust="spacingAndGlyphs" transform="rotate(-90 49.4 602.3)">Energy (keV)</text>
<g shape-rendering="crispEdges">
<rect x="1092" y="30" width="12" height="191" fill="url(#cb)"/>
<rect x="1092" y="220" width="12" height="1" fill="#000010"/>
<rect x="1104" y="29" width="1" height="192" fill="#262a2e"/>
<rect x="1104" y="29" width="9" height="1" fill="#262a2e"/>
<rect x="1104" y="87" width="9" height="1" fill="#262a2e"/>
<rect x="1104" y="145" width="9" height="1" fill="#262a2e"/>
<rect x="1104" y="202" width="9" height="1" fill="#262a2e"/>
<rect x="1104" y="69" width="5" height="1" fill="#262a2e"/>
<rect x="1104" y="59" width="5" height="1" fill="#262a2e"/>
<rect x="1104" y="52" width="5" height="1" fill="#262a2e"/>
<rect x="1104" y="46" width="5" height="1" fill="#262a2e"/>
<rect x="1104" y="42" width="5" height="1" fill="#262a2e"/>
<rect x="1104" y="38" width="5" height="1" fill="#262a2e"/>
<rect x="1104" y="34" width="5" height="1" fill="#262a2e"/>
<rect x="1104" y="31" width="5" height="1" fill="#262a2e"/>
<rect x="1104" y="127" width="5" height="1" fill="#262a2e"/>
<rect x="1104" y="117" width="5" height="1" fill="#262a2e"/>
<rect x="1104" y="110" width="5" height="1" fill="#262a2e"/>
<rect x="1104" y="104" width="5" height="1" fill="#262a2e"/>
<rect x="1104" y="99" width="5" height="1" fill="#262a2e"/>
<rect x="1104" y="96" width="5" height="1" fill="#262a2e"/>
<rect x="1104" y="92" width="5" height="1" fill="#262a2e"/>
<rect x="1104" y="89" width="5" height="1" fill="#262a2e"/>
<rect x="1104" y="185" width="5" height="1" fill="#262a2e"/>
<rect x="1104" y="175" width="5" height="1" fill="#262a2e"/>
<rect x="1104" y="168" width="5" height="1" fill="#262a2e"/>
<rect x="1104" y="162" width="5" height="1" fill="#262a2e"/>
<rect x="1104" y="157" width="5" height="1" fill="#262a2e"/>
<rect x="1104" y="153" width="5" height="1" fill="#262a2e"/>
<rect x="1104" y="150" width="5" height="1" fill="#262a2e"/>
<rect x="1104" y="147" width="5" height="1" fill="#262a2e"/>
<rect x="1104" y="220" width="5" height="1" fill="#262a2e"/>
<rect x="1104" y="215" width="5" height="1" fill="#262a2e"/>
<rect x="1104" y="211" width="5" height="1" fill="#262a2e"/>
<rect x="1104" y="208" width="5" height="1" fill="#262a2e"/>
<rect x="1104" y="205" width="5" height="1" fill="#262a2e"/>
</g>
<text x="1116.3" y="37.1">10</text>
<text x="1132.47" y="31.1"><tspan textLength="6.5" lengthAdjust="spacingAndGlyphs">-</tspan>9</text>
<text x="1116.3" y="94.5">10</text>
<text x="1132.47" y="88.5"><tspan textLength="6.5" lengthAdjust="spacingAndGlyphs">-</tspan>10</text>
<text x="1116.3" y="152.4">10</text>
<text x="1132.47" y="146.4"><tspan textLength="6.5" lengthAdjust="spacingAndGlyphs">-</tspan>11</text>
<text x="1116.3" y="210.3">10</text>
<text x="1132.47" y="204.3"><tspan textLength="6.5" lengthAdjust="spacingAndGlyphs">-</tspan>12</text>
<g shape-rendering="crispEdges">
<rect x="1092" y="226" width="12" height="191" fill="url(#cb)"/>
<rect x="1092" y="416" width="12" height="1" fill="#000010"/>
<rect x="1104" y="225" width="1" height="192" fill="#262a2e"/>
<rect x="1104" y="225" width="9" height="1" fill="#262a2e"/>
<rect x="1104" y="283" width="9" height="1" fill="#262a2e"/>
<rect x="1104" y="341" width="9" height="1" fill="#262a2e"/>
<rect x="1104" y="398" width="9" height="1" fill="#262a2e"/>
<rect x="1104" y="265" width="5" height="1" fill="#262a2e"/>
<rect x="1104" y="255" width="5" height="1" fill="#262a2e"/>
<rect x="1104" y="248" width="5" height="1" fill="#262a2e"/>
<rect x="1104" y="242" width="5" height="1" fill="#262a2e"/>
<rect x="1104" y="238" width="5" height="1" fill="#262a2e"/>
<rect x="1104" y="234" width="5" height="1" fill="#262a2e"/>
<rect x="1104" y="230" width="5" height="1" fill="#262a2e"/>
<rect x="1104" y="227" width="5" height="1" fill="#262a2e"/>
<rect x="1104" y="323" width="5" height="1" fill="#262a2e"/>
<rect x="1104" y="313" width="5" height="1" fill="#262a2e"/>
<rect x="1104" y="306" width="5" height="1" fill="#262a2e"/>
<rect x="1104" y="300" width="5" height="1" fill="#262a2e"/>
<rect x="1104" y="295" width="5" height="1" fill="#262a2e"/>
<rect x="1104" y="292" width="5" height="1" fill="#262a2e"/>
<rect x="1104" y="288" width="5" height="1" fill="#262a2e"/>
<rect x="1104" y="285" width="5" height="1" fill="#262a2e"/>
<rect x="1104" y="381" width="5" height="1" fill="#262a2e"/>
<rect x="1104" y="371" width="5" height="1" fill="#262a2e"/>
<rect x="1104" y="364" width="5" height="1" fill="#262a2e"/>
<rect x="1104" y="358" width="5" height="1" fill="#262a2e"/>
<rect x="1104" y="353" width="5" height="1" fill="#262a2e"/>
<rect x="1104" y="349" width="5" height="1" fill="#262a2e"/>
<rect x="1104" y="346" width="5" height="1" fill="#262a2e"/>
<rect x="1104" y="343" width="5" height="1" fill="#262a2e"/>
<rect x="1104" y="416" width="5" height="1" fill="#262a2e"/>
<rect x="1104" y="411" width="5" height="1" fill="#262a2e"/>
<rect x="1104" y="407" width="5" height="1" fill="#262a2e"/>
<rect x="1104" y="404" width="5" height="1" fill="#262a2e"/>
<rect x="1104" y="401" width="5" height="1" fill="#262a2e"/>
</g>
<text x="1116.3" y="233.1">10</text>
<text x="1132.47" y="227.1"><tspan textLength="6.5" lengthAdjust="spacingAndGlyphs">-</tspan>9</text>
<text x="1116.3" y="290.5">10</text>
<text x="1132.47" y="284.5"><tspan textLength="6.5" lengthAdjust="spacingAndGlyphs">-</tspan>10</text>
<text x="1116.3" y="348.4">10</text>
<text x="1132.47" y="342.4"><tspan textLength="6.5" lengthAdjust="spacingAndGlyphs">-</tspan>11</text>
<text x="1116.3" y="406.3">10</text>
<text x="1132.47" y="400.3"><tspan textLength="6.5" lengthAdjust="spacingAndGlyphs">-</tspan>12</text>
<g shape-rendering="crispEdges">
<rect x="1092" y="515" width="12" height="177" fill="url(#cb)"/>
<rect x="1092" y="691" width="12" height="1" fill="#000010"/>
<rect x="1104" y="515" width="1" height="177" fill="#262a2e"/>
<rect x="1104" y="515" width="9" height="1" fill="#262a2e"/>
<rect x="1104" y="554" width="9" height="1" fill="#262a2e"/>
<rect x="1104" y="593" width="9" height="1" fill="#262a2e"/>
<rect x="1104" y="632" width="9" height="1" fill="#262a2e"/>
<rect x="1104" y="671" width="9" height="1" fill="#262a2e"/>
<rect x="1104" y="535" width="5" height="1" fill="#262a2e"/>
<rect x="1104" y="574" width="5" height="1" fill="#262a2e"/>
<rect x="1104" y="613" width="5" height="1" fill="#262a2e"/>
<rect x="1104" y="652" width="5" height="1" fill="#262a2e"/>
<rect x="1104" y="691" width="5" height="1" fill="#262a2e"/>
</g>
<text x="1116.3" y="522.9">10</text>
<text x="1132.17" y="516.9">4</text>
<text x="1116.3" y="561.9">10</text>
<text x="1132.17" y="555.9">2</text>
<text x="1116.3" y="600.9">10</text>
<text x="1132.17" y="594.9">0</text>
<text x="1116.3" y="639.9">10</text>
<text x="1132.47" y="633.9"><tspan textLength="6.5" lengthAdjust="spacingAndGlyphs">-</tspan>2</text>
<text x="1116.3" y="679.1">10</text>
<text x="1132.47" y="673.1"><tspan textLength="6.5" lengthAdjust="spacingAndGlyphs">-</tspan>4</text>
<text x="1165.5" y="123.5" text-anchor="middle" textLength="121" lengthAdjust="spacingAndGlyphs" transform="rotate(90 1165.5 123.5)">pressure dyne/cm^2</text>
<text x="1165.5" y="320" text-anchor="middle" textLength="121" lengthAdjust="spacingAndGlyphs" transform="rotate(90 1165.5 320)">pressure dyne/cm^2</text>
<text x="1156.8" y="602" text-anchor="middle" textLength="168" lengthAdjust="spacingAndGlyphs" transform="rotate(90 1156.8 602)">intensity 1/(s cm^2 ster keV)</text>
<line x1="1091" y1="427.3" x2="1103" y2="431.6" stroke="#0000ff" stroke-width="1.3"/>
<text x="1107.5" y="433.7" textLength="53" lengthAdjust="spacingAndGlyphs">CHEMS-P</text>
<line x1="1091" y1="444.3" x2="1103" y2="448.6" stroke="#ff0000" stroke-width="1.3"/>
<text x="1107.5" y="450.7" textLength="52" lengthAdjust="spacingAndGlyphs">LEMMS-P</text>
<line x1="1091" y1="461.3" x2="1103" y2="465.6" stroke="#00f000" stroke-width="1.3"/>
<text x="1107.5" y="467.7" textLength="55" lengthAdjust="spacingAndGlyphs">CHEMS-O</text>
<rect x="215.5" y="802.5" width="151" height="147.5" fill="none" stroke="#111" stroke-width="1" shape-rendering="crispEdges"/>
<g shape-rendering="crispEdges">
<rect x="207" y="803" width="8" height="1" fill="#222"/>
<rect x="211" y="805" width="4" height="1" fill="#222"/>
<rect x="211" y="807" width="4" height="1" fill="#222"/>
<rect x="211" y="808" width="4" height="1" fill="#222"/>
<rect x="211" y="810" width="4" height="1" fill="#222"/>
<rect x="211" y="812" width="4" height="1" fill="#222"/>
<rect x="211" y="814" width="4" height="1" fill="#222"/>
<rect x="211" y="816" width="4" height="1" fill="#222"/>
<rect x="211" y="818" width="4" height="1" fill="#222"/>
<rect x="211" y="819" width="4" height="1" fill="#222"/>
<rect x="207" y="821" width="8" height="1" fill="#222"/>
<rect x="211" y="823" width="4" height="1" fill="#222"/>
<rect x="211" y="825" width="4" height="1" fill="#222"/>
<rect x="211" y="827" width="4" height="1" fill="#222"/>
<rect x="211" y="829" width="4" height="1" fill="#222"/>
<rect x="211" y="830" width="4" height="1" fill="#222"/>
<rect x="211" y="832" width="4" height="1" fill="#222"/>
<rect x="211" y="834" width="4" height="1" fill="#222"/>
<rect x="211" y="836" width="4" height="1" fill="#222"/>
<rect x="211" y="838" width="4" height="1" fill="#222"/>
<rect x="207" y="839" width="8" height="1" fill="#222"/>
<rect x="211" y="841" width="4" height="1" fill="#222"/>
<rect x="211" y="843" width="4" height="1" fill="#222"/>
<rect x="211" y="845" width="4" height="1" fill="#222"/>
<rect x="211" y="847" width="4" height="1" fill="#222"/>
<rect x="211" y="849" width="4" height="1" fill="#222"/>
<rect x="211" y="850" width="4" height="1" fill="#222"/>
<rect x="211" y="852" width="4" height="1" fill="#222"/>
<rect x="211" y="854" width="4" height="1" fill="#222"/>
<rect x="211" y="856" width="4" height="1" fill="#222"/>
<rect x="207" y="858" width="8" height="1" fill="#222"/>
<rect x="211" y="860" width="4" height="1" fill="#222"/>
<rect x="211" y="861" width="4" height="1" fill="#222"/>
<rect x="211" y="863" width="4" height="1" fill="#222"/>
<rect x="211" y="865" width="4" height="1" fill="#222"/>
<rect x="211" y="867" width="4" height="1" fill="#222"/>
<rect x="211" y="869" width="4" height="1" fill="#222"/>
<rect x="211" y="870" width="4" height="1" fill="#222"/>
<rect x="211" y="872" width="4" height="1" fill="#222"/>
<rect x="211" y="874" width="4" height="1" fill="#222"/>
<rect x="207" y="876" width="8" height="1" fill="#222"/>
<rect x="211" y="878" width="4" height="1" fill="#222"/>
<rect x="211" y="880" width="4" height="1" fill="#222"/>
<rect x="211" y="881" width="4" height="1" fill="#222"/>
<rect x="211" y="883" width="4" height="1" fill="#222"/>
<rect x="211" y="885" width="4" height="1" fill="#222"/>
<rect x="211" y="887" width="4" height="1" fill="#222"/>
<rect x="211" y="889" width="4" height="1" fill="#222"/>
<rect x="211" y="890" width="4" height="1" fill="#222"/>
<rect x="211" y="892" width="4" height="1" fill="#222"/>
<rect x="207" y="894" width="8" height="1" fill="#222"/>
<rect x="211" y="896" width="4" height="1" fill="#222"/>
<rect x="211" y="898" width="4" height="1" fill="#222"/>
<rect x="211" y="900" width="4" height="1" fill="#222"/>
<rect x="211" y="901" width="4" height="1" fill="#222"/>
<rect x="211" y="903" width="4" height="1" fill="#222"/>
<rect x="211" y="905" width="4" height="1" fill="#222"/>
<rect x="211" y="907" width="4" height="1" fill="#222"/>
<rect x="211" y="909" width="4" height="1" fill="#222"/>
<rect x="211" y="911" width="4" height="1" fill="#222"/>
<rect x="207" y="912" width="8" height="1" fill="#222"/>
<rect x="211" y="914" width="4" height="1" fill="#222"/>
<rect x="211" y="916" width="4" height="1" fill="#222"/>
<rect x="211" y="918" width="4" height="1" fill="#222"/>
<rect x="211" y="920" width="4" height="1" fill="#222"/>
<rect x="211" y="921" width="4" height="1" fill="#222"/>
<rect x="211" y="923" width="4" height="1" fill="#222"/>
<rect x="211" y="925" width="4" height="1" fill="#222"/>
<rect x="211" y="927" width="4" height="1" fill="#222"/>
<rect x="211" y="929" width="4" height="1" fill="#222"/>
<rect x="207" y="931" width="8" height="1" fill="#222"/>
<rect x="211" y="932" width="4" height="1" fill="#222"/>
<rect x="211" y="934" width="4" height="1" fill="#222"/>
<rect x="211" y="936" width="4" height="1" fill="#222"/>
<rect x="211" y="938" width="4" height="1" fill="#222"/>
<rect x="211" y="940" width="4" height="1" fill="#222"/>
<rect x="211" y="941" width="4" height="1" fill="#222"/>
<rect x="211" y="943" width="4" height="1" fill="#222"/>
<rect x="211" y="945" width="4" height="1" fill="#222"/>
<rect x="211" y="947" width="4" height="1" fill="#222"/>
<rect x="207" y="949" width="8" height="1" fill="#222"/>
<rect x="366" y="950" width="1" height="9" fill="#222"/>
<rect x="347" y="950" width="1" height="5" fill="#222"/>
<rect x="329" y="950" width="1" height="9" fill="#222"/>
<rect x="310" y="950" width="1" height="5" fill="#222"/>
<rect x="291" y="950" width="1" height="9" fill="#222"/>
<rect x="272" y="950" width="1" height="5" fill="#222"/>
<rect x="253" y="950" width="1" height="9" fill="#222"/>
<rect x="234" y="950" width="1" height="5" fill="#222"/>
<rect x="216" y="950" width="1" height="9" fill="#222"/>
</g>
<text x="202.1" y="807.42" text-anchor="end"><tspan textLength="6.5" lengthAdjust="spacingAndGlyphs">-</tspan>40.</text>
<text x="202.1" y="825.64" text-anchor="end"><tspan textLength="6.5" lengthAdjust="spacingAndGlyphs">-</tspan>30.</text>
<text x="202.1" y="843.86" text-anchor="end"><tspan textLength="6.5" lengthAdjust="spacingAndGlyphs">-</tspan>20.</text>
<text x="202.1" y="862.08" text-anchor="end"><tspan textLength="6.5" lengthAdjust="spacingAndGlyphs">-</tspan>10.</text>
<text x="202.1" y="880.3" text-anchor="end">0.</text>
<text x="202.1" y="898.52" text-anchor="end">10.</text>
<text x="202.1" y="916.74" text-anchor="end">20.</text>
<text x="202.1" y="934.96" text-anchor="end">30.</text>
<text x="202.1" y="953.18" text-anchor="end">40.</text>
<text x="366.52" y="973.3" text-anchor="middle"><tspan textLength="6.5" lengthAdjust="spacingAndGlyphs">-</tspan>40.</text>
<text x="328.86" y="973.3" text-anchor="middle"><tspan textLength="6.5" lengthAdjust="spacingAndGlyphs">-</tspan>20.</text>
<text x="291.2" y="973.3" text-anchor="middle">0.</text>
<text x="253.54" y="973.3" text-anchor="middle">20.</text>
<text x="215.88" y="973.3" text-anchor="middle">40.</text>
<text x="290.8" y="991.4" text-anchor="middle" textLength="38" lengthAdjust="spacingAndGlyphs">KSM-X</text>
<text x="165.8" y="877.5" text-anchor="middle" textLength="36" lengthAdjust="spacingAndGlyphs" transform="rotate(-90 165.8 877.5)">KSM-Y</text>
<clipPath id="co1"><rect x="216" y="803.0" width="150" height="146.5"/></clipPath>
<g clip-path="url(#co1)" fill="none">
<path d="M253.1 796.2 L252.0 798.1 L250.9 799.9 L249.8 801.7 L248.7 803.5 L247.7 805.3 L246.6 807.2 L245.6 809.0 L244.7 810.8 L243.7 812.6 L242.8 814.5 L241.8 816.3 L240.9 818.1 L240.1 819.9 L239.2 821.7 L238.4 823.6 L237.6 825.4 L236.8 827.2 L236.0 829.0 L235.3 830.9 L234.6 832.7 L233.9 834.5 L233.2 836.3 L232.6 838.1 L231.9 840.0 L231.3 841.8 L230.8 843.6 L230.2 845.4 L229.7 847.2 L229.2 849.1 L228.7 850.9 L228.3 852.7 L227.9 854.5 L227.5 856.4 L227.1 858.2 L226.8 860.0 L226.5 861.8 L226.2 863.6 L226.0 865.5 L225.7 867.3 L225.6 869.1 L225.4 870.9 L225.3 872.8 L225.2 874.6 L225.2 876.4 L225.2 878.2 L225.3 880.0 L225.4 881.9 L225.6 883.7 L225.7 885.5 L226.0 887.3 L226.2 889.2 L226.5 891.0 L226.8 892.8 L227.1 894.6 L227.5 896.4 L227.9 898.3 L228.3 900.1 L228.7 901.9 L229.2 903.7 L229.7 905.6 L230.2 907.4 L230.8 909.2 L231.3 911.0 L231.9 912.8 L232.6 914.7 L233.2 916.5 L233.9 918.3 L234.6 920.1 L235.3 921.9 L236.0 923.8 L236.8 925.6 L237.6 927.4 L238.4 929.2 L239.2 931.1 L240.1 932.9 L240.9 934.7 L241.8 936.5 L242.8 938.3 L243.7 940.2 L244.7 942.0 L245.6 943.8 L246.6 945.6 L247.7 947.5 L248.7 949.3 L249.8 951.1 L250.9 952.9 L252.0 954.7 L253.1 956.6" stroke="#1a1aff" stroke-width="1" stroke-dasharray="2.5 1.5" fill="none"/>
<path d="M291.6 796.2 L289.6 798.1 L287.6 799.9 L285.7 801.7 L283.7 803.5 L281.9 805.3 L280.0 807.2 L278.2 809.0 L276.5 810.8 L274.8 812.6 L273.1 814.5 L271.5 816.3 L269.9 818.1 L268.3 819.9 L266.8 821.7 L265.3 823.6 L263.9 825.4 L262.5 827.2 L261.1 829.0 L259.8 830.9 L258.5 832.7 L257.3 834.5 L256.1 836.3 L254.9 838.1 L253.8 840.0 L252.7 841.8 L251.7 843.6 L250.8 845.4 L249.8 847.2 L248.9 849.1 L248.1 850.9 L247.3 852.7 L246.6 854.5 L245.9 856.4 L245.2 858.2 L244.6 860.0 L244.1 861.8 L243.6 863.6 L243.1 865.5 L242.7 867.3 L242.4 869.1 L242.2 870.9 L241.9 872.8 L241.8 874.6 L241.8 876.4 L241.8 878.2 L241.9 880.0 L242.2 881.9 L242.4 883.7 L242.7 885.5 L243.1 887.3 L243.6 889.2 L244.1 891.0 L244.6 892.8 L245.2 894.6 L245.9 896.4 L246.6 898.3 L247.3 900.1 L248.1 901.9 L248.9 903.7 L249.8 905.6 L250.8 907.4 L251.7 909.2 L252.7 911.0 L253.8 912.8 L254.9 914.7 L256.1 916.5 L257.3 918.3 L258.5 920.1 L259.8 921.9 L261.1 923.8 L262.5 925.6 L263.9 927.4 L265.3 929.2 L266.8 931.1 L268.3 932.9 L269.9 934.7 L271.5 936.5 L273.1 938.3 L274.8 940.2 L276.5 942.0 L278.2 943.8 L280.0 945.6 L281.9 947.5 L283.7 949.3 L285.7 951.1 L287.6 952.9 L289.6 954.7 L291.6 956.6" stroke="#8b4a12" stroke-width="1" stroke-dasharray="2.5 1.5" fill="none"/>
<ellipse cx="292.2" cy="877.8" rx="36.5" ry="37.3" stroke="#000" stroke-width="1.3"/>
<ellipse cx="291.6" cy="877.2" rx="1.8" ry="1.4" stroke="#000" stroke-width="1"/>
<path d="M314.2 898.3 L314.0 905.0 L313.0 912.0 L311.0 919.0 L308.0 925.0 L304.5 931.0 L300.0 936.0 L296.0 939.0 L292.0 941.0 L287.5 942.8 L283.0 944.0 L278.0 944.5 L272.2 944.5" stroke="#000" stroke-width="1.3" fill="none"/>
<line x1="299.3" y1="933.8" x2="293.2" y2="939.4" stroke="#1010ff" stroke-width="4" stroke-linecap="round"/>
<path d="M289.6 935.2 L297.8 943.2 M297.8 935.2 L289.6 943.2" stroke="#ff2020" stroke-width="1.3"/>
<circle cx="327.5" cy="868.4" r="2.6" fill="#ff0000"/>
</g>
<rect x="509.5" y="802.5" width="151" height="147.5" fill="none" stroke="#111" stroke-width="1" shape-rendering="crispEdges"/>
<g shape-rendering="crispEdges">
<rect x="501" y="949" width="8" height="1" fill="#222"/>
<rect x="505" y="947" width="4" height="1" fill="#222"/>
<rect x="505" y="945" width="4" height="1" fill="#222"/>
<rect x="505" y="943" width="4" height="1" fill="#222"/>
<rect x="505" y="941" width="4" height="1" fill="#222"/>
<rect x="505" y="940" width="4" height="1" fill="#222"/>
<rect x="505" y="938" width="4" height="1" fill="#222"/>
<rect x="505" y="936" width="4" height="1" fill="#222"/>
<rect x="505" y="934" width="4" height="1" fill="#222"/>
<rect x="505" y="932" width="4" height="1" fill="#222"/>
<rect x="501" y="931" width="8" height="1" fill="#222"/>
<rect x="505" y="929" width="4" height="1" fill="#222"/>
<rect x="505" y="927" width="4" height="1" fill="#222"/>
<rect x="505" y="925" width="4" height="1" fill="#222"/>
<rect x="505" y="923" width="4" height="1" fill="#222"/>
<rect x="505" y="921" width="4" height="1" fill="#222"/>
<rect x="505" y="920" width="4" height="1" fill="#222"/>
<rect x="505" y="918" width="4" height="1" fill="#222"/>
<rect x="505" y="916" width="4" height="1" fill="#222"/>
<rect x="505" y="914" width="4" height="1" fill="#222"/>
<rect x="501" y="912" width="8" height="1" fill="#222"/>
<rect x="505" y="911" width="4" height="1" fill="#222"/>
<rect x="505" y="909" width="4" height="1" fill="#222"/>
<rect x="505" y="907" width="4" height="1" fill="#222"/>
<rect x="505" y="905" width="4" height="1" fill="#222"/>
<rect x="505" y="903" width="4" height="1" fill="#222"/>
<rect x="505" y="901" width="4" height="1" fill="#222"/>
<rect x="505" y="900" width="4" height="1" fill="#222"/>
<rect x="505" y="898" width="4" height="1" fill="#222"/>
<rect x="505" y="896" width="4" height="1" fill="#222"/>
<rect x="501" y="894" width="8" height="1" fill="#222"/>
<rect x="505" y="892" width="4" height="1" fill="#222"/>
<rect x="505" y="890" width="4" height="1" fill="#222"/>
<rect x="505" y="889" width="4" height="1" fill="#222"/>
<rect x="505" y="887" width="4" height="1" fill="#222"/>
<rect x="505" y="885" width="4" height="1" fill="#222"/>
<rect x="505" y="883" width="4" height="1" fill="#222"/>
<rect x="505" y="881" width="4" height="1" fill="#222"/>
<rect x="505" y="880" width="4" height="1" fill="#222"/>
<rect x="505" y="878" width="4" height="1" fill="#222"/>
<rect x="501" y="876" width="8" height="1" fill="#222"/>
<rect x="505" y="874" width="4" height="1" fill="#222"/>
<rect x="505" y="872" width="4" height="1" fill="#222"/>
<rect x="505" y="870" width="4" height="1" fill="#222"/>
<rect x="505" y="869" width="4" height="1" fill="#222"/>
<rect x="505" y="867" width="4" height="1" fill="#222"/>
<rect x="505" y="865" width="4" height="1" fill="#222"/>
<rect x="505" y="863" width="4" height="1" fill="#222"/>
<rect x="505" y="861" width="4" height="1" fill="#222"/>
<rect x="505" y="860" width="4" height="1" fill="#222"/>
<rect x="501" y="858" width="8" height="1" fill="#222"/>
<rect x="505" y="856" width="4" height="1" fill="#222"/>
<rect x="505" y="854" width="4" height="1" fill="#222"/>
<rect x="505" y="852" width="4" height="1" fill="#222"/>
<rect x="505" y="850" width="4" height="1" fill="#222"/>
<rect x="505" y="849" width="4" height="1" fill="#222"/>
<rect x="505" y="847" width="4" height="1" fill="#222"/>
<rect x="505" y="845" width="4" height="1" fill="#222"/>
<rect x="505" y="843" width="4" height="1" fill="#222"/>
<rect x="505" y="841" width="4" height="1" fill="#222"/>
<rect x="501" y="839" width="8" height="1" fill="#222"/>
<rect x="505" y="838" width="4" height="1" fill="#222"/>
<rect x="505" y="836" width="4" height="1" fill="#222"/>
<rect x="505" y="834" width="4" height="1" fill="#222"/>
<rect x="505" y="832" width="4" height="1" fill="#222"/>
<rect x="505" y="830" width="4" height="1" fill="#222"/>
<rect x="505" y="829" width="4" height="1" fill="#222"/>
<rect x="505" y="827" width="4" height="1" fill="#222"/>
<rect x="505" y="825" width="4" height="1" fill="#222"/>
<rect x="505" y="823" width="4" height="1" fill="#222"/>
<rect x="501" y="821" width="8" height="1" fill="#222"/>
<rect x="505" y="819" width="4" height="1" fill="#222"/>
<rect x="505" y="818" width="4" height="1" fill="#222"/>
<rect x="505" y="816" width="4" height="1" fill="#222"/>
<rect x="505" y="814" width="4" height="1" fill="#222"/>
<rect x="505" y="812" width="4" height="1" fill="#222"/>
<rect x="505" y="810" width="4" height="1" fill="#222"/>
<rect x="505" y="808" width="4" height="1" fill="#222"/>
<rect x="505" y="807" width="4" height="1" fill="#222"/>
<rect x="505" y="805" width="4" height="1" fill="#222"/>
<rect x="501" y="803" width="8" height="1" fill="#222"/>
<rect x="660" y="950" width="1" height="9" fill="#222"/>
<rect x="641" y="950" width="1" height="5" fill="#222"/>
<rect x="623" y="950" width="1" height="9" fill="#222"/>
<rect x="604" y="950" width="1" height="5" fill="#222"/>
<rect x="585" y="950" width="1" height="9" fill="#222"/>
<rect x="566" y="950" width="1" height="5" fill="#222"/>
<rect x="547" y="950" width="1" height="9" fill="#222"/>
<rect x="528" y="950" width="1" height="5" fill="#222"/>
<rect x="510" y="950" width="1" height="9" fill="#222"/>
</g>
<text x="496.1" y="953.18" text-anchor="end"><tspan textLength="6.5" lengthAdjust="spacingAndGlyphs">-</tspan>40.</text>
<text x="496.1" y="934.96" text-anchor="end"><tspan textLength="6.5" lengthAdjust="spacingAndGlyphs">-</tspan>30.</text>
<text x="496.1" y="916.74" text-anchor="end"><tspan textLength="6.5" lengthAdjust="spacingAndGlyphs">-</tspan>20.</text>
<text x="496.1" y="898.52" text-anchor="end"><tspan textLength="6.5" lengthAdjust="spacingAndGlyphs">-</tspan>10.</text>
<text x="496.1" y="880.3" text-anchor="end">0.</text>
<text x="496.1" y="862.08" text-anchor="end">10.</text>
<text x="496.1" y="843.86" text-anchor="end">20.</text>
<text x="496.1" y="825.64" text-anchor="end">30.</text>
<text x="496.1" y="807.42" text-anchor="end">40.</text>
<text x="660.52" y="973.3" text-anchor="middle"><tspan textLength="6.5" lengthAdjust="spacingAndGlyphs">-</tspan>40.</text>
<text x="622.86" y="973.3" text-anchor="middle"><tspan textLength="6.5" lengthAdjust="spacingAndGlyphs">-</tspan>20.</text>
<text x="585.2" y="973.3" text-anchor="middle">0.</text>
<text x="547.54" y="973.3" text-anchor="middle">20.</text>
<text x="509.88" y="973.3" text-anchor="middle">40.</text>
<text x="584.8" y="991.4" text-anchor="middle" textLength="38" lengthAdjust="spacingAndGlyphs">KSM-X</text>
<text x="459.8" y="877.5" text-anchor="middle" textLength="36" lengthAdjust="spacingAndGlyphs" transform="rotate(-90 459.8 877.5)">KSM-Z</text>
<clipPath id="co2"><rect x="510" y="803.0" width="150" height="146.5"/></clipPath>
<g clip-path="url(#co2)" fill="none">
<path d="M547.5 956.6 L546.3 954.7 L545.2 952.9 L544.0 951.1 L542.9 949.3 L541.8 947.5 L540.8 945.6 L539.7 943.8 L538.7 942.0 L537.7 940.2 L536.7 938.3 L535.7 936.5 L534.8 934.7 L533.9 932.9 L533.0 931.1 L532.2 929.2 L531.3 927.4 L530.5 925.6 L529.7 923.8 L528.9 921.9 L528.2 920.1 L527.5 918.3 L526.8 916.5 L526.1 914.7 L525.5 912.8 L524.8 911.0 L524.2 909.2 L523.7 907.4 L523.1 905.6 L522.6 903.7 L522.1 901.9 L521.7 900.1 L521.2 898.3 L520.8 896.4 L520.4 894.6 L520.1 892.8 L519.8 891.0 L519.5 889.2 L519.2 887.3 L519.0 885.5 L518.8 883.7 L518.7 881.9 L518.5 880.0 L518.5 878.2 L518.4 876.4 L518.5 874.6 L518.5 872.8 L518.7 870.9 L518.8 869.1 L519.0 867.3 L519.2 865.5 L519.5 863.6 L519.8 861.8 L520.1 860.0 L520.4 858.2 L520.8 856.4 L521.2 854.5 L521.7 852.7 L522.1 850.9 L522.6 849.1 L523.1 847.2 L523.7 845.4 L524.2 843.6 L524.8 841.8 L525.5 840.0 L526.1 838.1 L526.8 836.3 L527.5 834.5 L528.2 832.7 L528.9 830.9 L529.7 829.0 L530.5 827.2 L531.3 825.4 L532.2 823.6 L533.0 821.7 L533.9 819.9 L534.8 818.1 L535.7 816.3 L536.7 814.5 L537.7 812.6 L538.7 810.8 L539.7 809.0 L540.8 807.2 L541.8 805.3 L542.9 803.5 L544.0 801.7 L545.2 799.9 L546.3 798.1 L547.5 796.2" stroke="#1a1aff" stroke-width="1" stroke-dasharray="2.5 1.5" fill="none"/>
<path d="M583.9 956.6 L581.9 954.7 L580.0 952.9 L578.1 951.1 L576.2 949.3 L574.4 947.5 L572.6 945.6 L570.9 943.8 L569.2 942.0 L567.5 940.2 L565.9 938.3 L564.3 936.5 L562.7 934.7 L561.2 932.9 L559.7 931.1 L558.3 929.2 L556.9 927.4 L555.5 925.6 L554.2 923.8 L552.9 921.9 L551.7 920.1 L550.5 918.3 L549.3 916.5 L548.2 914.7 L547.1 912.8 L546.1 911.0 L545.1 909.2 L544.1 907.4 L543.2 905.6 L542.4 903.7 L541.6 901.9 L540.8 900.1 L540.1 898.3 L539.4 896.4 L538.7 894.6 L538.2 892.8 L537.6 891.0 L537.2 889.2 L536.7 887.3 L536.3 885.5 L536.0 883.7 L535.8 881.9 L535.6 880.0 L535.4 878.2 L535.4 876.4 L535.4 874.6 L535.6 872.8 L535.8 870.9 L536.0 869.1 L536.3 867.3 L536.7 865.5 L537.2 863.6 L537.6 861.8 L538.2 860.0 L538.7 858.2 L539.4 856.4 L540.1 854.5 L540.8 852.7 L541.6 850.9 L542.4 849.1 L543.2 847.2 L544.1 845.4 L545.1 843.6 L546.1 841.8 L547.1 840.0 L548.2 838.1 L549.3 836.3 L550.5 834.5 L551.7 832.7 L552.9 830.9 L554.2 829.0 L555.5 827.2 L556.9 825.4 L558.3 823.6 L559.7 821.7 L561.2 819.9 L562.7 818.1 L564.3 816.3 L565.9 814.5 L567.5 812.6 L569.2 810.8 L570.9 809.0 L572.6 807.2 L574.4 805.3 L576.2 803.5 L578.1 801.7 L580.0 799.9 L581.9 798.1 L583.9 796.2" stroke="#8b4a12" stroke-width="1" stroke-dasharray="2.5 1.5" fill="none"/>
<line x1="549.2" y1="886.9" x2="621.7" y2="867.1" stroke="#000" stroke-width="2"/>
<ellipse cx="585.6" cy="877.2" rx="1.8" ry="1.4" stroke="#000" stroke-width="1"/>
<path d="M608.1 888.8 L607.8 892.0 L607.0 896.0 L605.5 900.5 L603.0 905.0 L600.0 908.3 L596.0 911.0 L592.0 913.0 L588.0 914.4 L583.0 915.2 L578.0 915.5 L566.2 915.5" stroke="#000" stroke-width="1.3" fill="none"/>
<line x1="593.7" y1="908.4" x2="588.6" y2="911.8" stroke="#1010ff" stroke-width="4" stroke-linecap="round"/>
<path d="M583.8 907.2 L592 915.2 M592 907.2 L583.8 915.2" stroke="#ff2020" stroke-width="1.3"/>
<circle cx="621.7" cy="867.1" r="2.6" fill="#ff0000"/>
</g>
<rect x="803.5" y="802.5" width="151" height="147.5" fill="none" stroke="#111" stroke-width="1" shape-rendering="crispEdges"/>
<g shape-rendering="crispEdges">
<rect x="795" y="949" width="8" height="1" fill="#222"/>
<rect x="799" y="947" width="4" height="1" fill="#222"/>
<rect x="799" y="945" width="4" height="1" fill="#222"/>
<rect x="799" y="943" width="4" height="1" fill="#222"/>
<rect x="799" y="941" width="4" height="1" fill="#222"/>
<rect x="799" y="940" width="4" height="1" fill="#222"/>
<rect x="799" y="938" width="4" height="1" fill="#222"/>
<rect x="799" y="936" width="4" height="1" fill="#222"/>
<rect x="799" y="934" width="4" height="1" fill="#222"/>
<rect x="799" y="932" width="4" height="1" fill="#222"/>
<rect x="795" y="931" width="8" height="1" fill="#222"/>
<rect x="799" y="929" width="4" height="1" fill="#222"/>
<rect x="799" y="927" width="4" height="1" fill="#222"/>
<rect x="799" y="925" width="4" height="1" fill="#222"/>
<rect x="799" y="923" width="4" height="1" fill="#222"/>
<rect x="799" y="921" width="4" height="1" fill="#222"/>
<rect x="799" y="920" width="4" height="1" fill="#222"/>
<rect x="799" y="918" width="4" height="1" fill="#222"/>
<rect x="799" y="916" width="4" height="1" fill="#222"/>
<rect x="799" y="914" width="4" height="1" fill="#222"/>
<rect x="795" y="912" width="8" height="1" fill="#222"/>
<rect x="799" y="911" width="4" height="1" fill="#222"/>
<rect x="799" y="909" width="4" height="1" fill="#222"/>
<rect x="799" y="907" width="4" height="1" fill="#222"/>
<rect x="799" y="905" width="4" height="1" fill="#222"/>
<rect x="799" y="903" width="4" height="1" fill="#222"/>
<rect x="799" y="901" width="4" height="1" fill="#222"/>
<rect x="799" y="900" width="4" height="1" fill="#222"/>
<rect x="799" y="898" width="4" height="1" fill="#222"/>
<rect x="799" y="896" width="4" height="1" fill="#222"/>
<rect x="795" y="894" width="8" height="1" fill="#222"/>
<rect x="799" y="892" width="4" height="1" fill="#222"/>
<rect x="799" y="890" width="4" height="1" fill="#222"/>
<rect x="799" y="889" width="4" height="1" fill="#222"/>
<rect x="799" y="887" width="4" height="1" fill="#222"/>
<rect x="799" y="885" width="4" height="1" fill="#222"/>
<rect x="799" y="883" width="4" height="1" fill="#222"/>
<rect x="799" y="881" width="4" height="1" fill="#222"/>
<rect x="799" y="880" width="4" height="1" fill="#222"/>
<rect x="799" y="878" width="4" height="1" fill="#222"/>
<rect x="795" y="876" width="8" height="1" fill="#222"/>
<rect x="799" y="874" width="4" height="1" fill="#222"/>
<rect x="799" y="872" width="4" height="1" fill="#222"/>
<rect x="799" y="870" width="4" height="1" fill="#222"/>
<rect x="799" y="869" width="4" height="1" fill="#222"/>
<rect x="799" y="867" width="4" height="1" fill="#222"/>
<rect x="799" y="865" width="4" height="1" fill="#222"/>
<rect x="799" y="863" width="4" height="1" fill="#222"/>
<rect x="799" y="861" width="4" height="1" fill="#222"/>
<rect x="799" y="860" width="4" height="1" fill="#222"/>
<rect x="795" y="858" width="8" height="1" fill="#222"/>
<rect x="799" y="856" width="4" height="1" fill="#222"/>
<rect x="799" y="854" width="4" height="1" fill="#222"/>
<rect x="799" y="852" width="4" height="1" fill="#222"/>
<rect x="799" y="850" width="4" height="1" fill="#222"/>
<rect x="799" y="849" width="4" height="1" fill="#222"/>
<rect x="799" y="847" width="4" height="1" fill="#222"/>
<rect x="799" y="845" width="4" height="1" fill="#222"/>
<rect x="799" y="843" width="4" height="1" fill="#222"/>
<rect x="799" y="841" width="4" height="1" fill="#222"/>
<rect x="795" y="839" width="8" height="1" fill="#222"/>
<rect x="799" y="838" width="4" height="1" fill="#222"/>
<rect x="799" y="836" width="4" height="1" fill="#222"/>
<rect x="799" y="834" width="4" height="1" fill="#222"/>
<rect x="799" y="832" width="4" height="1" fill="#222"/>
<rect x="799" y="830" width="4" height="1" fill="#222"/>
<rect x="799" y="829" width="4" height="1" fill="#222"/>
<rect x="799" y="827" width="4" height="1" fill="#222"/>
<rect x="799" y="825" width="4" height="1" fill="#222"/>
<rect x="799" y="823" width="4" height="1" fill="#222"/>
<rect x="795" y="821" width="8" height="1" fill="#222"/>
<rect x="799" y="819" width="4" height="1" fill="#222"/>
<rect x="799" y="818" width="4" height="1" fill="#222"/>
<rect x="799" y="816" width="4" height="1" fill="#222"/>
<rect x="799" y="814" width="4" height="1" fill="#222"/>
<rect x="799" y="812" width="4" height="1" fill="#222"/>
<rect x="799" y="810" width="4" height="1" fill="#222"/>
<rect x="799" y="808" width="4" height="1" fill="#222"/>
<rect x="799" y="807" width="4" height="1" fill="#222"/>
<rect x="799" y="805" width="4" height="1" fill="#222"/>
<rect x="795" y="803" width="8" height="1" fill="#222"/>
<rect x="804" y="950" width="1" height="9" fill="#222"/>
<rect x="822" y="950" width="1" height="5" fill="#222"/>
<rect x="841" y="950" width="1" height="9" fill="#222"/>
<rect x="860" y="950" width="1" height="5" fill="#222"/>
<rect x="879" y="950" width="1" height="9" fill="#222"/>
<rect x="898" y="950" width="1" height="5" fill="#222"/>
<rect x="917" y="950" width="1" height="9" fill="#222"/>
<rect x="935" y="950" width="1" height="5" fill="#222"/>
<rect x="954" y="950" width="1" height="9" fill="#222"/>
</g>
<text x="790.1" y="953.18" text-anchor="end"><tspan textLength="6.5" lengthAdjust="spacingAndGlyphs">-</tspan>40.</text>
<text x="790.1" y="934.96" text-anchor="end"><tspan textLength="6.5" lengthAdjust="spacingAndGlyphs">-</tspan>30.</text>
<text x="790.1" y="916.74" text-anchor="end"><tspan textLength="6.5" lengthAdjust="spacingAndGlyphs">-</tspan>20.</text>
<text x="790.1" y="898.52" text-anchor="end"><tspan textLength="6.5" lengthAdjust="spacingAndGlyphs">-</tspan>10.</text>
<text x="790.1" y="880.3" text-anchor="end">0.</text>
<text x="790.1" y="862.08" text-anchor="end">10.</text>
<text x="790.1" y="843.86" text-anchor="end">20.</text>
<text x="790.1" y="825.64" text-anchor="end">30.</text>
<text x="790.1" y="807.42" text-anchor="end">40.</text>
<text x="803.88" y="973.3" text-anchor="middle"><tspan textLength="6.5" lengthAdjust="spacingAndGlyphs">-</tspan>40.</text>
<text x="841.54" y="973.3" text-anchor="middle"><tspan textLength="6.5" lengthAdjust="spacingAndGlyphs">-</tspan>20.</text>
<text x="879.2" y="973.3" text-anchor="middle">0.</text>
<text x="916.86" y="973.3" text-anchor="middle">20.</text>
<text x="954.52" y="973.3" text-anchor="middle">40.</text>
<text x="878.8" y="991.4" text-anchor="middle" textLength="38" lengthAdjust="spacingAndGlyphs">KSM-Y</text>
<text x="754.4" y="877.5" text-anchor="middle" textLength="36" lengthAdjust="spacingAndGlyphs" transform="rotate(-90 754.4 877.5)">KSM-Z</text>
<clipPath id="co3"><rect x="804" y="803.0" width="150" height="146.5"/></clipPath>
<g clip-path="url(#co3)" fill="none">
<ellipse cx="879.5" cy="876.6" rx="84.2" ry="81.5" stroke="#8b4a12" stroke-width="1" stroke-dasharray="2.5 1.5"/>
<ellipse cx="880.1" cy="876.6" rx="38.2" ry="9.9" stroke="#000" stroke-width="1.4"/>
<ellipse cx="879.5" cy="877.2" rx="1.8" ry="1.4" stroke="#000" stroke-width="1"/>
<line x1="900.1" y1="887.8" x2="947.9" y2="915.1" stroke="#000" stroke-width="1.4"/>
<line x1="937.3" y1="909" x2="943" y2="912" stroke="#1010ff" stroke-width="4" stroke-linecap="round"/>
<path d="M938 907.2 L946.2 915.2 M946.2 907.2 L938 915.2" stroke="#ff2020" stroke-width="1.3"/>
<circle cx="870.5" cy="867.1" r="2.6" fill="#ff0000"/>
</g>
</svg>
</body></html>
